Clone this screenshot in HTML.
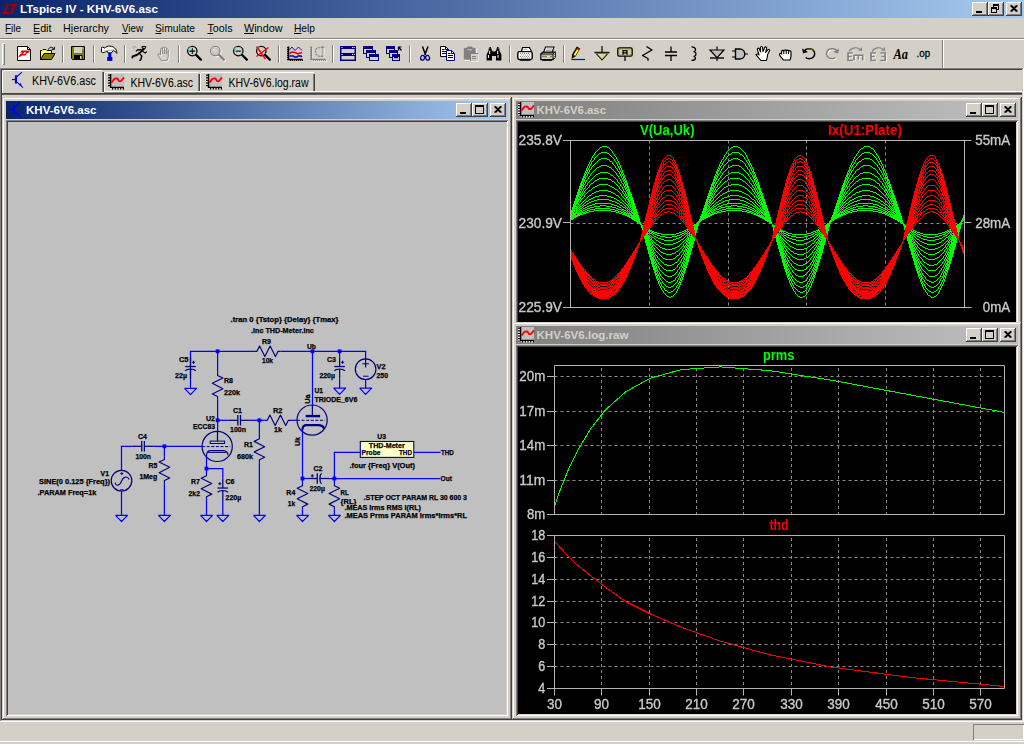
<!DOCTYPE html><html><head><meta charset="utf-8"><title>LTspice IV - KHV-6V6.asc</title><style>
html,body{margin:0;padding:0;}
body{width:1024px;height:744px;overflow:hidden;background:#d4d0c8;position:relative;font-family:"Liberation Sans",sans-serif;font-size:11px;}
div{position:absolute;box-sizing:border-box;}
svg{position:absolute;left:0;top:0;overflow:visible;}
.btn{background:#d4d0c8;box-shadow:inset -1px -1px #404040,inset 1px 1px #fff,inset -2px -2px #808080,inset 2px 2px #d4d0c8;}
.win{background:#d4d0c8;box-shadow:inset -1px -1px #404040,inset 1px 1px #d4d0c8,inset -2px -2px #808080,inset 2px 2px #fff;}
.sunk{box-shadow:inset 1px 1px #808080,inset -1px -1px #fff,inset 2px 2px #404040,inset -2px -2px #d4d0c8;}
.act{background:linear-gradient(to right,#0a246a,#a6caf0);}
.inact{background:linear-gradient(to right,#808080,#c0c0c0);}
text{font-family:"Liberation Sans",sans-serif;}
</style></head><body><div class="act" style="left:0px;top:0px;width:1024px;height:18px;"></div><div class="btn" style="left:972px;top:2px;width:16px;height:14px"><div style="left:4px;top:9px;width:6px;height:2px;background:#000"></div></div><div class="btn" style="left:988px;top:2px;width:16px;height:14px"><div style="left:5px;top:2px;width:6px;height:6px;border:1px solid #000;border-top:2px solid #000"></div><div style="left:3px;top:5px;width:6px;height:6px;border:1px solid #000;border-top:2px solid #000;background:#d4d0c8"></div></div><div class="btn" style="left:1006px;top:2px;width:16px;height:14px"><svg width="16" height="14" shape-rendering="crispEdges"><path d="M4.5 3.5 L10.5 9.5 M5.5 3.5 L11.5 9.5 M10.5 3.5 L4.5 9.5 M11.5 3.5 L5.5 9.5" stroke="#000" stroke-width="1.25" fill="none" shape-rendering="auto"/></svg></div><div style="left:0px;top:38px;width:1024px;height:1px;background:#808080"></div><div style="left:0px;top:39px;width:1024px;height:1px;background:#fff"></div><div style="left:2px;top:43px;width:3px;height:22px;background:#d4d0c8;box-shadow:inset 1px 1px #fff,inset -1px -1px #808080"></div><div style="left:942px;top:40px;width:1px;height:28px;background:#808080"></div><div style="left:943px;top:40px;width:1px;height:28px;background:#fff"></div><div style="left:62px;top:45px;width:1px;height:18px;background:#808080"></div><div style="left:63px;top:45px;width:1px;height:18px;background:#fff"></div><div style="left:93px;top:45px;width:1px;height:18px;background:#808080"></div><div style="left:94px;top:45px;width:1px;height:18px;background:#fff"></div><div style="left:124px;top:45px;width:1px;height:18px;background:#808080"></div><div style="left:125px;top:45px;width:1px;height:18px;background:#fff"></div><div style="left:178px;top:45px;width:1px;height:18px;background:#808080"></div><div style="left:179px;top:45px;width:1px;height:18px;background:#fff"></div><div style="left:278px;top:45px;width:1px;height:18px;background:#808080"></div><div style="left:279px;top:45px;width:1px;height:18px;background:#fff"></div><div style="left:332px;top:45px;width:1px;height:18px;background:#808080"></div><div style="left:333px;top:45px;width:1px;height:18px;background:#fff"></div><div style="left:409px;top:45px;width:1px;height:18px;background:#808080"></div><div style="left:410px;top:45px;width:1px;height:18px;background:#fff"></div><div style="left:509px;top:45px;width:1px;height:18px;background:#808080"></div><div style="left:510px;top:45px;width:1px;height:18px;background:#fff"></div><div style="left:563px;top:45px;width:1px;height:18px;background:#808080"></div><div style="left:564px;top:45px;width:1px;height:18px;background:#fff"></div><div style="left:0px;top:68px;width:1024px;height:1px;background:#808080"></div><div style="left:0px;top:69px;width:1024px;height:1px;background:#404040"></div><div style="left:0px;top:68px;width:1px;height:654px;background:#808080"></div><div style="left:1px;top:69px;width:1px;height:652px;background:#404040"></div><div style="left:1023px;top:68px;width:1px;height:654px;background:#fff"></div><div style="left:1022px;top:69px;width:1px;height:652px;background:#d4d0c8"></div><div style="left:0px;top:721px;width:1024px;height:1px;background:#fff"></div><div style="left:1px;top:720px;width:1022px;height:1px;background:#d4d0c8"></div><div style="left:2px;top:91px;width:1020px;height:1px;background:#fff"></div><div style="left:2px;top:92px;width:1020px;height:1px;background:#909090"></div><div style="left:2px;top:93px;width:1020px;height:1px;background:#404040"></div><div style="left:2px;top:94px;width:1020px;height:1px;background:#606060"></div><div style="left:2px;top:70px;width:102px;height:24px;background:#d4d0c8"></div><div style="left:4px;top:70px;width:98px;height:1px;background:#fff"></div><div style="left:2px;top:72px;width:1px;height:21px;background:#fff"></div><div style="left:3px;top:71px;width:1px;height:1px;background:#fff"></div><div style="left:102px;top:72px;width:1px;height:20px;background:#808080"></div><div style="left:103px;top:72px;width:1px;height:20px;background:#404040"></div><div style="left:2px;top:93px;width:102px;height:1px;background:#404040"></div><div style="left:105px;top:72px;width:94px;height:1px;background:#fff"></div><div style="left:104px;top:73px;width:1px;height:18px;background:#fff"></div><div style="left:199px;top:74px;width:1px;height:17px;background:#404040"></div><div style="left:198px;top:74px;width:1px;height:17px;background:#808080"></div><div style="left:201px;top:72px;width:113px;height:1px;background:#fff"></div><div style="left:200px;top:73px;width:1px;height:18px;background:#fff"></div><div style="left:314px;top:74px;width:1px;height:17px;background:#404040"></div><div style="left:313px;top:74px;width:1px;height:17px;background:#808080"></div><div class="win" style="left:2px;top:97px;width:510px;height:623px"><div class="act" style="left:4px;top:4px;width:502px;height:18px"></div><div class="btn" style="left:488px;top:6px;width:16px;height:14px"><svg width="16" height="14" shape-rendering="crispEdges"><path d="M4.5 3.5 L10.5 9.5 M5.5 3.5 L11.5 9.5 M10.5 3.5 L4.5 9.5 M11.5 3.5 L5.5 9.5" stroke="#000" stroke-width="1.25" fill="none" shape-rendering="auto"/></svg></div><div class="btn" style="left:470px;top:6px;width:16px;height:14px"><div style="left:3px;top:2px;width:9px;height:9px;border:1px solid #000;border-top:2px solid #000"></div></div><div class="btn" style="left:454px;top:6px;width:16px;height:14px"><div style="left:4px;top:9px;width:6px;height:2px;background:#000"></div></div></div><div class="sunk" style="left:6px;top:120px;width:502px;height:596px;background:#c0c0c0"></div><div class="win" style="left:512px;top:97px;width:510px;height:232px"><div class="inact" style="left:4px;top:4px;width:502px;height:18px"></div><div class="btn" style="left:488px;top:6px;width:16px;height:14px"><svg width="16" height="14" shape-rendering="crispEdges"><path d="M4.5 3.5 L10.5 9.5 M5.5 3.5 L11.5 9.5 M10.5 3.5 L4.5 9.5 M11.5 3.5 L5.5 9.5" stroke="#000" stroke-width="1.25" fill="none" shape-rendering="auto"/></svg></div><div class="btn" style="left:470px;top:6px;width:16px;height:14px"><div style="left:3px;top:2px;width:9px;height:9px;border:1px solid #000;border-top:2px solid #000"></div></div><div class="btn" style="left:454px;top:6px;width:16px;height:14px"><div style="left:4px;top:9px;width:6px;height:2px;background:#000"></div></div></div><div class="sunk" style="left:516px;top:120px;width:502px;height:210px;background:#000"></div><div class="win" style="left:512px;top:322px;width:510px;height:398px"><div class="inact" style="left:4px;top:4px;width:502px;height:18px"></div><div class="btn" style="left:488px;top:6px;width:16px;height:14px"><svg width="16" height="14" shape-rendering="crispEdges"><path d="M4.5 3.5 L10.5 9.5 M5.5 3.5 L11.5 9.5 M10.5 3.5 L4.5 9.5 M11.5 3.5 L5.5 9.5" stroke="#000" stroke-width="1.25" fill="none" shape-rendering="auto"/></svg></div><div class="btn" style="left:470px;top:6px;width:16px;height:14px"><div style="left:3px;top:2px;width:9px;height:9px;border:1px solid #000;border-top:2px solid #000"></div></div><div class="btn" style="left:454px;top:6px;width:16px;height:14px"><div style="left:4px;top:9px;width:6px;height:2px;background:#000"></div></div></div><div class="sunk" style="left:516px;top:345px;width:502px;height:371px;background:#000"></div><div style="left:0px;top:741px;width:1024px;height:1px;background:#fff"></div><div style="left:973px;top:724px;width:51px;height:16px;box-shadow:inset 1px 1px #808080,inset -1px -1px #fff"></div><svg width="1024" height="744" style="z-index:40"><g transform="translate(17,46)"><path d="M0.5 0.5 H10.5 L13.5 3.5 V14.5 H0.5 Z" fill="#fff" stroke="#000"/><path d="M10.5 0.5 V3.5 H13.5" fill="none" stroke="#000"/><path d="M4.6 4.4 H13 L11.4 7 H10 L8.6 9.4 H5.4 L1 11.4 L3.4 7.8 H4.4 L5.2 6.6 H3.2 Z" fill="#e80000"/><path d="M6 8 L7.2 6.2 H9.2 L8 8 Z" fill="#fff"/></g><g transform="translate(40,46)"><path d="M0.5 13.5 V4.5 H2 L3 3.5 H6 L7 4.5 H11.5 V7" fill="#ffff80" stroke="#000"/><path d="M0.5 13.5 L4 7.5 H15 L11.5 13.5 Z" fill="#808000" stroke="#000"/><path d="M8.5 3.5 C9.5 0.5 12.5 0.5 13.5 3" fill="none" stroke="#000"/><path d="M11.6 3.4 H14.4 V0.8" fill="none" stroke="#000"/></g><g transform="translate(71,46)"><path d="M0.5 0.5 H13.5 V13.5 H1.5 L0.5 12.5 Z" fill="#808000" stroke="#000"/><rect x="3" y="1" width="8" height="6" fill="#d4d0c8"/><rect x="11.5" y="1.5" width="1" height="1.5" fill="#d4d0c8"/><rect x="3" y="9" width="8.5" height="4.5" fill="#000"/><rect x="9" y="10" width="1.6" height="3" fill="#d4d0c8"/></g><g transform="translate(102,46)"><path d="M-0.5 2.4 Q-0.9 1.2 0.6 1.2 L2.8 2 C5 -0.7 11 -0.7 13.6 3 C14.6 4.6 15 6 14.8 7.4 C13.8 5.6 12.6 4.8 11 4.6 L9.6 6.8 L5.8 6.8 L5.4 5.4 C4.4 5.4 3.6 5.6 2.8 6.2 L0.4 6.6 Q-1 6.4 -0.6 5 Z" fill="#fff" stroke="#000" stroke-width="1" stroke-linejoin="round"/><path d="M2.6 5.2 C5 4.4 9 4 11.6 4" fill="none" stroke="#a0a0a0" stroke-width="1.2"/><rect x="6.3" y="7" width="3" height="7.8" fill="#0000c8"/><rect x="5.2" y="11" width="5.2" height="3.8" fill="#0000c8"/></g><g transform="translate(133,46)"><g stroke="#000" fill="none" stroke-linecap="round" stroke-linejoin="round"><path d="M9.2 0.5 H13 L12.2 2.6 H9.8 Z" fill="#000" stroke-width="0.8"/><rect x="10.4" y="1" width="1.3" height="1.1" fill="#fff" stroke="none"/><path d="M10.8 3 L7 6.6 L3.8 9 L-0.4 10.4 L-0.6 11.6" stroke-width="1.9"/><path d="M6.6 7.8 L8.8 10 L7.8 13.6 L6.9 14.3" stroke-width="1.5"/><path d="M9.4 3.9 L5 3.7 L3.2 5" stroke-width="1.2"/><path d="M9.8 5.6 L12.2 7 L13.4 5.9" stroke-width="1.2"/><path d="M-0.4 1.6 L1.2 2.8 M1.4 0.4 L3.2 1.6 M0.6 0.2 L1.6 0.8" stroke="#909090" stroke-width="0.8"/></g></g><g transform="translate(156,46)"><path d="M4.5 14.5 C3 12 1.5 10 0.8 8.2 C1.6 7.2 2.8 7.8 3.6 9 V3 C3.6 1.8 5.4 1.8 5.4 3 V1.6 C5.4 0.4 7.4 0.4 7.4 1.6 V2.2 C7.4 1 9.4 1 9.4 2.2 V3.4 C9.4 2.4 11.2 2.4 11.2 3.6 V10 C11.2 12 10.4 13 10 14.5 Z" transform="translate(1.8,1)" fill="none" stroke="#fff" stroke-width="1"/><path d="M4.5 14.5 C3 12 1.5 10 0.8 8.2 C1.6 7.2 2.8 7.8 3.6 9 V3 C3.6 1.8 5.4 1.8 5.4 3 V1.6 C5.4 0.4 7.4 0.4 7.4 1.6 V2.2 C7.4 1 9.4 1 9.4 2.2 V3.4 C9.4 2.4 11.2 2.4 11.2 3.6 V10 C11.2 12 10.4 13 10 14.5 Z" transform="translate(1,0.2)" fill="none" stroke="#808080" stroke-width="1"/><path d="M6.4 3 V8 M8.4 2.4 V8 M10.4 3.6 V8" stroke="#808080" stroke-width="0.9" fill="none"/></g><g transform="translate(187,46)"><circle cx="5.3" cy="5.1" r="4.7" fill="none" stroke="#000" stroke-width="1.25"/><path d="M1.5 3.4 A4 4 0 0 1 3.8 1.4" stroke="#00ffff" stroke-width="1.3" fill="none"/><path d="M7.4 8.8 A4 4 0 0 0 9 6.8" stroke="#00ffff" stroke-width="1.3" fill="none"/><path d="M9 8.8 L13.8 13.6" stroke="#000" stroke-width="2.3" stroke-linecap="round"/><path d="M2.4 5.1 H8.2 M5.3 2.2 V8" stroke="#000" stroke-width="1.1"/></g><g transform="translate(210,46)"><g transform="translate(1,1)"><circle cx="5.3" cy="5.1" r="4.7" fill="none" stroke="#fff" stroke-width="1.25"/><path d="M1.5 3.4 A4 4 0 0 1 3.8 1.4" stroke="#fff" stroke-width="1.3" fill="none"/><path d="M7.4 8.8 A4 4 0 0 0 9 6.8" stroke="#fff" stroke-width="1.3" fill="none"/><path d="M9 8.8 L13.8 13.6" stroke="#fff" stroke-width="2.3" stroke-linecap="round"/></g><circle cx="5.3" cy="5.1" r="4.7" fill="none" stroke="#808080" stroke-width="1.25"/><path d="M1.5 3.4 A4 4 0 0 1 3.8 1.4" stroke="#c0c0c0" stroke-width="1.3" fill="none"/><path d="M7.4 8.8 A4 4 0 0 0 9 6.8" stroke="#c0c0c0" stroke-width="1.3" fill="none"/><path d="M9 8.8 L13.8 13.6" stroke="#808080" stroke-width="2.3" stroke-linecap="round"/><circle cx="5.3" cy="5.1" r="3.2" fill="none" stroke="#b8b8b8" stroke-width="1"/></g><g transform="translate(233,46)"><circle cx="5.3" cy="5.1" r="4.7" fill="none" stroke="#000" stroke-width="1.25"/><path d="M1.5 3.4 A4 4 0 0 1 3.8 1.4" stroke="#00ffff" stroke-width="1.3" fill="none"/><path d="M7.4 8.8 A4 4 0 0 0 9 6.8" stroke="#00ffff" stroke-width="1.3" fill="none"/><path d="M9 8.8 L13.8 13.6" stroke="#000" stroke-width="2.3" stroke-linecap="round"/><path d="M2.6 5.1 H8 " stroke="#000" stroke-width="1.1"/></g><g transform="translate(256,46)"><circle cx="5.3" cy="5.1" r="4.7" fill="none" stroke="#000" stroke-width="1.25"/><path d="M1.5 3.4 A4 4 0 0 1 3.8 1.4" stroke="#00ffff" stroke-width="1.3" fill="none"/><path d="M7.4 8.8 A4 4 0 0 0 9 6.8" stroke="#00ffff" stroke-width="1.3" fill="none"/><path d="M9 8.8 L13.8 13.6" stroke="#000" stroke-width="2.3" stroke-linecap="round"/><path d="M0.5 0.5 L9.5 13 M12.5 1.5 L0.5 10.5" stroke="#ff0000" stroke-width="1.5"/></g><g transform="translate(287,46)"><path d="M1.5 0.5 V13.5 H15.5" fill="none" stroke="#000" stroke-width="1.6"/><rect x="0" y="1.2" width="1.6" height="1" fill="#000"/><rect x="0" y="3.2" width="1.6" height="1" fill="#000"/><rect x="0" y="5.2" width="1.6" height="1" fill="#000"/><rect x="0" y="7.2" width="1.6" height="1" fill="#000"/><rect x="0" y="9.2" width="1.6" height="1" fill="#000"/><rect x="0" y="11.2" width="1.6" height="1" fill="#000"/><rect x="0" y="13.2" width="1.6" height="1" fill="#000"/><rect x="3" y="13.5" width="1" height="1.5" fill="#000"/><rect x="5" y="13.5" width="1" height="1.5" fill="#000"/><rect x="7" y="13.5" width="1" height="1.5" fill="#000"/><rect x="9" y="13.5" width="1" height="1.5" fill="#000"/><rect x="11" y="13.5" width="1" height="1.5" fill="#000"/><rect x="13" y="13.5" width="1" height="1.5" fill="#000"/><rect x="15" y="13.5" width="1" height="1.5" fill="#000"/><path d="M2.5 4 L5 1 L8 4.5 L11.5 1 L15 4.5" fill="none" stroke="#4000a0" stroke-width="1"/><path d="M2.5 7.5 L5 6 L8 6.5 L11 7.8 L15 6.4" fill="none" stroke="#ff0000" stroke-width="1.6"/><path d="M2.5 10 H6.5 L7.5 11 H10 L11 10 H14 L15 10.8" fill="none" stroke="#0000c0" stroke-width="1.6"/></g><g transform="translate(310,46)"><g transform="translate(0.8,0.8)"><path d="M1.5 0.5 V13.5 H15.5" fill="none" stroke="#fff" stroke-width="1.6"/><rect x="0" y="1.2" width="1.6" height="1" fill="#fff"/><rect x="0" y="3.2" width="1.6" height="1" fill="#fff"/><rect x="0" y="5.2" width="1.6" height="1" fill="#fff"/><rect x="0" y="7.2" width="1.6" height="1" fill="#fff"/><rect x="0" y="9.2" width="1.6" height="1" fill="#fff"/><rect x="0" y="11.2" width="1.6" height="1" fill="#fff"/><rect x="0" y="13.2" width="1.6" height="1" fill="#fff"/><rect x="3" y="13.5" width="1" height="1.5" fill="#fff"/><rect x="5" y="13.5" width="1" height="1.5" fill="#fff"/><rect x="7" y="13.5" width="1" height="1.5" fill="#fff"/><rect x="9" y="13.5" width="1" height="1.5" fill="#fff"/><rect x="11" y="13.5" width="1" height="1.5" fill="#fff"/><rect x="13" y="13.5" width="1" height="1.5" fill="#fff"/><rect x="15" y="13.5" width="1" height="1.5" fill="#fff"/></g><path d="M1.5 0.5 V13.5 H15.5" fill="none" stroke="#808080" stroke-width="1.6"/><rect x="0" y="1.2" width="1.6" height="1" fill="#808080"/><rect x="0" y="3.2" width="1.6" height="1" fill="#808080"/><rect x="0" y="5.2" width="1.6" height="1" fill="#808080"/><rect x="0" y="7.2" width="1.6" height="1" fill="#808080"/><rect x="0" y="9.2" width="1.6" height="1" fill="#808080"/><rect x="0" y="11.2" width="1.6" height="1" fill="#808080"/><rect x="0" y="13.2" width="1.6" height="1" fill="#808080"/><rect x="3" y="13.5" width="1" height="1.5" fill="#808080"/><rect x="5" y="13.5" width="1" height="1.5" fill="#808080"/><rect x="7" y="13.5" width="1" height="1.5" fill="#808080"/><rect x="9" y="13.5" width="1" height="1.5" fill="#808080"/><rect x="11" y="13.5" width="1" height="1.5" fill="#808080"/><rect x="13" y="13.5" width="1" height="1.5" fill="#808080"/><rect x="15" y="13.5" width="1" height="1.5" fill="#808080"/><path d="M13 1.5 C6 1 5 3.5 5.5 6 C6 9 8 10.5 12 10.5" fill="none" stroke="#808080" stroke-width="1.2" stroke-dasharray="2 1"/><path d="M13 0.5 V11 M11.5 2 L13 0.5 L14.5 2 M11.5 9.5 L13 11 L14.5 9.5" fill="none" stroke="#808080" stroke-width="1"/><path d="M14 1.5 V12 " fill="none" stroke="#fff" stroke-width="0.8"/></g><g transform="translate(340,46)"><rect x="0.75" y="0.75" width="14.5" height="13.5" fill="#d4d0c8" stroke="#000080" stroke-width="1.5"/><rect x="0" y="0" width="16" height="3" fill="#000080"/><rect x="0" y="7" width="16" height="3" fill="#000080"/><rect x="1.5" y="1" width="1" height="1" fill="#fff"/><rect x="12" y="1" width="1" height="1" fill="#fff"/><rect x="13.7" y="1" width="1" height="1" fill="#fff"/><rect x="1.5" y="8" width="1" height="1" fill="#fff"/><rect x="12" y="8" width="1" height="1" fill="#fff"/><rect x="13.7" y="8" width="1" height="1" fill="#fff"/></g><g transform="translate(363,46)"><rect x="0.5" y="0.5" width="9" height="7" fill="#d4d0c8" stroke="#000080" stroke-width="1"/><rect x="0" y="0" width="10" height="3" fill="#000080"/><rect x="3.5" y="4.5" width="9" height="7" fill="#d4d0c8" stroke="#000080" stroke-width="1"/><rect x="3" y="4" width="10" height="3" fill="#000080"/><rect x="6.5" y="8.5" width="9" height="6" fill="#d4d0c8" stroke="#000080" stroke-width="1"/><rect x="6" y="8" width="10" height="3" fill="#000080"/><rect x="0.6" y="0.6" width="1" height="1" fill="#ff00ff"/></g><g transform="translate(386,46)"><rect x="0.5" y="0.5" width="8" height="7" fill="#d4d0c8" stroke="#000080" stroke-width="1"/><rect x="0" y="0" width="9" height="3" fill="#000080"/><rect x="3.5" y="4.5" width="8" height="7" fill="#d4d0c8" stroke="#000080" stroke-width="1"/><rect x="3" y="4" width="9" height="3" fill="#000080"/><rect x="6.5" y="8.5" width="7" height="6" fill="#d4d0c8" stroke="#000080" stroke-width="1"/><rect x="6" y="8" width="8" height="3" fill="#000080"/><rect x="8" y="11" width="4" height="1.2" fill="#000"/><path d="M12 1 H15.5 M12.5 1 V4.5 M12.5 1 L15.5 4.5" stroke="#000" stroke-width="1.2" fill="none"/></g><g transform="translate(417,46)"><path d="M5.5 0.5 L8.6 9 M11 0.5 L7.8 9" stroke="#000" stroke-width="1.5" fill="none"/><ellipse cx="5.6" cy="11.8" rx="1.9" ry="2.4" fill="none" stroke="#000080" stroke-width="1.3" transform="rotate(20 5.6 11.8)"/><ellipse cx="10.6" cy="11.8" rx="1.9" ry="2.4" fill="none" stroke="#000080" stroke-width="1.3" transform="rotate(-20 10.6 11.8)"/></g><g transform="translate(440,46)"><path d="M0.5 0.5 H5.5 L8.5 3.5 V10.5 H0.5 Z" fill="#fff" stroke="#000"/><path d="M5.5 0.5 V3.5 H8.5" fill="none" stroke="#000"/><path d="M2 5.5 H7 M2 7.5 H7 M2 3.5 H4.5" stroke="#000" stroke-width="1" fill="none"/><path d="M6.5 4.5 H11.5 L14.5 7.5 V14.5 H6.5 Z" fill="#fff" stroke="#000080"/><path d="M11.5 4.5 V7.5 H14.5" fill="none" stroke="#000080"/><path d="M8 9.5 H13 M8 11.5 H13 M8 7.5 H10.5" stroke="#000" stroke-width="1" fill="none"/></g><g transform="translate(463,46)"><rect x="1.8" y="2.8" width="12" height="12" fill="#fff"/><rect x="0.8" y="1.8" width="12" height="12" rx="1.5" fill="#808080"/><rect x="4" y="0.6" width="5.6" height="2.4" rx="1" fill="#808080"/><rect x="4.6" y="3.2" width="4.6" height="1" fill="#c8c8c8"/><rect x="7.5" y="7.5" width="7" height="7" fill="#d4d0c8" stroke="#808080"/><path d="M9 10.5 H13 M9 12.5 H13" stroke="#808080"/><path d="M15 8 V15 H8" stroke="#fff" fill="none"/></g><g transform="translate(486,46)"><path d="M2.6 2.4 H5.6 V4 L6.8 5.4 H9.2 L10.4 4 V2.4 H13.4 V4.4 L15.4 8.6 V14.4 H10 V10 H6 V14.4 H0.6 V8.6 L2.6 4.4 Z" fill="#000"/><rect x="3.4" y="1" width="1.6" height="1.6" fill="#000"/><rect x="11" y="1" width="1.6" height="1.6" fill="#000"/><rect x="3.2" y="4.6" width="1" height="3.4" fill="#fff"/><rect x="11.2" y="4.6" width="1" height="3.4" fill="#fff"/><rect x="2" y="9" width="0.9" height="3" fill="#fff"/><rect x="11.6" y="9" width="0.9" height="3" fill="#fff"/></g><g transform="translate(517,46)"><path d="M4.5 5.5 L5.5 1.5 H12.5 L14.5 5.5" fill="#fff" stroke="#000" stroke-width="1.2"/><path d="M6.5 2.8 L7.5 4 L9 2.6 L10.4 3.8" fill="none" stroke="#808080" stroke-width="0.8"/><rect x="0.8" y="5.6" width="14.4" height="7.8" rx="1.6" fill="#fff" stroke="#000" stroke-width="1.4"/><path d="M3 7.5 H13 M4 9 H14 M3 10.5 H13 M4 12 H14" stroke="#808080" stroke-width="0.9" stroke-dasharray="1 1"/><rect x="2.5" y="13.4" width="11" height="1.4" fill="#000"/></g><g transform="translate(540,46)"><path d="M3.5 6.5 L5.5 1 H14 L12 6.5 Z" fill="#fff" stroke="#000" stroke-width="1.1"/><path d="M6.5 3 H12 M6 4.6 H11.4" stroke="#808080" stroke-width="0.8"/><path d="M0.8 8 L3 6.2 H15.2 V11 L13 13.6 H0.8 Z" fill="#d4d0c8" stroke="#000" stroke-width="1.2"/><path d="M0.8 8 H13 L15.2 6.2 M13 8 V13.6" fill="none" stroke="#000" stroke-width="1"/><rect x="1.6" y="9.6" width="10.6" height="1.6" fill="#808080"/><rect x="7" y="9.8" width="3" height="1.2" fill="#ffff00"/><path d="M13.8 8 L14.8 7.2 M13.8 10 L14.8 9.2 M13.8 12 L14.8 11" stroke="#fff" stroke-width="0.8"/><rect x="2" y="13.6" width="10" height="1.2" fill="#000"/></g><g transform="translate(571,46)"><path d="M0.5 13.5 H14" stroke="#0000ff" stroke-width="1.2"/><path d="M0.6 12.8 L1.2 8.2 L5.8 0.6 L9.2 2.6 L4.6 10.4 Z" fill="#000"/><path d="M2.6 8.8 L6 3 L7.8 4 L4.2 10 Z" fill="#ffff00"/><path d="M6 3 L6.8 1.8 L8.4 2.8 L7.8 4 Z" fill="#ff0000"/><path d="M2.2 9.4 L3.8 10.4 " stroke="#ff0000" stroke-width="0.9"/></g><g transform="translate(594,46)"><path d="M8 0 V6.5" stroke="#000" stroke-width="1.2"/><path d="M0.5 6.5 H15.5" stroke="#000" stroke-width="1.4"/><path d="M2 7.4 H14 L8 14 Z" fill="#d4d0c8" stroke="#808000" stroke-width="1.2"/><path d="M2.6 8 L8 14 L13.4 8" fill="none" stroke="#202000" stroke-width="1"/></g><g transform="translate(617,46)"><rect x="0.8" y="1.8" width="14.4" height="8.4" rx="1.6" fill="#d4d0c8" stroke="#000" stroke-width="1.3"/><rect x="1.8" y="2.8" width="12.4" height="6.4" rx="1" fill="none" stroke="#808000" stroke-width="0.9"/><path d="M8 10.5 V15" stroke="#000" stroke-width="1.3"/><path d="M6 8.8 V4.6 H10 V8.8 M6 6.8 H10" fill="none" stroke="#000" stroke-width="1.3"/></g><g transform="translate(640,46)"><path d="M6.5 0.5 L12 4 L2.5 9.5 L8 12.5 V14.8" fill="none" stroke="#000" stroke-width="1.3" stroke-linejoin="round"/></g><g transform="translate(663,46)"><path d="M8 0.5 V6 M8 9.6 V15" stroke="#000" stroke-width="1.3"/><path d="M2 6.1 H14 M2 9.5 H14" stroke="#000" stroke-width="1.5"/></g><g transform="translate(686,46)"><path d="M5.5 0.8 C10.5 0.8 10.5 5.6 7.4 5.6 C10.8 5.6 10.8 10.4 7.4 10.4 C10.6 10.4 10.2 14.6 5.5 14.4" fill="none" stroke="#000" stroke-width="1.3"/></g><g transform="translate(709,46)"><path d="M8 0.5 V15" stroke="#000" stroke-width="1.2"/><path d="M1 4 H15 L8 11.6 Z" fill="#c0c0c0" stroke="#000" stroke-width="1.2"/><path d="M1 12 H15" stroke="#000" stroke-width="1.4"/></g><g transform="translate(732,46)"><path d="M0 5 H3.5 M0 11 H3.5 M13 8 H16" stroke="#000" stroke-width="1.2"/><path d="M3.5 3 H7.5 C14.5 3 14.5 13 7.5 13 H3.5 Z" fill="#c0c0c0" stroke="#000" stroke-width="1.4"/></g><g transform="translate(755,46)"><path d="M6 14.5 C4 12 2 10.5 1 8.6 C1.8 7.6 3.2 8 4 9 L2.4 3.6 C2 2.2 3.8 1.6 4.4 3 L5.6 6 L5.4 1.6 C5.4 0.2 7.4 0.2 7.5 1.6 L8 5.6 L9.6 1.6 C10.2 0.4 12 1 11.6 2.4 L10.6 6.4 L12.8 3.8 C13.8 2.8 15.2 3.8 14.4 5 L12.6 8.4 C12.6 11 12 12.6 11.4 14.5 Z" fill="#fff" stroke="#000" stroke-width="1.1" stroke-linejoin="round"/></g><g transform="translate(778,46)"><path d="M5.4 14 C4 12 2.6 11 1.6 9 C1.2 7.6 2.6 6.8 3.6 7.8 V5.6 C3.6 4 5.6 4 5.8 5.2 C5.8 3.6 8 3.6 8.2 5 C8.4 3.6 10.6 3.8 10.6 5.2 C11 4.2 13 4.4 13 6 V9.6 C13 11.6 12.4 12.6 12 14 Z" fill="#fff" stroke="#000" stroke-width="1.2" stroke-linejoin="round"/><path d="M5.8 5.2 V8 M8.2 5 V8 M10.6 5.2 V8" stroke="#000" stroke-width="1" fill="none"/></g><g transform="translate(800.4,46) scale(1.09,1)"><path d="M3.4 5.4 C5 2 10.6 1.6 12.6 5.4 C14.2 9 12 12.6 8 12.8 C6.6 12.8 5.6 12.4 4.8 11.6" fill="none" stroke="#000" stroke-width="1.4"/><path d="M6 3.4 C8.4 2.4 11 3.2 12 5.4" fill="none" stroke="#808000" stroke-width="1"/><path d="M1.6 2.4 L2.4 7.4 L7 6 Z" fill="#000"/></g><g transform="translate(823.4,46) scale(1.09,1)"><g transform="translate(0.8,0.8)"><path d="M12.6 5.4 C11 2 5.4 1.6 3.4 5.4 C1.8 9 4 12.6 8 12.8 C9.4 12.8 10.4 12.4 11.2 11.6" fill="none" stroke="#fff" stroke-width="1.3"/></g><path d="M12.6 5.4 C11 2 5.4 1.6 3.4 5.4 C1.8 9 4 12.6 8 12.8 C9.4 12.8 10.4 12.4 11.2 11.6" fill="none" stroke="#808080" stroke-width="1.4"/><path d="M14.4 2.4 L13.6 7.4 L9 6 Z" fill="#808080"/></g><g transform="translate(846.4,46) scale(1.09,1)"><g transform="translate(0.8,0.8)" stroke="#fff" fill="none" stroke-width="1.3"><path d="M6.0 7 H1.5 V14.4 H6.0 M1.5 10.6 H4.9"/><path d="M7 14.4 V9.2 H15 V14.4 M11 9.2 V13.4"/></g><g stroke="#808080" fill="none" stroke-width="1.5"><path d="M6.0 7 H1.5 V14.4 H6.0 M1.5 10.6 H4.9"/><path d="M7 14.4 V9.2 H15 V14.4 M11 9.2 V13.4"/><path d="M2.5 5.4 C4.5 1.4 10 0.6 13.4 3.8" stroke-width="1.1"/><path d="M11 4.2 H13.8 V1.4" stroke-width="1.1"/></g></g><g transform="translate(869.4,46) scale(1.09,1)"><g transform="translate(0.8,0.8)" stroke="#fff" fill="none" stroke-width="1.3"><path d="M6.0 7 H1.5 V14.4 H6.0 M1.5 10.6 H4.9"/><path d="M10.0 7 H14.5 V14.4 H10.0 M14.5 10.6 H11.1"/></g><g stroke="#808080" fill="none" stroke-width="1.5"><path d="M6.0 7 H1.5 V14.4 H6.0 M1.5 10.6 H4.9"/><path d="M10.0 7 H14.5 V14.4 H10.0 M14.5 10.6 H11.1"/><path d="M2.5 5.4 C4.5 1.4 10 0.6 13.4 3.8" stroke-width="1.1"/><path d="M11 4.2 H13.8 V1.4" stroke-width="1.1"/></g></g><g transform="translate(894,46)"><text x="-0.5" y="13" style="font-family:Liberation Serif,serif" font-style="italic" font-weight="bold" font-size="15" fill="#000" textLength="14.5" lengthAdjust="spacingAndGlyphs">Aa</text></g><g transform="translate(917,46)"><text x="-0.5" y="10.5" font-family="Liberation Sans,sans-serif" font-size="11.5" fill="#000" stroke="#000" stroke-width="0.3" textLength="13.6" lengthAdjust="spacingAndGlyphs">.op</text></g><g transform="translate(2.2,3.8)"><path d="M4.6 0.4 L6.2 0.4 L3.6 8.2 L7.2 8.2 L6.6 10 L0 10 L0.8 8.4 L2 8.2 Z" fill="#a80000" stroke="#a80000" stroke-width="0.7"/><path d="M8.4 0.4 L15 0.4 L14.4 2 L13.2 2 L10.4 8.8 L9 10.2 L8.2 9.6 L11.2 2 L7.8 2 Z" fill="#a80000" stroke="#a80000" stroke-width="0.7"/></g><g transform="translate(12,72)"><g stroke="#0000ff" fill="none"><path d="M0 7.5 H3.2" stroke-width="1.2"/><path d="M3.95 3.3 V11.6" stroke-width="2.1"/><path d="M5 4.5 L10 0.1" stroke-width="1.1"/><path d="M5 10.2 L11 15.7" stroke-width="1.1"/></g><path d="M6.6 12.9 L9.9 14.1 L8.6 10.8 Z" fill="#0000ff"/></g><g transform="translate(10,102)"><g stroke="#0000ff" fill="none"><path d="M0 7.5 H3.2" stroke-width="1.2"/><path d="M3.95 3.3 V11.6" stroke-width="2.1"/><path d="M5 4.5 L10 0.1" stroke-width="1.1"/><path d="M5 10.2 L11 15.7" stroke-width="1.1"/></g><path d="M6.6 12.9 L9.9 14.1 L8.6 10.8 Z" fill="#0000ff"/></g><g transform="translate(108,74)"><rect x="2.5" y="0" width="13.5" height="13" fill="#c0c0c0"/><path d="M2.6 0 V13.4 H16" fill="none" stroke="#000" stroke-width="1.4"/><rect x="0" y="0.6" width="2" height="1.2" fill="#000"/><rect x="0" y="3.2" width="2" height="1.2" fill="#000"/><rect x="0" y="5.8" width="2" height="1.2" fill="#000"/><rect x="0" y="8.4" width="2" height="1.2" fill="#000"/><rect x="0" y="11.0" width="2" height="1.2" fill="#000"/><rect x="4.0" y="13.4" width="1.2" height="2.2" fill="#000"/><rect x="6.7" y="13.4" width="1.2" height="2.2" fill="#000"/><rect x="9.4" y="13.4" width="1.2" height="2.2" fill="#000"/><rect x="12.100000000000001" y="13.4" width="1.2" height="2.2" fill="#000"/><rect x="14.8" y="13.4" width="1.2" height="2.2" fill="#000"/><path d="M3.4 8.6 L6.6 4.6 L9.4 4.4 L11.2 7.2 L13 7 L16 3.4" fill="none" stroke="#ff0000" stroke-width="1.8" stroke-linejoin="round"/></g><g transform="translate(206,74)"><rect x="2.5" y="0" width="13.5" height="13" fill="#c0c0c0"/><path d="M2.6 0 V13.4 H16" fill="none" stroke="#000" stroke-width="1.4"/><rect x="0" y="0.6" width="2" height="1.2" fill="#000"/><rect x="0" y="3.2" width="2" height="1.2" fill="#000"/><rect x="0" y="5.8" width="2" height="1.2" fill="#000"/><rect x="0" y="8.4" width="2" height="1.2" fill="#000"/><rect x="0" y="11.0" width="2" height="1.2" fill="#000"/><rect x="4.0" y="13.4" width="1.2" height="2.2" fill="#000"/><rect x="6.7" y="13.4" width="1.2" height="2.2" fill="#000"/><rect x="9.4" y="13.4" width="1.2" height="2.2" fill="#000"/><rect x="12.100000000000001" y="13.4" width="1.2" height="2.2" fill="#000"/><rect x="14.8" y="13.4" width="1.2" height="2.2" fill="#000"/><path d="M3.4 8.6 L6.6 4.6 L9.4 4.4 L11.2 7.2 L13 7 L16 3.4" fill="none" stroke="#ff0000" stroke-width="1.8" stroke-linejoin="round"/></g><g transform="translate(518,102)"><rect x="2.5" y="0" width="13.5" height="13" fill="#c0c0c0"/><rect x="0" y="0.4" width="2.6" height="12.6" fill="#f0f0f0"/><rect x="3.6" y="13.4" width="12.4" height="2.2" fill="#f0f0f0"/><path d="M2.6 0 V13.4 H16" fill="none" stroke="#000" stroke-width="1.4"/><rect x="0" y="0.6" width="2" height="1.2" fill="#000"/><rect x="0" y="3.2" width="2" height="1.2" fill="#000"/><rect x="0" y="5.8" width="2" height="1.2" fill="#000"/><rect x="0" y="8.4" width="2" height="1.2" fill="#000"/><rect x="0" y="11.0" width="2" height="1.2" fill="#000"/><rect x="4.0" y="13.4" width="1.2" height="2.2" fill="#000"/><rect x="6.7" y="13.4" width="1.2" height="2.2" fill="#000"/><rect x="9.4" y="13.4" width="1.2" height="2.2" fill="#000"/><rect x="12.100000000000001" y="13.4" width="1.2" height="2.2" fill="#000"/><rect x="14.8" y="13.4" width="1.2" height="2.2" fill="#000"/><path d="M3.4 8.6 L6.6 4.6 L9.4 4.4 L11.2 7.2 L13 7 L16 3.4" fill="none" stroke="#ff0000" stroke-width="1.8" stroke-linejoin="round"/></g><g transform="translate(518,327)"><rect x="2.5" y="0" width="13.5" height="13" fill="#c0c0c0"/><rect x="0" y="0.4" width="2.6" height="12.6" fill="#f0f0f0"/><rect x="3.6" y="13.4" width="12.4" height="2.2" fill="#f0f0f0"/><path d="M2.6 0 V13.4 H16" fill="none" stroke="#000" stroke-width="1.4"/><rect x="0" y="0.6" width="2" height="1.2" fill="#000"/><rect x="0" y="3.2" width="2" height="1.2" fill="#000"/><rect x="0" y="5.8" width="2" height="1.2" fill="#000"/><rect x="0" y="8.4" width="2" height="1.2" fill="#000"/><rect x="0" y="11.0" width="2" height="1.2" fill="#000"/><rect x="4.0" y="13.4" width="1.2" height="2.2" fill="#000"/><rect x="6.7" y="13.4" width="1.2" height="2.2" fill="#000"/><rect x="9.4" y="13.4" width="1.2" height="2.2" fill="#000"/><rect x="12.100000000000001" y="13.4" width="1.2" height="2.2" fill="#000"/><rect x="14.8" y="13.4" width="1.2" height="2.2" fill="#000"/><path d="M3.4 8.6 L6.6 4.6 L9.4 4.4 L11.2 7.2 L13 7 L16 3.4" fill="none" stroke="#ff0000" stroke-width="1.8" stroke-linejoin="round"/></g></svg><svg width="1024" height="744" style="z-index:30"><path d="M190.50 388.40 L190.50 351.30 L254.30 351.30" fill="none" stroke="#0000ff" stroke-width="1.25"/><path d="M254.30 351.30 L256.94 351.30 L259.58 346.02 L264.86 356.58 L270.14 346.02 L275.42 356.58 L278.06 351.30 L280.70 351.30" fill="none" stroke="#000080" stroke-width="1.15" stroke-linejoin="round"/><path d="M280.70 351.30 L365.60 351.30 L365.60 359.00" fill="none" stroke="#0000ff" stroke-width="1.25"/><path d="M190.50 357.30 L190.50 366.54" fill="none" stroke="#000080" stroke-width="1.25"/><path d="M190.50 369.18 L190.50 378.42" fill="none" stroke="#000080" stroke-width="1.25"/><path d="M185.22 366.54 L195.78 366.54" fill="none" stroke="#000080" stroke-width="1.3"/><path d="M185.22 370.83 Q186.54 369.18 190.50 369.18 Q194.46 369.18 195.78 370.83" fill="none" stroke="#000080" stroke-width="1.3"/><path d="M191.87 362.25 L195.07 362.25" fill="none" stroke="#000080" stroke-width="1"/><path d="M193.47 360.65 L193.47 363.85" fill="none" stroke="#000080" stroke-width="1"/><path d="M184.50 388.40 L196.50 388.40 L190.50 394.60 L184.50 388.40" fill="none" stroke="#0000ff" stroke-width="1.2" stroke-linejoin="round"/><path d="M217.60 351.30 L217.60 372.80" fill="none" stroke="#0000ff" stroke-width="1.25"/><path d="M217.60 372.80 L217.60 375.44 L222.88 378.08 L212.32 383.36 L222.88 388.64 L212.32 393.92 L217.60 396.56 L217.60 399.20" fill="none" stroke="#000080" stroke-width="1.15" stroke-linejoin="round"/><path d="M217.60 399.20 L217.60 431.00" fill="none" stroke="#0000ff" stroke-width="1.25"/><path d="M217.60 420.30 L228.60 420.30" fill="none" stroke="#0000ff" stroke-width="1.25"/><path d="M228.60 420.30 L237.84 420.30" fill="none" stroke="#000080" stroke-width="1.25"/><path d="M240.48 420.30 L249.72 420.30" fill="none" stroke="#000080" stroke-width="1.25"/><path d="M237.84 415.02 L237.84 425.58" fill="none" stroke="#000080" stroke-width="1.3"/><path d="M240.48 415.02 L240.48 425.58" fill="none" stroke="#000080" stroke-width="1.3"/><path d="M249.72 420.30 L264.60 420.30" fill="none" stroke="#0000ff" stroke-width="1.25"/><path d="M264.60 420.30 L267.24 420.30 L269.88 415.02 L275.16 425.58 L280.44 415.02 L285.72 425.58 L288.36 420.30 L291.00 420.30" fill="none" stroke="#000080" stroke-width="1.15" stroke-linejoin="round"/><path d="M291.00 420.30 L296.60 420.30" fill="none" stroke="#0000ff" stroke-width="1.25"/><path d="M259.40 420.30 L259.40 436.10" fill="none" stroke="#0000ff" stroke-width="1.25"/><path d="M259.40 436.10 L259.40 438.74 L254.12 441.38 L264.68 446.66 L254.12 451.94 L264.68 457.22 L259.40 459.86 L259.40 462.50" fill="none" stroke="#000080" stroke-width="1.15" stroke-linejoin="round"/><path d="M259.40 462.50 L259.40 515.30" fill="none" stroke="#0000ff" stroke-width="1.25"/><path d="M253.40 515.30 L265.40 515.30 L259.40 521.50 L253.40 515.30" fill="none" stroke="#0000ff" stroke-width="1.2" stroke-linejoin="round"/><path d="M312.50 351.30 L312.50 405.00" fill="none" stroke="#0000ff" stroke-width="1.25"/><path d="M339.60 351.30 L339.60 357.30" fill="none" stroke="#0000ff" stroke-width="1.25"/><path d="M339.60 357.30 L339.60 366.54" fill="none" stroke="#000080" stroke-width="1.25"/><path d="M339.60 369.18 L339.60 378.42" fill="none" stroke="#000080" stroke-width="1.25"/><path d="M334.32 366.54 L344.88 366.54" fill="none" stroke="#000080" stroke-width="1.3"/><path d="M334.32 370.83 Q335.64 369.18 339.60 369.18 Q343.56 369.18 344.88 370.83" fill="none" stroke="#000080" stroke-width="1.3"/><path d="M340.97 362.25 L344.17 362.25" fill="none" stroke="#000080" stroke-width="1"/><path d="M342.57 360.65 L342.57 363.85" fill="none" stroke="#000080" stroke-width="1"/><path d="M339.60 378.42 L339.60 388.20" fill="none" stroke="#0000ff" stroke-width="1.25"/><path d="M333.60 388.20 L345.60 388.20 L339.60 394.40 L333.60 388.20" fill="none" stroke="#0000ff" stroke-width="1.2" stroke-linejoin="round"/><circle cx="365.60" cy="369.20" r="10.30" fill="none" stroke="#000080" stroke-width="1.2"/><path d="M365.60 359.00 L365.60 367.40" fill="none" stroke="#000080" stroke-width="1.25"/><path d="M362.30 363.80 L369.00 363.80" fill="none" stroke="#000080" stroke-width="1"/><path d="M363.00 376.20 L368.60 376.20" fill="none" stroke="#000080" stroke-width="1"/><path d="M365.60 379.50 L365.60 388.20" fill="none" stroke="#0000ff" stroke-width="1.25"/><path d="M359.60 388.20 L371.60 388.20 L365.60 394.40 L359.60 388.20" fill="none" stroke="#0000ff" stroke-width="1.2" stroke-linejoin="round"/><circle cx="312.10" cy="420.10" r="15.10" fill="none" stroke="#000080" stroke-width="1.2"/><path d="M312.40 405.00 L312.40 415.10" fill="none" stroke="#000080" stroke-width="1.25"/><path d="M305.70 416.10 L320.10 416.10" fill="none" stroke="#000080" stroke-width="2.4"/><path d="M297.00 420.30 L325.10 420.30" fill="none" stroke="#000080" stroke-width="1" stroke-dasharray="3 1.6"/><path d="M302.50 429.60 Q302.50 425.10 306.50 425.10 H319.10 Q323.10 425.50 324.10 428.60" fill="none" stroke="#000080" stroke-width="2.2"/><path d="M302.50 429.00 L302.50 478.50" fill="none" stroke="#0000ff" stroke-width="1.25"/><path d="M302.50 478.50 L308.00 478.50" fill="none" stroke="#0000ff" stroke-width="1.25"/><path d="M308.00 478.50 L317.24 478.50" fill="none" stroke="#000080" stroke-width="1.25"/><path d="M319.88 478.50 L329.12 478.50" fill="none" stroke="#000080" stroke-width="1.25"/><path d="M317.24 473.22 L317.24 483.78" fill="none" stroke="#000080" stroke-width="1.3"/><path d="M321.53 473.22 Q319.88 474.54 319.88 478.50 Q319.88 482.46 321.53 483.78" fill="none" stroke="#000080" stroke-width="1.3"/><path d="M310.69 475.86 L313.89 475.86" fill="none" stroke="#000080" stroke-width="1"/><path d="M312.29 474.26 L312.29 477.46" fill="none" stroke="#000080" stroke-width="1"/><path d="M329.12 478.50 L440.30 478.50" fill="none" stroke="#0000ff" stroke-width="1.25"/><path d="M302.50 478.50 L302.50 483.00" fill="none" stroke="#0000ff" stroke-width="1.25"/><path d="M302.50 483.00 L302.50 485.64 L297.22 488.28 L307.78 493.56 L297.22 498.84 L307.78 504.12 L302.50 506.76 L302.50 509.40" fill="none" stroke="#000080" stroke-width="1.15" stroke-linejoin="round"/><path d="M302.50 509.40 L302.50 515.30" fill="none" stroke="#0000ff" stroke-width="1.25"/><path d="M296.50 515.30 L308.50 515.30 L302.50 521.50 L296.50 515.30" fill="none" stroke="#0000ff" stroke-width="1.2" stroke-linejoin="round"/><path d="M334.40 478.50 L334.40 483.00" fill="none" stroke="#0000ff" stroke-width="1.25"/><path d="M334.40 483.00 L334.40 485.64 L339.68 488.28 L329.12 493.56 L339.68 498.84 L329.12 504.12 L334.40 506.76 L334.40 509.40" fill="none" stroke="#000080" stroke-width="1.15" stroke-linejoin="round"/><path d="M334.40 509.40 L334.40 515.30" fill="none" stroke="#0000ff" stroke-width="1.25"/><path d="M328.40 515.30 L340.40 515.30 L334.40 521.50 L328.40 515.30" fill="none" stroke="#0000ff" stroke-width="1.2" stroke-linejoin="round"/><path d="M334.40 478.50 L334.40 452.40 L360.30 452.40" fill="none" stroke="#0000ff" stroke-width="1.25"/><path d="M413.80 452.40 L440.60 452.40" fill="none" stroke="#0000ff" stroke-width="1.25"/><rect x="360.3" y="441.5" width="53.5" height="15.9" fill="#ffffc8" stroke="#000080" stroke-width="1.1"/><path d="M121.50 470.20 L121.50 446.30 L132.50 446.30" fill="none" stroke="#0000ff" stroke-width="1.25"/><path d="M132.50 446.30 L141.74 446.30" fill="none" stroke="#000080" stroke-width="1.25"/><path d="M144.38 446.30 L153.62 446.30" fill="none" stroke="#000080" stroke-width="1.25"/><path d="M141.74 441.02 L141.74 451.58" fill="none" stroke="#000080" stroke-width="1.3"/><path d="M144.38 441.02 L144.38 451.58" fill="none" stroke="#000080" stroke-width="1.3"/><path d="M153.62 446.30 L202.00 446.30" fill="none" stroke="#0000ff" stroke-width="1.25"/><circle cx="121.50" cy="480.70" r="10.30" fill="none" stroke="#000080" stroke-width="1.2"/><path d="M120.30 473.60 L123.30 473.60" fill="none" stroke="#000080" stroke-width="1"/><path d="M121.80 472.20 L121.80 475.00" fill="none" stroke="#000080" stroke-width="1"/><path d="M119.80 489.80 L123.60 489.80" fill="none" stroke="#000080" stroke-width="1"/><path d="M115 482.6 C116 486.5 119.5 486 121.5 481.2 C123.5 476 127.5 476 129.3 479.6" fill="none" stroke="#000080" stroke-width="1.1"/><path d="M121.50 491.10 L121.50 515.30" fill="none" stroke="#0000ff" stroke-width="1.25"/><path d="M115.50 515.30 L127.50 515.30 L121.50 521.50 L115.50 515.30" fill="none" stroke="#0000ff" stroke-width="1.2" stroke-linejoin="round"/><path d="M164.40 446.30 L164.40 456.80" fill="none" stroke="#0000ff" stroke-width="1.25"/><path d="M164.40 456.80 L164.40 459.44 L159.12 462.08 L169.68 467.36 L159.12 472.64 L169.68 477.92 L164.40 480.56 L164.40 483.20" fill="none" stroke="#000080" stroke-width="1.15" stroke-linejoin="round"/><path d="M164.40 483.20 L164.40 515.30" fill="none" stroke="#0000ff" stroke-width="1.25"/><path d="M158.40 515.30 L170.40 515.30 L164.40 521.50 L158.40 515.30" fill="none" stroke="#0000ff" stroke-width="1.2" stroke-linejoin="round"/><circle cx="217.20" cy="446.40" r="15.10" fill="none" stroke="#000080" stroke-width="1.2"/><path d="M217.50 431.30 L217.50 441.40" fill="none" stroke="#000080" stroke-width="1.25"/><rect x="210.2" y="441.09999999999997" width="14.4" height="2.4" fill="none" stroke="#000080" stroke-width="1"/><path d="M202.10 446.60 L230.20 446.60" fill="none" stroke="#000080" stroke-width="1" stroke-dasharray="3 1.6"/><path d="M206.50 455.90 Q206.50 450.60 210.50 450.60 H223.20 Q227.70 450.80 228.20 455.40" fill="none" stroke="#000080" stroke-width="1.1"/><path d="M208.00 452.40 H226.20" fill="none" stroke="#000080" stroke-width="1"/><path d="M206.50 455.50 L206.50 473.00" fill="none" stroke="#0000ff" stroke-width="1.25"/><path d="M206.50 468.50 L222.80 468.50 L222.80 478.80" fill="none" stroke="#0000ff" stroke-width="1.25"/><path d="M206.50 473.00 L206.50 475.64 L201.22 478.28 L211.78 483.56 L201.22 488.84 L211.78 494.12 L206.50 496.76 L206.50 499.40" fill="none" stroke="#000080" stroke-width="1.15" stroke-linejoin="round"/><path d="M206.50 499.40 L206.50 515.30" fill="none" stroke="#0000ff" stroke-width="1.25"/><path d="M200.50 515.30 L212.50 515.30 L206.50 521.50 L200.50 515.30" fill="none" stroke="#0000ff" stroke-width="1.2" stroke-linejoin="round"/><path d="M222.80 478.80 L222.80 488.04" fill="none" stroke="#000080" stroke-width="1.25"/><path d="M222.80 490.68 L222.80 499.92" fill="none" stroke="#000080" stroke-width="1.25"/><path d="M217.52 488.04 L228.08 488.04" fill="none" stroke="#000080" stroke-width="1.3"/><path d="M217.52 492.33 Q218.84 490.68 222.80 490.68 Q226.76 490.68 228.08 492.33" fill="none" stroke="#000080" stroke-width="1.3"/><path d="M218.23 483.75 L221.43 483.75" fill="none" stroke="#000080" stroke-width="1"/><path d="M219.83 482.15 L219.83 485.35" fill="none" stroke="#000080" stroke-width="1"/><path d="M222.80 499.92 L222.80 515.30" fill="none" stroke="#0000ff" stroke-width="1.25"/><path d="M216.80 515.30 L228.80 515.30 L222.80 521.50 L216.80 515.30" fill="none" stroke="#0000ff" stroke-width="1.2" stroke-linejoin="round"/><rect x="215.70" y="349.40" width="3.8" height="3.8" fill="#0000ff"/><rect x="310.60" y="349.40" width="3.8" height="3.8" fill="#0000ff"/><rect x="337.70" y="349.40" width="3.8" height="3.8" fill="#0000ff"/><rect x="215.70" y="418.40" width="3.8" height="3.8" fill="#0000ff"/><rect x="257.50" y="418.40" width="3.8" height="3.8" fill="#0000ff"/><rect x="162.50" y="444.40" width="3.8" height="3.8" fill="#0000ff"/><rect x="204.60" y="466.60" width="3.8" height="3.8" fill="#0000ff"/><rect x="300.60" y="476.60" width="3.8" height="3.8" fill="#0000ff"/><rect x="332.50" y="476.60" width="3.8" height="3.8" fill="#0000ff"/><text x="230.6" y="322.3" font-size="7.3" font-weight="bold" fill="#000" stroke="#000" stroke-width="0.25" textLength="108" lengthAdjust="spacingAndGlyphs">.tran 0 {Tstop} {Delay} {Tmax}</text><text x="251" y="333" font-size="7.3" font-weight="bold" fill="#000" stroke="#000" stroke-width="0.25" textLength="62.8" lengthAdjust="spacingAndGlyphs">.inc THD-Meter.inc</text><text x="262" y="343.8" font-size="7.3" font-weight="bold" fill="#000" stroke="#000" stroke-width="0.25" textLength="9" lengthAdjust="spacingAndGlyphs">R9</text><text x="262" y="363" font-size="7.3" font-weight="bold" fill="#000" stroke="#000" stroke-width="0.25" textLength="11" lengthAdjust="spacingAndGlyphs">10k</text><text x="179" y="362" font-size="7.3" font-weight="bold" fill="#000" stroke="#000" stroke-width="0.25" textLength="9.5" lengthAdjust="spacingAndGlyphs">C5</text><text x="175" y="377.8" font-size="7.3" font-weight="bold" fill="#000" stroke="#000" stroke-width="0.25" textLength="12" lengthAdjust="spacingAndGlyphs">22µ</text><text x="224" y="383" font-size="7.3" font-weight="bold" fill="#000" stroke="#000" stroke-width="0.25" textLength="9" lengthAdjust="spacingAndGlyphs">R8</text><text x="224" y="395" font-size="7.3" font-weight="bold" fill="#000" stroke="#000" stroke-width="0.25" textLength="16" lengthAdjust="spacingAndGlyphs">220k</text><text x="307" y="348.8" font-size="7.3" font-weight="bold" fill="#000" stroke="#000" stroke-width="0.25" textLength="9" lengthAdjust="spacingAndGlyphs">Ub</text><text x="327" y="362" font-size="7.3" font-weight="bold" fill="#000" stroke="#000" stroke-width="0.25" textLength="9" lengthAdjust="spacingAndGlyphs">C3</text><text x="319.4" y="377.8" font-size="7.3" font-weight="bold" fill="#000" stroke="#000" stroke-width="0.25" textLength="15.6" lengthAdjust="spacingAndGlyphs">220µ</text><text x="376.5" y="369" font-size="7.3" font-weight="bold" fill="#000" stroke="#000" stroke-width="0.25" textLength="9" lengthAdjust="spacingAndGlyphs">V2</text><text x="376.5" y="378" font-size="7.3" font-weight="bold" fill="#000" stroke="#000" stroke-width="0.25" textLength="11.5" lengthAdjust="spacingAndGlyphs">250</text><text x="314.4" y="393" font-size="7.3" font-weight="bold" fill="#000" stroke="#000" stroke-width="0.25" textLength="8.6" lengthAdjust="spacingAndGlyphs">U1</text><text x="314.4" y="402" font-size="7.3" font-weight="bold" fill="#000" stroke="#000" stroke-width="0.25" textLength="43" lengthAdjust="spacingAndGlyphs">TRIODE_6V6</text><text x="206" y="421" font-size="7.3" font-weight="bold" fill="#000" stroke="#000" stroke-width="0.25" textLength="9" lengthAdjust="spacingAndGlyphs">U2</text><text x="193" y="429" font-size="7.3" font-weight="bold" fill="#000" stroke="#000" stroke-width="0.25" textLength="22" lengthAdjust="spacingAndGlyphs">ECC83</text><text x="233" y="413" font-size="7.3" font-weight="bold" fill="#000" stroke="#000" stroke-width="0.25" textLength="9" lengthAdjust="spacingAndGlyphs">C1</text><text x="230" y="432" font-size="7.3" font-weight="bold" fill="#000" stroke="#000" stroke-width="0.25" textLength="16" lengthAdjust="spacingAndGlyphs">100n</text><text x="273" y="413" font-size="7.3" font-weight="bold" fill="#000" stroke="#000" stroke-width="0.25" textLength="9.5" lengthAdjust="spacingAndGlyphs">R2</text><text x="274" y="432" font-size="7.3" font-weight="bold" fill="#000" stroke="#000" stroke-width="0.25" textLength="8" lengthAdjust="spacingAndGlyphs">1k</text><text x="244" y="447" font-size="7.3" font-weight="bold" fill="#000" stroke="#000" stroke-width="0.25" textLength="9" lengthAdjust="spacingAndGlyphs">R1</text><text x="237" y="459" font-size="7.3" font-weight="bold" fill="#000" stroke="#000" stroke-width="0.25" textLength="16" lengthAdjust="spacingAndGlyphs">680k</text><text x="138" y="439" font-size="7.3" font-weight="bold" fill="#000" stroke="#000" stroke-width="0.25" textLength="9" lengthAdjust="spacingAndGlyphs">C4</text><text x="135.4" y="459" font-size="7.3" font-weight="bold" fill="#000" stroke="#000" stroke-width="0.25" textLength="15.6" lengthAdjust="spacingAndGlyphs">100n</text><text x="148.5" y="468" font-size="7.3" font-weight="bold" fill="#000" stroke="#000" stroke-width="0.25" textLength="8.8" lengthAdjust="spacingAndGlyphs">R5</text><text x="139.4" y="479.4" font-size="7.3" font-weight="bold" fill="#000" stroke="#000" stroke-width="0.25" textLength="17.8" lengthAdjust="spacingAndGlyphs">1Meg</text><text x="100.6" y="476" font-size="7.3" font-weight="bold" fill="#000" stroke="#000" stroke-width="0.25" textLength="8.4" lengthAdjust="spacingAndGlyphs">V1</text><text x="39" y="483.6" font-size="7.3" font-weight="bold" fill="#000" stroke="#000" stroke-width="0.25" textLength="71" lengthAdjust="spacingAndGlyphs">SINE(0 0.125 {Freq})</text><text x="37.5" y="494.8" font-size="7.3" font-weight="bold" fill="#000" stroke="#000" stroke-width="0.25" textLength="58.8" lengthAdjust="spacingAndGlyphs">.PARAM Freq=1k</text><text x="191" y="484" font-size="7.3" font-weight="bold" fill="#000" stroke="#000" stroke-width="0.25" textLength="8.8" lengthAdjust="spacingAndGlyphs">R7</text><text x="188.5" y="496" font-size="7.3" font-weight="bold" fill="#000" stroke="#000" stroke-width="0.25" textLength="11.5" lengthAdjust="spacingAndGlyphs">2k2</text><text x="225.4" y="484" font-size="7.3" font-weight="bold" fill="#000" stroke="#000" stroke-width="0.25" textLength="9" lengthAdjust="spacingAndGlyphs">C6</text><text x="225.6" y="499.8" font-size="7.3" font-weight="bold" fill="#000" stroke="#000" stroke-width="0.25" textLength="15.6" lengthAdjust="spacingAndGlyphs">220µ</text><text x="313.5" y="471" font-size="7.3" font-weight="bold" fill="#000" stroke="#000" stroke-width="0.25" textLength="9" lengthAdjust="spacingAndGlyphs">C2</text><text x="309.4" y="491" font-size="7.3" font-weight="bold" fill="#000" stroke="#000" stroke-width="0.25" textLength="15.6" lengthAdjust="spacingAndGlyphs">220µ</text><text x="286.3" y="495" font-size="7.3" font-weight="bold" fill="#000" stroke="#000" stroke-width="0.25" textLength="9" lengthAdjust="spacingAndGlyphs">R4</text><text x="287.8" y="506" font-size="7.3" font-weight="bold" fill="#000" stroke="#000" stroke-width="0.25" textLength="7.3" lengthAdjust="spacingAndGlyphs">1k</text><text x="340.6" y="495" font-size="7.3" font-weight="bold" fill="#000" stroke="#000" stroke-width="0.25" textLength="8.2" lengthAdjust="spacingAndGlyphs">RL</text><text x="340.6" y="503.6" font-size="7.3" font-weight="bold" fill="#000" stroke="#000" stroke-width="0.25" textLength="15.9" lengthAdjust="spacingAndGlyphs">{RL}</text><text x="377.3" y="439" font-size="7.3" font-weight="bold" fill="#000" stroke="#000" stroke-width="0.25" textLength="8.7" lengthAdjust="spacingAndGlyphs">U3</text><text x="368.8" y="448" font-size="7.3" font-weight="bold" fill="#000" stroke="#000" stroke-width="0.25" textLength="35.9" lengthAdjust="spacingAndGlyphs">THD-Meter</text><text x="361.5" y="455.2" font-size="7.3" font-weight="bold" fill="#000" stroke="#000" stroke-width="0.25" textLength="19.1" lengthAdjust="spacingAndGlyphs">Probe</text><text x="399" y="455" font-size="7.3" font-weight="bold" fill="#000" stroke="#000" stroke-width="0.25" textLength="13" lengthAdjust="spacingAndGlyphs">THD</text><text x="441" y="455" font-size="7.3" font-weight="bold" fill="#000" stroke="#000" stroke-width="0.25" textLength="12.8" lengthAdjust="spacingAndGlyphs">THD</text><text x="349.4" y="468" font-size="7.3" font-weight="bold" fill="#000" stroke="#000" stroke-width="0.25" textLength="65.6" lengthAdjust="spacingAndGlyphs">.four {Freq} V(Out)</text><text x="440.6" y="481" font-size="7.3" font-weight="bold" fill="#000" stroke="#000" stroke-width="0.25" textLength="11.4" lengthAdjust="spacingAndGlyphs">Out</text><text x="363.6" y="500" font-size="7.3" font-weight="bold" fill="#000" stroke="#000" stroke-width="0.25" textLength="103.4" lengthAdjust="spacingAndGlyphs">.STEP OCT PARAM RL 30 600 3</text><text x="344.4" y="510" font-size="7.3" font-weight="bold" fill="#000" stroke="#000" stroke-width="0.25" textLength="76.6" lengthAdjust="spacingAndGlyphs">.MEAS Irms RMS I(RL)</text><text x="344.4" y="518" font-size="7.3" font-weight="bold" fill="#000" stroke="#000" stroke-width="0.25" textLength="122.6" lengthAdjust="spacingAndGlyphs">.MEAS Prms PARAM Irms*Irms*RL</text><text transform="translate(310,403.8) rotate(-90)" font-size="7.3" font-weight="bold" fill="#000" stroke="#000" stroke-width="0.25" textLength="9.4" lengthAdjust="spacingAndGlyphs">Ua</text><text transform="translate(300,446) rotate(-90)" font-size="7.3" font-weight="bold" fill="#000" stroke="#000" stroke-width="0.25" textLength="9" lengthAdjust="spacingAndGlyphs">Uk</text></svg><svg width="1024" height="744" style="z-index:20"><path d="M649.5 140.5 L649.5 307.5" stroke="#888888" stroke-width="1" fill="none" stroke-dasharray="3 3"/><path d="M728.5 140.5 L728.5 307.5" stroke="#888888" stroke-width="1" fill="none" stroke-dasharray="3 3"/><path d="M806.5 140.5 L806.5 307.5" stroke="#888888" stroke-width="1" fill="none" stroke-dasharray="3 3"/><path d="M885.5 140.5 L885.5 307.5" stroke="#888888" stroke-width="1" fill="none" stroke-dasharray="3 3"/><path d="M570.5 223.5 L964.5 223.5" stroke="#888888" stroke-width="1" fill="none" stroke-dasharray="3 3"/><path d="M571.5 210v3M572.5 207v3M573.5 204v3M574.5 201v3M575.5 198v3M576.5 195v3M577.5 192v3M578.5 189v3M579.5 186v3M580.5 183v3M581.5 181v2M582.5 178v3M583.5 176v2M584.5 173v3M585.5 171v2M586.5 168v3M587.5 166v2M588.5 164v2M589.5 162v2M590.5 160v2M591.5 158v2M592.5 156v2M593.5 155v1M594.5 153v2M595.5 152v1M596.5 151v1M597.5 150v1M598.5 149v1M599.5 148v1M600.5 147v1M601.5 147v1M602.5 146v1M603.5 146v1M604.5 146v1M605.5 146v1M606.5 146v1M607.5 147v1M608.5 147v1M609.5 148v1M610.5 149v1M611.5 150v1M612.5 151v2M613.5 153v1M614.5 154v2M615.5 156v1M616.5 157v2M617.5 159v2M618.5 161v2M619.5 163v2M620.5 165v3M621.5 168v2M622.5 170v3M623.5 173v2M624.5 175v3M625.5 178v2M626.5 180v3M627.5 183v3M628.5 186v3M629.5 189v3M630.5 192v2M631.5 194v3M632.5 197v3M633.5 200v3M634.5 203v3M635.5 206v3M636.5 209v3M637.5 212v3M638.5 215v3M639.5 218v4M640.5 222v3M641.5 225v3M642.5 228v4M643.5 232v4M644.5 236v3M645.5 239v4M646.5 243v3M647.5 246v4M648.5 250v4M649.5 254v3M650.5 257v3M651.5 260v4M652.5 264v3M653.5 267v3M654.5 270v3M655.5 273v3M656.5 276v3M657.5 279v2M658.5 281v3M659.5 284v2M660.5 286v2M661.5 288v2M662.5 290v1M663.5 291v2M664.5 293v1M665.5 294v1M666.5 295v1M667.5 296v1M668.5 296v1M669.5 297v1M670.5 297v1M671.5 296v1M672.5 296v1M673.5 295v1M674.5 294v1M675.5 293v1M676.5 291v2M677.5 289v2M678.5 287v2M679.5 285v2M680.5 282v3M681.5 280v2M682.5 277v3M683.5 274v3M684.5 271v3M685.5 268v3M686.5 265v3M687.5 262v3M688.5 258v4M689.5 255v3M690.5 251v4M691.5 248v3M692.5 244v4M693.5 241v3M694.5 237v4M695.5 233v4M696.5 230v3M697.5 226v4M698.5 223v3M699.5 220v3M700.5 217v3M701.5 214v3M702.5 211v3M703.5 208v3M704.5 205v3M705.5 202v3M706.5 199v3M707.5 196v3M708.5 193v3M709.5 190v3M710.5 187v3M711.5 184v3M712.5 182v2M713.5 179v3M714.5 176v3M715.5 174v2M716.5 171v3M717.5 169v2M718.5 167v2M719.5 164v3M720.5 162v2M721.5 160v2M722.5 159v1M723.5 157v2M724.5 155v2M725.5 154v1M726.5 152v2M727.5 151v1M728.5 150v1M729.5 149v1M730.5 148v1M731.5 147v1M732.5 147v1M733.5 146v1M734.5 146v1M735.5 146v1M736.5 146v1M737.5 146v1M738.5 147v1M739.5 147v1M740.5 148v1M741.5 149v1M742.5 150v1M743.5 151v1M744.5 152v1M745.5 153v2M746.5 155v2M747.5 157v2M748.5 159v2M749.5 161v2M750.5 163v2M751.5 165v2M752.5 167v2M753.5 169v3M754.5 172v2M755.5 174v3M756.5 177v2M757.5 179v3M758.5 182v3M759.5 185v3M760.5 188v3M761.5 191v2M762.5 193v3M763.5 196v3M764.5 199v3M765.5 202v3M766.5 205v3M767.5 208v3M768.5 211v3M769.5 214v3M770.5 217v4M771.5 221v3M772.5 224v3M773.5 227v4M774.5 231v3M775.5 234v4M776.5 238v4M777.5 242v3M778.5 245v4M779.5 249v3M780.5 252v4M781.5 256v3M782.5 259v4M783.5 263v3M784.5 266v3M785.5 269v3M786.5 272v3M787.5 275v3M788.5 278v2M789.5 280v3M790.5 283v2M791.5 285v2M792.5 287v2M793.5 289v2M794.5 291v1M795.5 292v2M796.5 294v1M797.5 295v1M798.5 296v1M799.5 296v1M800.5 297v1M801.5 297v1M802.5 297v1M803.5 296v1M804.5 296v1M805.5 295v1M806.5 293v2M807.5 292v1M808.5 290v2M809.5 288v2M810.5 286v2M811.5 283v3M812.5 281v2M813.5 278v3M814.5 275v3M815.5 272v3M816.5 269v3M817.5 266v3M818.5 263v3M819.5 259v4M820.5 256v3M821.5 253v3M822.5 249v4M823.5 245v4M824.5 242v3M825.5 238v4M826.5 235v3M827.5 231v4M828.5 227v4M829.5 224v3M830.5 221v3M831.5 218v3M832.5 215v3M833.5 212v3M834.5 209v3M835.5 206v3M836.5 203v3M837.5 200v3M838.5 197v3M839.5 194v3M840.5 191v3M841.5 188v3M842.5 185v3M843.5 183v2M844.5 180v3M845.5 177v3M846.5 175v2M847.5 172v3M848.5 170v2M849.5 167v3M850.5 165v2M851.5 163v2M852.5 161v2M853.5 159v2M854.5 157v2M855.5 156v1M856.5 154v2M857.5 153v1M858.5 151v2M859.5 150v1M860.5 149v1M861.5 148v1M862.5 148v1M863.5 147v1M864.5 146v1M865.5 146v1M866.5 146v1M867.5 146v1M868.5 146v1M869.5 146v1M870.5 147v1M871.5 148v1M872.5 148v1M873.5 149v1M874.5 150v2M875.5 152v1M876.5 153v2M877.5 155v1M878.5 156v2M879.5 158v2M880.5 160v2M881.5 162v2M882.5 164v2M883.5 166v3M884.5 169v2M885.5 171v2M886.5 173v3M887.5 176v3M888.5 179v2M889.5 181v3M890.5 184v3M891.5 187v3M892.5 190v3M893.5 193v2M894.5 195v3M895.5 198v3M896.5 201v3M897.5 204v3M898.5 207v3M899.5 210v3M900.5 213v3M901.5 216v4M902.5 220v3M903.5 223v3M904.5 226v4M905.5 230v3M906.5 233v4M907.5 237v4M908.5 241v3M909.5 244v4M910.5 248v3M911.5 251v4M912.5 255v3M913.5 258v3M914.5 261v4M915.5 265v3M916.5 268v3M917.5 271v3M918.5 274v3M919.5 277v2M920.5 279v3M921.5 282v2M922.5 284v3M923.5 287v2M924.5 289v1M925.5 290v2M926.5 292v1M927.5 293v2M928.5 295v1M929.5 295v1M930.5 296v1M931.5 297v1M932.5 297v1M933.5 297v1M934.5 296v1M935.5 296v1M936.5 295v1M937.5 294v1M938.5 292v2M939.5 290v2M940.5 288v2M941.5 286v2M942.5 284v2M943.5 282v2M944.5 279v3M945.5 276v3M946.5 273v3M947.5 270v3M948.5 267v3M949.5 264v3M950.5 261v3M951.5 257v4M952.5 254v3M953.5 250v4M954.5 247v3M955.5 243v4M956.5 239v4M957.5 236v3M958.5 232v4M959.5 229v3M960.5 225v4M961.5 222v3M962.5 219v3M963.5 216v3M964.5 213v3M571.5 210v3M572.5 207v3M573.5 204v3M574.5 201v3M575.5 199v2M576.5 196v3M577.5 193v3M578.5 191v2M579.5 188v3M580.5 186v2M581.5 183v3M582.5 181v2M583.5 178v3M584.5 176v2M585.5 174v2M586.5 172v2M587.5 170v2M588.5 168v2M589.5 166v2M590.5 164v2M591.5 162v2M592.5 161v1M593.5 160v1M594.5 158v2M595.5 157v1M596.5 156v1M597.5 155v1M598.5 154v1M599.5 153v1M600.5 153v1M601.5 152v1M602.5 152v1M603.5 152v1M604.5 152v1M605.5 152v1M606.5 152v1M607.5 153v1M608.5 153v1M609.5 154v1M610.5 155v1M611.5 156v1M612.5 157v1M613.5 158v1M614.5 159v2M615.5 161v1M616.5 162v2M617.5 164v2M618.5 166v2M619.5 168v2M620.5 170v2M621.5 172v2M622.5 174v2M623.5 176v3M624.5 179v2M625.5 181v2M626.5 183v3M627.5 186v2M628.5 188v3M629.5 191v3M630.5 194v2M631.5 196v3M632.5 199v3M633.5 202v3M634.5 205v2M635.5 207v3M636.5 210v3M637.5 213v3M638.5 216v3M639.5 219v3M640.5 222v3M641.5 225v3M642.5 228v4M643.5 232v3M644.5 235v4M645.5 239v3M646.5 242v3M647.5 245v4M648.5 249v3M649.5 252v3M650.5 255v3M651.5 258v3M652.5 261v3M653.5 264v3M654.5 267v3M655.5 270v3M656.5 273v2M657.5 275v3M658.5 278v2M659.5 280v2M660.5 282v2M661.5 284v2M662.5 286v1M663.5 287v1M664.5 288v2M665.5 290v1M666.5 290v1M667.5 291v1M668.5 292v1M669.5 292v1M670.5 292v1M671.5 291v1M672.5 291v1M673.5 290v1M674.5 289v1M675.5 288v1M676.5 286v2M677.5 285v1M678.5 283v2M679.5 281v2M680.5 278v3M681.5 276v2M682.5 273v3M683.5 271v2M684.5 268v3M685.5 265v3M686.5 262v3M687.5 259v3M688.5 256v3M689.5 252v4M690.5 249v3M691.5 246v3M692.5 242v4M693.5 239v3M694.5 235v4M695.5 232v3M696.5 229v3M697.5 225v4M698.5 222v3M699.5 219v3M700.5 216v3M701.5 214v2M702.5 211v3M703.5 208v3M704.5 205v3M705.5 202v3M706.5 200v2M707.5 197v3M708.5 194v3M709.5 192v2M710.5 189v3M711.5 186v3M712.5 184v2M713.5 181v3M714.5 179v2M715.5 177v2M716.5 175v2M717.5 172v3M718.5 170v2M719.5 168v2M720.5 166v2M721.5 165v1M722.5 163v2M723.5 161v2M724.5 160v1M725.5 159v1M726.5 157v2M727.5 156v1M728.5 155v1M729.5 154v1M730.5 154v1M731.5 153v1M732.5 152v1M733.5 152v1M734.5 152v1M735.5 152v1M736.5 152v1M737.5 152v1M738.5 152v1M739.5 153v1M740.5 154v1M741.5 154v1M742.5 155v1M743.5 156v1M744.5 157v2M745.5 159v1M746.5 160v2M747.5 162v1M748.5 163v2M749.5 165v2M750.5 167v2M751.5 169v2M752.5 171v2M753.5 173v2M754.5 175v3M755.5 178v2M756.5 180v3M757.5 183v2M758.5 185v3M759.5 188v2M760.5 190v3M761.5 193v3M762.5 196v2M763.5 198v3M764.5 201v3M765.5 204v3M766.5 207v2M767.5 209v3M768.5 212v3M769.5 215v3M770.5 218v3M771.5 221v3M772.5 224v3M773.5 227v4M774.5 231v3M775.5 234v3M776.5 237v4M777.5 241v3M778.5 244v4M779.5 248v3M780.5 251v3M781.5 254v3M782.5 257v3M783.5 260v3M784.5 263v3M785.5 266v3M786.5 269v3M787.5 272v2M788.5 274v3M789.5 277v2M790.5 279v2M791.5 281v2M792.5 283v2M793.5 285v2M794.5 287v1M795.5 288v1M796.5 289v1M797.5 290v1M798.5 291v1M799.5 291v1M800.5 292v1M801.5 292v1M802.5 292v1M803.5 291v1M804.5 291v1M805.5 290v1M806.5 288v2M807.5 287v1M808.5 285v2M809.5 283v2M810.5 281v2M811.5 279v2M812.5 277v2M813.5 274v3M814.5 271v3M815.5 269v2M816.5 266v3M817.5 263v3M818.5 260v3M819.5 257v3M820.5 253v4M821.5 250v3M822.5 247v3M823.5 243v4M824.5 240v3M825.5 237v3M826.5 233v4M827.5 230v3M828.5 226v4M829.5 223v3M830.5 220v3M831.5 217v3M832.5 215v2M833.5 212v3M834.5 209v3M835.5 206v3M836.5 203v3M837.5 201v2M838.5 198v3M839.5 195v3M840.5 192v3M841.5 190v2M842.5 187v3M843.5 185v2M844.5 182v3M845.5 180v2M846.5 178v2M847.5 175v3M848.5 173v2M849.5 171v2M850.5 169v2M851.5 167v2M852.5 165v2M853.5 164v1M854.5 162v2M855.5 160v2M856.5 159v1M857.5 158v1M858.5 157v1M859.5 156v1M860.5 155v1M861.5 154v1M862.5 153v1M863.5 153v1M864.5 152v1M865.5 152v1M866.5 152v1M867.5 152v1M868.5 152v1M869.5 152v1M870.5 153v1M871.5 153v1M872.5 154v1M873.5 155v1M874.5 156v1M875.5 157v1M876.5 158v2M877.5 160v1M878.5 161v2M879.5 163v2M880.5 165v1M881.5 166v2M882.5 168v2M883.5 170v3M884.5 173v2M885.5 175v2M886.5 177v2M887.5 179v3M888.5 182v2M889.5 184v3M890.5 187v2M891.5 189v3M892.5 192v3M893.5 195v2M894.5 197v3M895.5 200v3M896.5 203v3M897.5 206v2M898.5 208v3M899.5 211v3M900.5 214v3M901.5 217v3M902.5 220v3M903.5 223v3M904.5 226v3M905.5 229v4M906.5 233v3M907.5 236v4M908.5 240v3M909.5 243v3M910.5 246v4M911.5 250v3M912.5 253v3M913.5 256v3M914.5 259v3M915.5 262v3M916.5 265v3M917.5 268v3M918.5 271v3M919.5 274v2M920.5 276v2M921.5 278v3M922.5 281v2M923.5 283v1M924.5 284v2M925.5 286v2M926.5 288v1M927.5 289v1M928.5 290v1M929.5 291v1M930.5 291v1M931.5 292v1M932.5 292v1M933.5 292v1M934.5 291v1M935.5 291v1M936.5 290v1M937.5 289v1M938.5 287v2M939.5 286v1M940.5 284v2M941.5 282v2M942.5 280v2M943.5 277v3M944.5 275v2M945.5 272v3M946.5 270v2M947.5 267v3M948.5 264v3M949.5 261v3M950.5 258v3M951.5 255v3M952.5 251v4M953.5 248v3M954.5 245v3M955.5 241v4M956.5 238v3M957.5 234v4M958.5 231v3M959.5 227v4M960.5 224v3M961.5 221v3M962.5 218v3M963.5 215v3M964.5 213v2M571.5 210v3M572.5 208v2M573.5 205v3M574.5 203v2M575.5 200v3M576.5 198v2M577.5 195v3M578.5 193v2M579.5 190v3M580.5 188v2M581.5 186v2M582.5 184v2M583.5 182v2M584.5 179v3M585.5 177v2M586.5 176v1M587.5 174v2M588.5 172v2M589.5 170v2M590.5 169v1M591.5 167v2M592.5 166v1M593.5 165v1M594.5 164v1M595.5 163v1M596.5 162v1M597.5 161v1M598.5 160v1M599.5 159v1M600.5 159v1M601.5 158v1M602.5 158v1M603.5 158v1M604.5 158v1M605.5 158v1M606.5 158v1M607.5 159v1M608.5 159v1M609.5 160v1M610.5 161v1M611.5 161v1M612.5 162v2M613.5 164v1M614.5 165v1M615.5 166v2M616.5 168v1M617.5 169v2M618.5 171v1M619.5 172v2M620.5 174v2M621.5 176v2M622.5 178v2M623.5 180v2M624.5 182v2M625.5 184v3M626.5 187v2M627.5 189v2M628.5 191v3M629.5 194v2M630.5 196v3M631.5 199v2M632.5 201v3M633.5 204v2M634.5 206v3M635.5 209v2M636.5 211v3M637.5 214v3M638.5 217v2M639.5 219v3M640.5 222v3M641.5 225v3M642.5 228v3M643.5 231v4M644.5 235v3M645.5 238v3M646.5 241v3M647.5 244v3M648.5 247v3M649.5 250v3M650.5 253v3M651.5 256v3M652.5 259v3M653.5 262v3M654.5 265v2M655.5 267v3M656.5 270v2M657.5 272v2M658.5 274v2M659.5 276v2M660.5 278v2M661.5 280v1M662.5 281v2M663.5 283v1M664.5 284v1M665.5 285v1M666.5 286v1M667.5 286v1M668.5 287v1M669.5 287v1M670.5 287v1M671.5 286v1M672.5 286v1M673.5 285v1M674.5 284v1M675.5 283v1M676.5 282v1M677.5 280v2M678.5 278v2M679.5 276v2M680.5 274v2M681.5 272v2M682.5 270v2M683.5 267v3M684.5 264v3M685.5 262v2M686.5 259v3M687.5 256v3M688.5 253v3M689.5 250v3M690.5 247v3M691.5 244v3M692.5 240v4M693.5 237v3M694.5 234v3M695.5 231v3M696.5 227v4M697.5 224v3M698.5 222v2M699.5 219v3M700.5 216v3M701.5 214v2M702.5 211v3M703.5 209v2M704.5 206v3M705.5 203v3M706.5 201v2M707.5 198v3M708.5 196v2M709.5 194v2M710.5 191v3M711.5 189v2M712.5 187v2M713.5 184v3M714.5 182v2M715.5 180v2M716.5 178v2M717.5 176v2M718.5 174v2M719.5 173v1M720.5 171v2M721.5 169v2M722.5 168v1M723.5 166v2M724.5 165v1M725.5 164v1M726.5 163v1M727.5 162v1M728.5 161v1M729.5 160v1M730.5 160v1M731.5 159v1M732.5 159v1M733.5 158v1M734.5 158v1M735.5 158v1M736.5 158v1M737.5 158v1M738.5 159v1M739.5 159v1M740.5 160v1M741.5 160v1M742.5 161v1M743.5 162v1M744.5 163v1M745.5 164v2M746.5 166v1M747.5 167v2M748.5 169v1M749.5 170v2M750.5 172v2M751.5 174v1M752.5 175v2M753.5 177v2M754.5 179v3M755.5 182v2M756.5 184v2M757.5 186v2M758.5 188v2M759.5 190v3M760.5 193v2M761.5 195v3M762.5 198v2M763.5 200v3M764.5 203v2M765.5 205v3M766.5 208v2M767.5 210v3M768.5 213v3M769.5 216v2M770.5 218v3M771.5 221v3M772.5 224v3M773.5 227v3M774.5 230v3M775.5 233v4M776.5 237v3M777.5 240v3M778.5 243v3M779.5 246v3M780.5 249v3M781.5 252v3M782.5 255v3M783.5 258v3M784.5 261v3M785.5 264v2M786.5 266v3M787.5 269v2M788.5 271v2M789.5 273v3M790.5 276v1M791.5 277v2M792.5 279v2M793.5 281v1M794.5 282v2M795.5 284v1M796.5 285v1M797.5 285v1M798.5 286v1M799.5 286v1M800.5 287v1M801.5 287v1M802.5 287v1M803.5 286v1M804.5 286v1M805.5 285v1M806.5 284v1M807.5 282v2M808.5 281v1M809.5 279v2M810.5 277v2M811.5 275v2M812.5 273v2M813.5 270v3M814.5 268v2M815.5 265v3M816.5 263v2M817.5 260v3M818.5 257v3M819.5 254v3M820.5 251v3M821.5 248v3M822.5 245v3M823.5 242v3M824.5 238v4M825.5 235v3M826.5 232v3M827.5 228v4M828.5 225v3M829.5 223v2M830.5 220v3M831.5 217v3M832.5 215v2M833.5 212v3M834.5 209v3M835.5 207v2M836.5 204v3M837.5 202v2M838.5 199v3M839.5 197v2M840.5 194v3M841.5 192v2M842.5 190v2M843.5 187v3M844.5 185v2M845.5 183v2M846.5 181v2M847.5 179v2M848.5 177v2M849.5 175v2M850.5 173v2M851.5 171v2M852.5 170v1M853.5 168v2M854.5 167v1M855.5 166v1M856.5 164v2M857.5 163v1M858.5 162v1M859.5 161v1M860.5 161v1M861.5 160v1M862.5 159v1M863.5 159v1M864.5 158v1M865.5 158v1M866.5 158v1M867.5 158v1M868.5 158v1M869.5 158v1M870.5 159v1M871.5 159v1M872.5 160v1M873.5 161v1M874.5 162v1M875.5 163v1M876.5 164v1M877.5 165v2M878.5 167v1M879.5 168v2M880.5 170v1M881.5 171v2M882.5 173v2M883.5 175v2M884.5 177v2M885.5 179v2M886.5 181v2M887.5 183v2M888.5 185v2M889.5 187v3M890.5 190v2M891.5 192v2M892.5 194v3M893.5 197v2M894.5 199v3M895.5 202v2M896.5 204v3M897.5 207v3M898.5 210v2M899.5 212v3M900.5 215v2M901.5 217v3M902.5 220v3M903.5 223v3M904.5 226v3M905.5 229v3M906.5 232v4M907.5 236v3M908.5 239v3M909.5 242v3M910.5 245v3M911.5 248v3M912.5 251v3M913.5 254v3M914.5 257v3M915.5 260v3M916.5 263v3M917.5 266v2M918.5 268v2M919.5 270v3M920.5 273v2M921.5 275v2M922.5 277v2M923.5 279v1M924.5 280v2M925.5 282v1M926.5 283v1M927.5 284v1M928.5 285v1M929.5 286v1M930.5 286v1M931.5 287v1M932.5 287v1M933.5 287v1M934.5 286v1M935.5 286v1M936.5 285v1M937.5 284v1M938.5 283v1M939.5 281v2M940.5 279v2M941.5 278v1M942.5 276v2M943.5 273v3M944.5 271v2M945.5 269v2M946.5 266v3M947.5 263v3M948.5 261v2M949.5 258v3M950.5 255v3M951.5 252v3M952.5 249v3M953.5 246v3M954.5 243v3M955.5 239v4M956.5 236v3M957.5 233v3M958.5 230v3M959.5 226v4M960.5 223v3M961.5 221v2M962.5 218v3M963.5 215v3M964.5 213v2M571.5 211v2M572.5 209v2M573.5 206v3M574.5 204v2M575.5 202v2M576.5 200v2M577.5 197v3M578.5 195v2M579.5 193v2M580.5 191v2M581.5 189v2M582.5 187v2M583.5 185v2M584.5 184v1M585.5 182v2M586.5 180v2M587.5 179v1M588.5 177v2M589.5 176v1M590.5 174v2M591.5 173v1M592.5 172v1M593.5 171v1M594.5 170v1M595.5 169v1M596.5 168v1M597.5 167v1M598.5 167v1M599.5 166v1M600.5 166v1M601.5 165v1M602.5 165v1M603.5 165v1M604.5 165v1M605.5 165v1M606.5 165v1M607.5 166v1M608.5 166v1M609.5 167v1M610.5 167v1M611.5 168v1M612.5 169v1M613.5 170v1M614.5 171v1M615.5 172v1M616.5 173v2M617.5 175v1M618.5 176v2M619.5 178v1M620.5 179v2M621.5 181v2M622.5 183v1M623.5 184v2M624.5 186v2M625.5 188v2M626.5 190v2M627.5 192v2M628.5 194v3M629.5 197v2M630.5 199v2M631.5 201v2M632.5 203v3M633.5 206v2M634.5 208v2M635.5 210v3M636.5 213v2M637.5 215v2M638.5 217v3M639.5 220v2M640.5 222v3M641.5 225v3M642.5 228v3M643.5 231v3M644.5 234v3M645.5 237v3M646.5 240v3M647.5 243v3M648.5 246v3M649.5 249v2M650.5 251v3M651.5 254v3M652.5 257v2M653.5 259v3M654.5 262v2M655.5 264v2M656.5 266v3M657.5 269v2M658.5 271v1M659.5 272v2M660.5 274v2M661.5 276v1M662.5 277v1M663.5 278v1M664.5 279v1M665.5 280v1M666.5 281v1M667.5 281v1M668.5 282v1M669.5 282v1M670.5 282v1M671.5 281v1M672.5 281v1M673.5 280v1M674.5 280v1M675.5 278v2M676.5 277v1M677.5 276v1M678.5 274v2M679.5 272v2M680.5 270v2M681.5 268v2M682.5 266v2M683.5 263v3M684.5 261v2M685.5 259v2M686.5 256v3M687.5 253v3M688.5 250v3M689.5 248v2M690.5 245v3M691.5 242v3M692.5 239v3M693.5 236v3M694.5 233v3M695.5 229v4M696.5 226v3M697.5 224v2M698.5 221v3M699.5 219v2M700.5 216v3M701.5 214v2M702.5 212v2M703.5 209v3M704.5 207v2M705.5 205v2M706.5 203v2M707.5 200v3M708.5 198v2M709.5 196v2M710.5 194v2M711.5 192v2M712.5 190v2M713.5 188v2M714.5 186v2M715.5 184v2M716.5 182v2M717.5 181v1M718.5 179v2M719.5 178v1M720.5 176v2M721.5 175v1M722.5 173v2M723.5 172v1M724.5 171v1M725.5 170v1M726.5 169v1M727.5 168v1M728.5 167v1M729.5 167v1M730.5 166v1M731.5 166v1M732.5 165v1M733.5 165v1M734.5 165v1M735.5 165v1M736.5 165v1M737.5 165v1M738.5 165v1M739.5 166v1M740.5 166v1M741.5 167v1M742.5 168v1M743.5 169v1M744.5 170v1M745.5 171v1M746.5 172v1M747.5 173v1M748.5 174v2M749.5 176v1M750.5 177v2M751.5 179v1M752.5 180v2M753.5 182v2M754.5 184v2M755.5 186v2M756.5 188v2M757.5 190v2M758.5 192v2M759.5 194v2M760.5 196v2M761.5 198v2M762.5 200v2M763.5 202v3M764.5 205v2M765.5 207v2M766.5 209v3M767.5 212v2M768.5 214v2M769.5 216v3M770.5 219v2M771.5 221v3M772.5 224v3M773.5 227v3M774.5 230v3M775.5 233v3M776.5 236v3M777.5 239v3M778.5 242v3M779.5 245v3M780.5 248v3M781.5 251v2M782.5 253v3M783.5 256v3M784.5 259v2M785.5 261v2M786.5 263v3M787.5 266v2M788.5 268v2M789.5 270v2M790.5 272v2M791.5 274v1M792.5 275v2M793.5 277v1M794.5 278v1M795.5 279v1M796.5 280v1M797.5 281v1M798.5 281v1M799.5 282v1M800.5 282v1M801.5 282v1M802.5 282v1M803.5 281v1M804.5 281v1M805.5 280v1M806.5 279v1M807.5 277v2M808.5 276v1M809.5 274v2M810.5 273v1M811.5 271v2M812.5 269v2M813.5 267v2M814.5 264v3M815.5 262v2M816.5 259v3M817.5 257v2M818.5 254v3M819.5 251v3M820.5 248v3M821.5 246v2M822.5 243v3M823.5 240v3M824.5 237v3M825.5 234v3M826.5 230v4M827.5 227v3M828.5 224v3M829.5 222v2M830.5 220v2M831.5 217v3M832.5 215v2M833.5 213v2M834.5 210v3M835.5 208v2M836.5 206v2M837.5 203v3M838.5 201v2M839.5 199v2M840.5 197v2M841.5 195v2M842.5 192v3M843.5 190v2M844.5 188v2M845.5 187v1M846.5 185v2M847.5 183v2M848.5 181v2M849.5 180v1M850.5 178v2M851.5 177v1M852.5 175v2M853.5 174v1M854.5 173v1M855.5 171v2M856.5 170v1M857.5 169v1M858.5 169v1M859.5 168v1M860.5 167v1M861.5 166v1M862.5 166v1M863.5 165v1M864.5 165v1M865.5 165v1M866.5 165v1M867.5 165v1M868.5 165v1M869.5 165v1M870.5 166v1M871.5 166v1M872.5 167v1M873.5 168v1M874.5 168v1M875.5 169v1M876.5 170v1M877.5 171v2M878.5 173v1M879.5 174v1M880.5 175v2M881.5 177v1M882.5 178v2M883.5 180v2M884.5 182v1M885.5 183v2M886.5 185v2M887.5 187v2M888.5 189v2M889.5 191v2M890.5 193v2M891.5 195v2M892.5 197v3M893.5 200v2M894.5 202v2M895.5 204v2M896.5 206v3M897.5 209v2M898.5 211v2M899.5 213v3M900.5 216v2M901.5 218v2M902.5 220v3M903.5 223v3M904.5 226v3M905.5 229v3M906.5 232v3M907.5 235v3M908.5 238v3M909.5 241v3M910.5 244v3M911.5 247v3M912.5 250v2M913.5 252v3M914.5 255v3M915.5 258v2M916.5 260v3M917.5 263v2M918.5 265v2M919.5 267v2M920.5 269v2M921.5 271v2M922.5 273v2M923.5 275v1M924.5 276v1M925.5 277v2M926.5 279v1M927.5 280v1M928.5 280v1M929.5 281v1M930.5 281v1M931.5 282v1M932.5 282v1M933.5 282v1M934.5 281v1M935.5 281v1M936.5 280v1M937.5 279v1M938.5 278v1M939.5 277v1M940.5 275v2M941.5 273v2M942.5 271v2M943.5 269v2M944.5 267v2M945.5 265v2M946.5 263v2M947.5 260v3M948.5 258v2M949.5 255v3M950.5 252v3M951.5 249v3M952.5 247v2M953.5 244v3M954.5 241v3M955.5 238v3M956.5 235v3M957.5 232v3M958.5 228v4M959.5 225v3M960.5 223v2M961.5 220v3M962.5 218v2M963.5 216v2M964.5 213v3M571.5 212v2M572.5 210v2M573.5 208v2M574.5 206v2M575.5 204v2M576.5 202v2M577.5 200v2M578.5 198v2M579.5 196v2M580.5 194v2M581.5 193v1M582.5 191v2M583.5 189v2M584.5 188v1M585.5 186v2M586.5 185v1M587.5 183v2M588.5 182v1M589.5 181v1M590.5 180v1M591.5 179v1M592.5 178v1M593.5 177v1M594.5 176v1M595.5 175v1M596.5 174v1M597.5 174v1M598.5 173v1M599.5 173v1M600.5 172v1M601.5 172v1M602.5 172v1M603.5 172v1M604.5 172v1M605.5 172v1M606.5 172v1M607.5 172v1M608.5 173v1M609.5 173v1M610.5 174v1M611.5 175v1M612.5 175v1M613.5 176v1M614.5 177v1M615.5 178v1M616.5 179v1M617.5 180v2M618.5 182v1M619.5 183v1M620.5 184v2M621.5 186v1M622.5 187v2M623.5 189v2M624.5 191v1M625.5 192v2M626.5 194v2M627.5 196v2M628.5 198v2M629.5 200v2M630.5 202v1M631.5 203v2M632.5 205v3M633.5 208v2M634.5 210v2M635.5 212v2M636.5 214v2M637.5 216v2M638.5 218v2M639.5 220v2M640.5 222v3M641.5 225v2M642.5 227v3M643.5 230v3M644.5 233v3M645.5 236v3M646.5 239v2M647.5 241v3M648.5 244v3M649.5 247v2M650.5 249v3M651.5 252v2M652.5 254v2M653.5 256v3M654.5 259v2M655.5 261v2M656.5 263v2M657.5 265v1M658.5 266v2M659.5 268v2M660.5 270v1M661.5 271v1M662.5 272v1M663.5 273v1M664.5 274v1M665.5 275v1M666.5 275v1M667.5 276v1M668.5 276v1M669.5 276v1M670.5 276v1M671.5 276v1M672.5 275v1M673.5 275v1M674.5 274v1M675.5 273v1M676.5 272v1M677.5 270v2M678.5 269v1M679.5 267v2M680.5 266v1M681.5 264v2M682.5 262v2M683.5 260v2M684.5 257v3M685.5 255v2M686.5 253v2M687.5 250v3M688.5 248v2M689.5 245v3M690.5 242v3M691.5 240v2M692.5 237v3M693.5 234v3M694.5 231v3M695.5 228v3M696.5 225v3M697.5 223v2M698.5 221v2M699.5 219v2M700.5 217v2M701.5 215v2M702.5 213v2M703.5 210v3M704.5 208v2M705.5 206v2M706.5 204v2M707.5 202v2M708.5 201v1M709.5 199v2M710.5 197v2M711.5 195v2M712.5 193v2M713.5 192v1M714.5 190v2M715.5 188v2M716.5 187v1M717.5 185v2M718.5 184v1M719.5 183v1M720.5 181v2M721.5 180v1M722.5 179v1M723.5 178v1M724.5 177v1M725.5 176v1M726.5 175v1M727.5 175v1M728.5 174v1M729.5 173v1M730.5 173v1M731.5 172v1M732.5 172v1M733.5 172v1M734.5 172v1M735.5 172v1M736.5 172v1M737.5 172v1M738.5 172v1M739.5 173v1M740.5 173v1M741.5 174v1M742.5 174v1M743.5 175v1M744.5 176v1M745.5 177v1M746.5 178v1M747.5 179v1M748.5 180v1M749.5 181v2M750.5 183v1M751.5 184v1M752.5 185v2M753.5 187v1M754.5 188v2M755.5 190v2M756.5 192v1M757.5 193v2M758.5 195v2M759.5 197v2M760.5 199v2M761.5 201v2M762.5 203v2M763.5 205v2M764.5 207v2M765.5 209v2M766.5 211v2M767.5 213v2M768.5 215v2M769.5 217v2M770.5 219v3M771.5 222v2M772.5 224v2M773.5 226v3M774.5 229v3M775.5 232v3M776.5 235v3M777.5 238v2M778.5 240v3M779.5 243v3M780.5 246v2M781.5 248v3M782.5 251v2M783.5 253v3M784.5 256v2M785.5 258v2M786.5 260v2M787.5 262v2M788.5 264v2M789.5 266v1M790.5 267v2M791.5 269v1M792.5 270v2M793.5 272v1M794.5 273v1M795.5 274v1M796.5 275v1M797.5 275v1M798.5 276v1M799.5 276v1M800.5 276v1M801.5 276v1M802.5 276v1M803.5 275v1M804.5 275v1M805.5 274v1M806.5 273v1M807.5 272v1M808.5 271v1M809.5 269v2M810.5 268v1M811.5 266v2M812.5 264v2M813.5 262v2M814.5 260v2M815.5 258v2M816.5 256v2M817.5 253v3M818.5 251v2M819.5 248v3M820.5 246v2M821.5 243v3M822.5 240v3M823.5 238v2M824.5 235v3M825.5 232v3M826.5 229v3M827.5 226v3M828.5 224v2M829.5 222v2M830.5 220v2M831.5 217v3M832.5 215v2M833.5 213v2M834.5 211v2M835.5 209v2M836.5 207v2M837.5 205v2M838.5 203v2M839.5 201v2M840.5 199v2M841.5 197v2M842.5 196v1M843.5 194v2M844.5 192v2M845.5 190v2M846.5 189v1M847.5 187v2M848.5 186v1M849.5 184v2M850.5 183v1M851.5 182v1M852.5 181v1M853.5 179v2M854.5 178v1M855.5 177v1M856.5 176v1M857.5 176v1M858.5 175v1M859.5 174v1M860.5 173v1M861.5 173v1M862.5 173v1M863.5 172v1M864.5 172v1M865.5 172v1M866.5 172v1M867.5 172v1M868.5 172v1M869.5 172v1M870.5 173v1M871.5 173v1M872.5 174v1M873.5 174v1M874.5 175v1M875.5 176v1M876.5 176v1M877.5 177v1M878.5 178v2M879.5 180v1M880.5 181v1M881.5 182v1M882.5 183v2M883.5 185v1M884.5 186v2M885.5 188v1M886.5 189v2M887.5 191v2M888.5 193v2M889.5 195v1M890.5 196v2M891.5 198v2M892.5 200v2M893.5 202v2M894.5 204v2M895.5 206v2M896.5 208v2M897.5 210v2M898.5 212v2M899.5 214v3M900.5 217v2M901.5 219v2M902.5 221v2M903.5 223v3M904.5 226v2M905.5 228v3M906.5 231v3M907.5 234v3M908.5 237v3M909.5 240v2M910.5 242v3M911.5 245v3M912.5 248v2M913.5 250v3M914.5 253v2M915.5 255v2M916.5 257v2M917.5 259v2M918.5 261v2M919.5 263v2M920.5 265v2M921.5 267v2M922.5 269v1M923.5 270v1M924.5 271v1M925.5 272v1M926.5 273v1M927.5 274v1M928.5 275v1M929.5 276v1M930.5 276v1M931.5 276v1M932.5 276v1M933.5 276v1M934.5 276v1M935.5 275v1M936.5 275v1M937.5 274v1M938.5 273v1M939.5 271v2M940.5 270v1M941.5 268v2M942.5 267v1M943.5 265v2M944.5 263v2M945.5 261v2M946.5 259v2M947.5 257v2M948.5 254v3M949.5 252v2M950.5 249v3M951.5 247v2M952.5 244v3M953.5 241v3M954.5 239v2M955.5 236v3M956.5 233v3M957.5 230v3M958.5 227v3M959.5 225v2M960.5 222v3M961.5 220v2M962.5 218v2M963.5 216v2M964.5 214v2M571.5 213v2M572.5 211v2M573.5 209v2M574.5 207v2M575.5 205v2M576.5 204v1M577.5 202v2M578.5 200v2M579.5 199v1M580.5 197v2M581.5 196v1M582.5 194v2M583.5 193v1M584.5 191v2M585.5 190v1M586.5 189v1M587.5 188v1M588.5 187v1M589.5 185v2M590.5 184v1M591.5 183v1M592.5 183v1M593.5 182v1M594.5 181v1M595.5 180v1M596.5 180v1M597.5 179v1M598.5 179v1M599.5 178v1M600.5 178v1M601.5 178v1M602.5 178v1M603.5 178v1M604.5 178v1M605.5 178v1M606.5 178v1M607.5 178v1M608.5 179v1M609.5 179v1M610.5 179v1M611.5 180v1M612.5 181v1M613.5 181v1M614.5 182v1M615.5 183v1M616.5 184v1M617.5 185v1M618.5 186v1M619.5 187v2M620.5 189v1M621.5 190v1M622.5 191v2M623.5 193v1M624.5 194v2M625.5 196v1M626.5 197v2M627.5 199v1M628.5 200v2M629.5 202v2M630.5 204v2M631.5 206v1M632.5 207v2M633.5 209v2M634.5 211v2M635.5 213v2M636.5 215v2M637.5 217v2M638.5 219v2M639.5 221v1M640.5 222v3M641.5 225v2M642.5 227v3M643.5 230v2M644.5 232v3M645.5 235v2M646.5 237v3M647.5 240v2M648.5 242v3M649.5 245v2M650.5 247v2M651.5 249v2M652.5 251v2M653.5 253v2M654.5 255v2M655.5 257v2M656.5 259v2M657.5 261v1M658.5 262v2M659.5 264v1M660.5 265v1M661.5 266v1M662.5 267v1M663.5 268v1M664.5 269v1M665.5 269v1M666.5 270v1M667.5 270v1M668.5 270v1M669.5 270v1M670.5 270v1M671.5 270v1M672.5 270v1M673.5 269v1M674.5 269v1M675.5 268v1M676.5 267v1M677.5 265v2M678.5 264v1M679.5 263v1M680.5 261v2M681.5 259v2M682.5 258v1M683.5 256v2M684.5 254v2M685.5 252v2M686.5 249v3M687.5 247v2M688.5 245v2M689.5 242v3M690.5 240v2M691.5 238v2M692.5 235v3M693.5 232v3M694.5 230v2M695.5 227v3M696.5 225v2M697.5 223v2M698.5 221v2M699.5 219v2M700.5 217v2M701.5 215v2M702.5 213v2M703.5 211v2M704.5 210v1M705.5 208v2M706.5 206v2M707.5 204v2M708.5 203v1M709.5 201v2M710.5 199v2M711.5 198v1M712.5 196v2M713.5 195v1M714.5 193v2M715.5 192v1M716.5 190v2M717.5 189v1M718.5 188v1M719.5 187v1M720.5 186v1M721.5 185v1M722.5 184v1M723.5 183v1M724.5 182v1M725.5 181v1M726.5 181v1M727.5 180v1M728.5 179v1M729.5 179v1M730.5 178v1M731.5 178v1M732.5 178v1M733.5 178v1M734.5 178v1M735.5 178v1M736.5 178v1M737.5 178v1M738.5 178v1M739.5 178v1M740.5 179v1M741.5 179v1M742.5 180v1M743.5 181v1M744.5 181v1M745.5 182v1M746.5 183v1M747.5 184v1M748.5 185v1M749.5 186v1M750.5 187v1M751.5 188v1M752.5 189v2M753.5 191v1M754.5 192v2M755.5 194v1M756.5 195v2M757.5 197v1M758.5 198v2M759.5 200v2M760.5 202v1M761.5 203v2M762.5 205v2M763.5 207v2M764.5 209v1M765.5 210v2M766.5 212v2M767.5 214v2M768.5 216v2M769.5 218v2M770.5 220v2M771.5 222v2M772.5 224v2M773.5 226v3M774.5 229v2M775.5 231v3M776.5 234v2M777.5 236v3M778.5 239v2M779.5 241v3M780.5 244v2M781.5 246v2M782.5 248v3M783.5 251v2M784.5 253v2M785.5 255v2M786.5 257v1M787.5 258v2M788.5 260v2M789.5 262v1M790.5 263v1M791.5 264v2M792.5 266v1M793.5 267v1M794.5 268v1M795.5 269v1M796.5 269v1M797.5 270v1M798.5 270v1M799.5 270v1M800.5 270v1M801.5 270v1M802.5 270v1M803.5 270v1M804.5 269v1M805.5 269v1M806.5 268v1M807.5 267v1M808.5 266v1M809.5 265v1M810.5 263v2M811.5 262v1M812.5 260v2M813.5 258v2M814.5 256v2M815.5 254v2M816.5 252v2M817.5 250v2M818.5 248v2M819.5 246v2M820.5 243v3M821.5 241v2M822.5 238v3M823.5 236v2M824.5 233v3M825.5 231v2M826.5 228v3M827.5 226v2M828.5 223v3M829.5 222v1M830.5 220v2M831.5 218v2M832.5 216v2M833.5 214v2M834.5 212v2M835.5 210v2M836.5 208v2M837.5 207v1M838.5 205v2M839.5 203v2M840.5 201v2M841.5 200v1M842.5 198v2M843.5 197v1M844.5 195v2M845.5 194v1M846.5 192v2M847.5 191v1M848.5 190v1M849.5 188v2M850.5 187v1M851.5 186v1M852.5 185v1M853.5 184v1M854.5 183v1M855.5 182v1M856.5 181v1M857.5 181v1M858.5 180v1M859.5 179v1M860.5 179v1M861.5 179v1M862.5 178v1M863.5 178v1M864.5 178v1M865.5 178v1M866.5 178v1M867.5 178v1M868.5 178v1M869.5 178v1M870.5 178v1M871.5 179v1M872.5 179v1M873.5 180v1M874.5 180v1M875.5 181v1M876.5 182v1M877.5 183v1M878.5 183v1M879.5 184v2M880.5 186v1M881.5 187v1M882.5 188v1M883.5 189v1M884.5 190v2M885.5 192v1M886.5 193v2M887.5 195v1M888.5 196v2M889.5 198v1M890.5 199v2M891.5 201v2M892.5 203v1M893.5 204v2M894.5 206v2M895.5 208v2M896.5 210v2M897.5 212v2M898.5 214v1M899.5 215v2M900.5 217v2M901.5 219v2M902.5 221v2M903.5 223v2M904.5 225v3M905.5 228v3M906.5 231v2M907.5 233v3M908.5 236v2M909.5 238v3M910.5 241v2M911.5 243v2M912.5 245v3M913.5 248v2M914.5 250v2M915.5 252v2M916.5 254v2M917.5 256v2M918.5 258v2M919.5 260v1M920.5 261v2M921.5 263v1M922.5 264v1M923.5 265v1M924.5 266v1M925.5 267v1M926.5 268v1M927.5 269v1M928.5 270v1M929.5 270v1M930.5 270v1M931.5 270v1M932.5 270v1M933.5 270v1M934.5 270v1M935.5 270v1M936.5 269v1M937.5 268v1M938.5 267v1M939.5 266v1M940.5 265v1M941.5 264v1M942.5 262v2M943.5 261v1M944.5 259v2M945.5 257v2M946.5 255v2M947.5 253v2M948.5 251v2M949.5 249v2M950.5 246v3M951.5 244v2M952.5 242v2M953.5 239v3M954.5 237v2M955.5 234v3M956.5 232v2M957.5 229v3M958.5 226v3M959.5 224v2M960.5 222v2M961.5 220v2M962.5 218v2M963.5 216v2M964.5 215v1M571.5 214v1M572.5 212v2M573.5 211v1M574.5 209v2M575.5 208v1M576.5 206v2M577.5 205v1M578.5 203v2M579.5 202v1M580.5 200v2M581.5 199v1M582.5 198v1M583.5 197v1M584.5 195v2M585.5 194v1M586.5 193v1M587.5 192v1M588.5 191v1M589.5 190v1M590.5 190v1M591.5 189v1M592.5 188v1M593.5 187v1M594.5 187v1M595.5 186v1M596.5 186v1M597.5 185v1M598.5 185v1M599.5 184v1M600.5 184v1M601.5 184v1M602.5 184v1M603.5 184v1M604.5 184v1M605.5 184v1M606.5 184v1M607.5 184v1M608.5 185v1M609.5 185v1M610.5 186v1M611.5 186v1M612.5 187v1M613.5 187v1M614.5 188v1M615.5 189v1M616.5 189v1M617.5 190v1M618.5 191v1M619.5 192v1M620.5 193v1M621.5 194v2M622.5 196v1M623.5 197v1M624.5 198v1M625.5 199v2M626.5 201v1M627.5 202v1M628.5 203v2M629.5 205v1M630.5 206v2M631.5 208v1M632.5 209v2M633.5 211v2M634.5 213v1M635.5 214v2M636.5 216v2M637.5 218v1M638.5 219v2M639.5 221v2M640.5 223v1M641.5 224v3M642.5 227v2M643.5 229v2M644.5 231v3M645.5 234v2M646.5 236v2M647.5 238v2M648.5 240v2M649.5 242v2M650.5 244v2M651.5 246v2M652.5 248v2M653.5 250v2M654.5 252v2M655.5 254v1M656.5 255v1M657.5 256v2M658.5 258v1M659.5 259v1M660.5 260v1M661.5 261v1M662.5 262v1M663.5 263v1M664.5 264v1M665.5 264v1M666.5 264v1M667.5 265v1M668.5 265v1M669.5 265v1M670.5 265v1M671.5 265v1M672.5 264v1M673.5 264v1M674.5 263v1M675.5 262v1M676.5 262v1M677.5 261v1M678.5 259v2M679.5 258v1M680.5 257v1M681.5 255v2M682.5 254v1M683.5 252v2M684.5 250v2M685.5 248v2M686.5 246v2M687.5 244v2M688.5 242v2M689.5 240v2M690.5 238v2M691.5 236v2M692.5 233v3M693.5 231v2M694.5 229v2M695.5 226v3M696.5 224v2M697.5 223v1M698.5 221v2M699.5 219v2M700.5 218v1M701.5 216v2M702.5 214v2M703.5 213v1M704.5 211v2M705.5 210v1M706.5 208v2M707.5 207v1M708.5 205v2M709.5 204v1M710.5 202v2M711.5 201v1M712.5 200v1M713.5 198v2M714.5 197v1M715.5 196v1M716.5 195v1M717.5 194v1M718.5 193v1M719.5 192v1M720.5 191v1M721.5 190v1M722.5 189v1M723.5 188v1M724.5 187v1M725.5 187v1M726.5 186v1M727.5 186v1M728.5 185v1M729.5 185v1M730.5 185v1M731.5 184v1M732.5 184v1M733.5 184v1M734.5 184v1M735.5 184v1M736.5 184v1M737.5 184v1M738.5 184v1M739.5 185v1M740.5 185v1M741.5 185v1M742.5 186v1M743.5 186v1M744.5 187v1M745.5 188v1M746.5 188v1M747.5 189v1M748.5 190v1M749.5 191v1M750.5 192v1M751.5 193v1M752.5 194v1M753.5 195v1M754.5 196v2M755.5 198v1M756.5 199v1M757.5 200v2M758.5 202v1M759.5 203v1M760.5 204v2M761.5 206v1M762.5 207v2M763.5 209v2M764.5 211v1M765.5 212v2M766.5 214v1M767.5 215v2M768.5 217v2M769.5 219v1M770.5 220v2M771.5 222v2M772.5 224v2M773.5 226v2M774.5 228v3M775.5 231v2M776.5 233v2M777.5 235v2M778.5 237v3M779.5 240v2M780.5 242v2M781.5 244v2M782.5 246v2M783.5 248v2M784.5 250v1M785.5 251v2M786.5 253v2M787.5 255v1M788.5 256v1M789.5 257v2M790.5 259v1M791.5 260v1M792.5 261v1M793.5 262v1M794.5 263v1M795.5 263v1M796.5 264v1M797.5 264v1M798.5 265v1M799.5 265v1M800.5 265v1M801.5 265v1M802.5 265v1M803.5 264v1M804.5 264v1M805.5 263v1M806.5 263v1M807.5 262v1M808.5 261v1M809.5 260v1M810.5 258v2M811.5 257v1M812.5 256v1M813.5 254v2M814.5 252v2M815.5 251v1M816.5 249v2M817.5 247v2M818.5 245v2M819.5 243v2M820.5 241v2M821.5 239v2M822.5 236v3M823.5 234v2M824.5 232v2M825.5 229v3M826.5 227v2M827.5 225v2M828.5 223v2M829.5 221v2M830.5 220v1M831.5 218v2M832.5 216v2M833.5 215v1M834.5 213v2M835.5 212v1M836.5 210v2M837.5 209v1M838.5 207v2M839.5 206v1M840.5 204v2M841.5 203v1M842.5 201v2M843.5 200v1M844.5 199v1M845.5 197v2M846.5 196v1M847.5 195v1M848.5 194v1M849.5 193v1M850.5 192v1M851.5 191v1M852.5 190v1M853.5 189v1M854.5 188v1M855.5 188v1M856.5 187v1M857.5 186v1M858.5 186v1M859.5 185v1M860.5 185v1M861.5 185v1M862.5 184v1M863.5 184v1M864.5 184v1M865.5 184v1M866.5 184v1M867.5 184v1M868.5 184v1M869.5 184v1M870.5 185v1M871.5 185v1M872.5 185v1M873.5 186v1M874.5 186v1M875.5 187v1M876.5 187v1M877.5 188v1M878.5 189v1M879.5 190v1M880.5 191v1M881.5 192v1M882.5 193v1M883.5 194v1M884.5 195v1M885.5 196v1M886.5 197v1M887.5 198v2M888.5 200v1M889.5 201v2M890.5 203v1M891.5 204v1M892.5 205v2M893.5 207v1M894.5 208v2M895.5 210v2M896.5 212v1M897.5 213v2M898.5 215v2M899.5 217v1M900.5 218v2M901.5 220v2M902.5 222v1M903.5 223v2M904.5 225v3M905.5 228v2M906.5 230v2M907.5 232v2M908.5 234v3M909.5 237v2M910.5 239v2M911.5 241v2M912.5 243v2M913.5 245v2M914.5 247v2M915.5 249v2M916.5 251v1M917.5 252v2M918.5 254v2M919.5 256v1M920.5 257v1M921.5 258v1M922.5 259v2M923.5 261v1M924.5 262v1M925.5 262v1M926.5 263v1M927.5 264v1M928.5 264v1M929.5 265v1M930.5 265v1M931.5 265v1M932.5 265v1M933.5 265v1M934.5 264v1M935.5 264v1M936.5 264v1M937.5 263v1M938.5 262v1M939.5 261v1M940.5 260v1M941.5 259v1M942.5 258v1M943.5 256v2M944.5 255v1M945.5 253v2M946.5 251v2M947.5 249v2M948.5 248v1M949.5 246v2M950.5 244v2M951.5 241v3M952.5 239v2M953.5 237v2M954.5 235v2M955.5 233v2M956.5 230v3M957.5 228v2M958.5 226v2M959.5 224v2M960.5 222v2M961.5 220v2M962.5 219v1M963.5 217v2M964.5 215v2M571.5 215v1M572.5 214v1M573.5 212v2M574.5 211v1M575.5 210v1M576.5 208v2M577.5 207v1M578.5 206v1M579.5 205v1M580.5 204v1M581.5 203v1M582.5 202v1M583.5 201v1M584.5 200v1M585.5 199v1M586.5 198v1M587.5 197v1M588.5 196v1M589.5 195v1M590.5 195v1M591.5 194v1M592.5 193v1M593.5 193v1M594.5 192v1M595.5 192v1M596.5 191v1M597.5 191v1M598.5 191v1M599.5 190v1M600.5 190v1M601.5 190v1M602.5 190v1M603.5 190v1M604.5 190v1M605.5 190v1M606.5 190v1M607.5 190v1M608.5 191v1M609.5 191v1M610.5 191v1M611.5 192v1M612.5 192v1M613.5 193v1M614.5 193v1M615.5 194v1M616.5 195v1M617.5 195v1M618.5 196v1M619.5 197v1M620.5 198v1M621.5 199v1M622.5 200v1M623.5 201v1M624.5 202v1M625.5 203v1M626.5 204v1M627.5 205v1M628.5 206v2M629.5 208v1M630.5 209v1M631.5 210v2M632.5 212v1M633.5 213v1M634.5 214v2M635.5 216v1M636.5 217v2M637.5 219v1M638.5 220v1M639.5 221v2M640.5 223v1M641.5 224v2M642.5 226v2M643.5 228v3M644.5 231v2M645.5 233v1M646.5 234v2M647.5 236v2M648.5 238v2M649.5 240v2M650.5 242v2M651.5 244v1M652.5 245v2M653.5 247v1M654.5 248v2M655.5 250v1M656.5 251v1M657.5 252v1M658.5 253v1M659.5 254v1M660.5 255v1M661.5 256v1M662.5 257v1M663.5 258v1M664.5 258v1M665.5 259v1M666.5 259v1M667.5 259v1M668.5 259v1M669.5 259v1M670.5 259v1M671.5 259v1M672.5 259v1M673.5 258v1M674.5 258v1M675.5 257v1M676.5 256v1M677.5 255v1M678.5 255v1M679.5 253v2M680.5 252v1M681.5 251v1M682.5 249v2M683.5 248v1M684.5 246v2M685.5 245v1M686.5 243v2M687.5 241v2M688.5 239v2M689.5 238v1M690.5 236v2M691.5 234v2M692.5 232v2M693.5 230v2M694.5 228v2M695.5 226v2M696.5 224v2M697.5 223v1M698.5 221v2M699.5 220v1M700.5 218v2M701.5 217v1M702.5 215v2M703.5 214v1M704.5 213v1M705.5 211v2M706.5 210v1M707.5 209v1M708.5 208v1M709.5 206v2M710.5 205v1M711.5 204v1M712.5 203v1M713.5 202v1M714.5 201v1M715.5 200v1M716.5 199v1M717.5 198v1M718.5 197v1M719.5 196v1M720.5 195v1M721.5 195v1M722.5 194v1M723.5 193v1M724.5 193v1M725.5 192v1M726.5 192v1M727.5 191v1M728.5 191v1M729.5 191v1M730.5 190v1M731.5 190v1M732.5 190v1M733.5 190v1M734.5 190v1M735.5 190v1M736.5 190v1M737.5 190v1M738.5 190v1M739.5 191v1M740.5 191v1M741.5 191v1M742.5 192v1M743.5 192v1M744.5 193v1M745.5 193v1M746.5 194v1M747.5 194v1M748.5 195v1M749.5 196v1M750.5 197v1M751.5 198v1M752.5 199v1M753.5 199v1M754.5 200v1M755.5 201v2M756.5 203v1M757.5 204v1M758.5 205v1M759.5 206v1M760.5 207v2M761.5 209v1M762.5 210v1M763.5 211v1M764.5 212v2M765.5 214v1M766.5 215v2M767.5 217v1M768.5 218v1M769.5 219v2M770.5 221v1M771.5 222v2M772.5 224v2M773.5 226v2M774.5 228v2M775.5 230v2M776.5 232v2M777.5 234v2M778.5 236v2M779.5 238v2M780.5 240v1M781.5 241v2M782.5 243v2M783.5 245v1M784.5 246v2M785.5 248v1M786.5 249v2M787.5 251v1M788.5 252v1M789.5 253v1M790.5 254v1M791.5 255v1M792.5 256v1M793.5 257v1M794.5 257v1M795.5 258v1M796.5 258v1M797.5 259v1M798.5 259v1M799.5 259v1M800.5 259v1M801.5 259v1M802.5 259v1M803.5 259v1M804.5 258v1M805.5 258v1M806.5 257v1M807.5 257v1M808.5 256v1M809.5 255v1M810.5 254v1M811.5 253v1M812.5 251v2M813.5 250v1M814.5 248v2M815.5 247v1M816.5 245v2M817.5 244v1M818.5 242v2M819.5 240v2M820.5 238v2M821.5 236v2M822.5 234v2M823.5 232v2M824.5 230v2M825.5 228v2M826.5 226v2M827.5 224v2M828.5 223v1M829.5 222v1M830.5 220v2M831.5 219v1M832.5 217v2M833.5 216v1M834.5 215v1M835.5 213v2M836.5 212v1M837.5 211v1M838.5 209v2M839.5 208v1M840.5 207v1M841.5 206v1M842.5 204v2M843.5 203v1M844.5 202v1M845.5 201v1M846.5 200v1M847.5 199v1M848.5 198v1M849.5 197v1M850.5 197v1M851.5 196v1M852.5 195v1M853.5 194v1M854.5 194v1M855.5 193v1M856.5 192v1M857.5 192v1M858.5 192v1M859.5 191v1M860.5 191v1M861.5 191v1M862.5 190v1M863.5 190v1M864.5 190v1M865.5 190v1M866.5 190v1M867.5 190v1M868.5 190v1M869.5 190v1M870.5 191v1M871.5 191v1M872.5 191v1M873.5 192v1M874.5 192v1M875.5 192v1M876.5 193v1M877.5 194v1M878.5 194v1M879.5 195v1M880.5 196v1M881.5 196v1M882.5 197v1M883.5 198v1M884.5 199v1M885.5 200v1M886.5 201v1M887.5 202v1M888.5 203v1M889.5 204v2M890.5 206v1M891.5 207v1M892.5 208v1M893.5 209v2M894.5 211v1M895.5 212v1M896.5 213v2M897.5 215v1M898.5 216v2M899.5 218v1M900.5 219v1M901.5 220v2M902.5 222v1M903.5 223v2M904.5 225v2M905.5 227v2M906.5 229v2M907.5 231v2M908.5 233v2M909.5 235v2M910.5 237v2M911.5 239v2M912.5 241v1M913.5 242v2M914.5 244v2M915.5 246v1M916.5 247v2M917.5 249v1M918.5 250v1M919.5 251v2M920.5 253v1M921.5 254v1M922.5 255v1M923.5 256v1M924.5 256v1M925.5 257v1M926.5 258v1M927.5 258v1M928.5 259v1M929.5 259v1M930.5 259v1M931.5 259v1M932.5 259v1M933.5 259v1M934.5 259v1M935.5 258v1M936.5 258v1M937.5 257v1M938.5 257v1M939.5 256v1M940.5 255v1M941.5 254v1M942.5 253v1M943.5 252v1M944.5 250v2M945.5 249v1M946.5 247v2M947.5 246v1M948.5 244v2M949.5 242v2M950.5 241v1M951.5 239v2M952.5 237v2M953.5 235v2M954.5 233v2M955.5 231v2M956.5 229v2M957.5 227v2M958.5 225v2M959.5 224v1M960.5 222v2M961.5 221v1M962.5 219v2M963.5 218v1M964.5 216v2M571.5 216v1M572.5 215v1M573.5 214v1M574.5 213v1M575.5 212v1M576.5 210v2M577.5 209v1M578.5 208v1M579.5 207v1M580.5 206v1M581.5 206v1M582.5 205v1M583.5 204v1M584.5 203v1M585.5 202v1M586.5 201v1M587.5 201v1M588.5 200v1M589.5 199v1M590.5 199v1M591.5 198v1M592.5 198v1M593.5 197v1M594.5 197v1M595.5 196v1M596.5 196v1M597.5 196v1M598.5 196v1M599.5 195v1M600.5 195v1M601.5 195v1M602.5 195v1M603.5 195v1M604.5 195v1M605.5 195v1M606.5 195v1M607.5 196v1M608.5 196v1M609.5 196v1M610.5 196v1M611.5 197v1M612.5 197v1M613.5 197v1M614.5 198v1M615.5 198v1M616.5 199v1M617.5 200v1M618.5 200v1M619.5 201v1M620.5 202v1M621.5 202v1M622.5 203v1M623.5 204v1M624.5 205v1M625.5 206v1M626.5 207v1M627.5 208v1M628.5 209v1M629.5 210v1M630.5 211v1M631.5 212v1M632.5 213v1M633.5 214v2M634.5 216v1M635.5 217v1M636.5 218v1M637.5 219v2M638.5 221v1M639.5 222v1M640.5 223v1M641.5 224v2M642.5 226v2M643.5 228v2M644.5 230v1M645.5 231v2M646.5 233v2M647.5 235v1M648.5 236v2M649.5 238v1M650.5 239v2M651.5 241v1M652.5 242v2M653.5 244v1M654.5 245v1M655.5 246v1M656.5 247v1M657.5 248v1M658.5 249v1M659.5 250v1M660.5 251v1M661.5 252v1M662.5 252v1M663.5 253v1M664.5 253v1M665.5 253v1M666.5 254v1M667.5 254v1M668.5 254v1M669.5 254v1M670.5 254v1M671.5 254v1M672.5 253v1M673.5 253v1M674.5 253v1M675.5 252v1M676.5 251v1M677.5 251v1M678.5 250v1M679.5 249v1M680.5 248v1M681.5 247v1M682.5 246v1M683.5 244v2M684.5 243v1M685.5 242v1M686.5 240v2M687.5 239v1M688.5 237v2M689.5 235v2M690.5 234v1M691.5 232v2M692.5 230v2M693.5 229v1M694.5 227v2M695.5 225v2M696.5 224v1M697.5 223v1M698.5 221v2M699.5 220v1M700.5 219v1M701.5 218v1M702.5 216v2M703.5 215v1M704.5 214v1M705.5 213v1M706.5 212v1M707.5 211v1M708.5 210v1M709.5 209v1M710.5 208v1M711.5 207v1M712.5 206v1M713.5 205v1M714.5 204v1M715.5 203v1M716.5 202v1M717.5 202v1M718.5 201v1M719.5 200v1M720.5 200v1M721.5 199v1M722.5 198v1M723.5 198v1M724.5 197v1M725.5 197v1M726.5 197v1M727.5 196v1M728.5 196v1M729.5 196v1M730.5 195v1M731.5 195v1M732.5 195v1M733.5 195v1M734.5 195v1M735.5 195v1M736.5 195v1M737.5 195v1M738.5 195v1M739.5 196v1M740.5 196v1M741.5 196v1M742.5 197v1M743.5 197v1M744.5 197v1M745.5 198v1M746.5 198v1M747.5 199v1M748.5 199v1M749.5 200v1M750.5 201v1M751.5 201v1M752.5 202v1M753.5 203v1M754.5 204v1M755.5 205v1M756.5 206v1M757.5 207v1M758.5 208v1M759.5 209v1M760.5 210v1M761.5 211v1M762.5 212v1M763.5 213v1M764.5 214v1M765.5 215v1M766.5 216v2M767.5 218v1M768.5 219v1M769.5 220v1M770.5 221v2M771.5 223v1M772.5 224v2M773.5 226v1M774.5 227v2M775.5 229v2M776.5 231v2M777.5 233v1M778.5 234v2M779.5 236v1M780.5 237v2M781.5 239v1M782.5 240v2M783.5 242v1M784.5 243v2M785.5 245v1M786.5 246v1M787.5 247v1M788.5 248v1M789.5 249v1M790.5 250v1M791.5 251v1M792.5 251v1M793.5 252v1M794.5 253v1M795.5 253v1M796.5 253v1M797.5 254v1M798.5 254v1M799.5 254v1M800.5 254v1M801.5 254v1M802.5 254v1M803.5 254v1M804.5 253v1M805.5 253v1M806.5 252v1M807.5 252v1M808.5 251v1M809.5 250v1M810.5 249v1M811.5 248v1M812.5 247v1M813.5 246v1M814.5 245v1M815.5 244v1M816.5 242v2M817.5 241v1M818.5 239v2M819.5 238v1M820.5 236v2M821.5 234v2M822.5 233v1M823.5 231v2M824.5 229v2M825.5 227v2M826.5 226v1M827.5 224v2M828.5 223v1M829.5 222v1M830.5 220v2M831.5 219v1M832.5 218v1M833.5 217v1M834.5 216v1M835.5 215v1M836.5 213v2M837.5 212v1M838.5 211v1M839.5 210v1M840.5 209v1M841.5 208v1M842.5 207v1M843.5 206v1M844.5 205v1M845.5 204v1M846.5 203v1M847.5 203v1M848.5 202v1M849.5 201v1M850.5 200v1M851.5 200v1M852.5 199v1M853.5 199v1M854.5 198v1M855.5 198v1M856.5 197v1M857.5 197v1M858.5 196v1M859.5 196v1M860.5 196v1M861.5 196v1M862.5 195v1M863.5 195v1M864.5 195v1M865.5 195v1M866.5 195v1M867.5 195v1M868.5 195v1M869.5 195v1M870.5 196v1M871.5 196v1M872.5 196v1M873.5 196v1M874.5 197v1M875.5 197v1M876.5 198v1M877.5 198v1M878.5 199v1M879.5 199v1M880.5 200v1M881.5 201v1M882.5 201v1M883.5 202v1M884.5 203v1M885.5 204v1M886.5 204v1M887.5 205v1M888.5 206v1M889.5 207v1M890.5 208v1M891.5 209v1M892.5 210v1M893.5 211v2M894.5 213v1M895.5 214v1M896.5 215v1M897.5 216v1M898.5 217v1M899.5 218v2M900.5 220v1M901.5 221v1M902.5 222v1M903.5 223v2M904.5 225v2M905.5 227v2M906.5 229v1M907.5 230v2M908.5 232v2M909.5 234v1M910.5 235v2M911.5 237v1M912.5 238v2M913.5 240v1M914.5 241v2M915.5 243v1M916.5 244v1M917.5 245v2M918.5 247v1M919.5 248v1M920.5 249v1M921.5 250v1M922.5 250v1M923.5 251v1M924.5 252v1M925.5 252v1M926.5 253v1M927.5 253v1M928.5 254v1M929.5 254v1M930.5 254v1M931.5 254v1M932.5 254v1M933.5 254v1M934.5 254v1M935.5 253v1M936.5 253v1M937.5 252v1M938.5 252v1M939.5 251v1M940.5 250v1M941.5 250v1M942.5 249v1M943.5 248v1M944.5 247v1M945.5 245v2M946.5 244v1M947.5 243v1M948.5 241v2M949.5 240v1M950.5 238v2M951.5 237v1M952.5 235v2M953.5 233v2M954.5 231v2M955.5 230v1M956.5 228v2M957.5 226v2M958.5 225v1M959.5 223v2M960.5 222v1M961.5 221v1M962.5 220v1M963.5 218v2M964.5 217v1M571.5 217v1M572.5 216v1M573.5 215v1M574.5 214v1M575.5 213v1M576.5 212v1M577.5 211v1M578.5 210v1M579.5 209v1M580.5 208v1M581.5 208v1M582.5 207v1M583.5 206v1M584.5 205v1M585.5 205v1M586.5 204v1M587.5 203v1M588.5 203v1M589.5 202v1M590.5 202v1M591.5 201v1M592.5 201v1M593.5 201v1M594.5 200v1M595.5 200v1M596.5 200v1M597.5 199v1M598.5 199v1M599.5 199v1M600.5 199v1M601.5 199v1M602.5 199v1M603.5 199v1M604.5 199v1M605.5 199v1M606.5 199v1M607.5 199v1M608.5 199v1M609.5 200v1M610.5 200v1M611.5 200v1M612.5 201v1M613.5 201v1M614.5 201v1M615.5 202v1M616.5 202v1M617.5 203v1M618.5 203v1M619.5 204v1M620.5 205v1M621.5 205v1M622.5 206v1M623.5 207v1M624.5 207v1M625.5 208v1M626.5 209v1M627.5 210v1M628.5 211v1M629.5 212v1M630.5 213v1M631.5 214v1M632.5 215v1M633.5 216v1M634.5 217v1M635.5 218v1M636.5 219v1M637.5 220v1M638.5 221v1M639.5 222v1M640.5 223v1M641.5 224v2M642.5 226v1M643.5 227v2M644.5 229v1M645.5 230v2M646.5 232v1M647.5 233v2M648.5 235v1M649.5 236v1M650.5 237v1M651.5 238v2M652.5 240v1M653.5 241v1M654.5 242v1M655.5 243v1M656.5 244v1M657.5 244v1M658.5 245v1M659.5 246v1M660.5 247v1M661.5 247v1M662.5 248v1M663.5 248v1M664.5 248v1M665.5 249v1M666.5 249v1M667.5 249v1M668.5 249v1M669.5 249v1M670.5 249v1M671.5 249v1M672.5 248v1M673.5 248v1M674.5 248v1M675.5 247v1M676.5 247v1M677.5 246v1M678.5 246v1M679.5 245v1M680.5 244v1M681.5 243v1M682.5 242v1M683.5 241v1M684.5 240v1M685.5 239v1M686.5 238v1M687.5 236v2M688.5 235v1M689.5 233v2M690.5 232v1M691.5 231v1M692.5 229v2M693.5 228v1M694.5 226v2M695.5 225v1M696.5 224v1M697.5 223v1M698.5 221v2M699.5 220v1M700.5 219v1M701.5 218v1M702.5 217v1M703.5 216v1M704.5 215v1M705.5 214v1M706.5 213v1M707.5 212v1M708.5 211v1M709.5 210v1M710.5 210v1M711.5 209v1M712.5 208v1M713.5 207v1M714.5 206v1M715.5 206v1M716.5 205v1M717.5 204v1M718.5 204v1M719.5 203v1M720.5 203v1M721.5 202v1M722.5 202v1M723.5 201v1M724.5 201v1M725.5 200v1M726.5 200v1M727.5 200v1M728.5 200v1M729.5 199v1M730.5 199v1M731.5 199v1M732.5 199v1M733.5 199v1M734.5 199v1M735.5 199v1M736.5 199v1M737.5 199v1M738.5 199v1M739.5 199v1M740.5 200v1M741.5 200v1M742.5 200v1M743.5 200v1M744.5 201v1M745.5 201v1M746.5 202v1M747.5 202v1M748.5 203v1M749.5 203v1M750.5 204v1M751.5 204v1M752.5 205v1M753.5 206v1M754.5 206v1M755.5 207v1M756.5 208v1M757.5 209v1M758.5 210v1M759.5 211v1M760.5 211v1M761.5 212v1M762.5 213v1M763.5 214v1M764.5 215v1M765.5 216v1M766.5 217v1M767.5 218v2M768.5 220v1M769.5 221v1M770.5 222v1M771.5 223v1M772.5 224v1M773.5 225v2M774.5 227v1M775.5 228v2M776.5 230v1M777.5 231v2M778.5 233v1M779.5 234v1M780.5 235v2M781.5 237v1M782.5 238v1M783.5 239v1M784.5 240v1M785.5 241v1M786.5 242v1M787.5 243v1M788.5 244v1M789.5 245v1M790.5 246v1M791.5 246v1M792.5 247v1M793.5 247v1M794.5 248v1M795.5 248v1M796.5 249v1M797.5 249v1M798.5 249v1M799.5 249v1M800.5 249v1M801.5 249v1M802.5 249v1M803.5 249v1M804.5 248v1M805.5 248v1M806.5 248v1M807.5 247v1M808.5 246v1M809.5 246v1M810.5 245v1M811.5 244v1M812.5 243v1M813.5 243v1M814.5 241v2M815.5 240v1M816.5 239v1M817.5 238v1M818.5 237v1M819.5 235v2M820.5 234v1M821.5 233v1M822.5 231v2M823.5 230v1M824.5 228v2M825.5 227v1M826.5 225v2M827.5 224v1M828.5 223v1M829.5 222v1M830.5 221v1M831.5 220v1M832.5 219v1M833.5 218v1M834.5 217v1M835.5 216v1M836.5 215v1M837.5 214v1M838.5 213v1M839.5 212v1M840.5 211v1M841.5 210v1M842.5 209v1M843.5 208v1M844.5 207v1M845.5 207v1M846.5 206v1M847.5 205v1M848.5 204v1M849.5 204v1M850.5 203v1M851.5 203v1M852.5 202v1M853.5 202v1M854.5 201v1M855.5 201v1M856.5 201v1M857.5 200v1M858.5 200v1M859.5 200v1M860.5 199v1M861.5 199v1M862.5 199v1M863.5 199v1M864.5 199v1M865.5 199v1M866.5 199v1M867.5 199v1M868.5 199v1M869.5 199v1M870.5 199v1M871.5 200v1M872.5 200v1M873.5 200v1M874.5 200v1M875.5 201v1M876.5 201v1M877.5 201v1M878.5 202v1M879.5 202v1M880.5 203v1M881.5 204v1M882.5 204v1M883.5 205v1M884.5 205v1M885.5 206v1M886.5 207v1M887.5 208v1M888.5 209v1M889.5 209v1M890.5 210v1M891.5 211v1M892.5 212v1M893.5 213v1M894.5 214v1M895.5 215v1M896.5 216v1M897.5 217v1M898.5 218v1M899.5 219v1M900.5 220v1M901.5 221v1M902.5 222v1M903.5 223v2M904.5 225v1M905.5 226v2M906.5 228v1M907.5 229v2M908.5 231v1M909.5 232v2M910.5 234v1M911.5 235v1M912.5 236v2M913.5 238v1M914.5 239v1M915.5 240v1M916.5 241v1M917.5 242v1M918.5 243v1M919.5 244v1M920.5 245v1M921.5 245v1M922.5 246v1M923.5 247v1M924.5 247v1M925.5 248v1M926.5 248v1M927.5 248v1M928.5 249v1M929.5 249v1M930.5 249v1M931.5 249v1M932.5 249v1M933.5 249v1M934.5 249v1M935.5 248v1M936.5 248v1M937.5 248v1M938.5 247v1M939.5 247v1M940.5 246v1M941.5 245v1M942.5 245v1M943.5 244v1M944.5 243v1M945.5 242v1M946.5 241v1M947.5 240v1M948.5 238v2M949.5 237v1M950.5 236v1M951.5 234v2M952.5 233v1M953.5 232v1M954.5 230v2M955.5 229v1M956.5 227v2M957.5 226v1M958.5 224v2M959.5 223v1M960.5 222v1M961.5 221v1M962.5 220v1M963.5 219v1M964.5 218v1M571.5 218v1M572.5 217v1M573.5 216v1M574.5 215v1M575.5 214v1M576.5 213v1M577.5 213v1M578.5 212v1M579.5 211v1M580.5 210v1M581.5 210v1M582.5 209v1M583.5 208v1M584.5 208v1M585.5 207v1M586.5 207v1M587.5 206v1M588.5 206v1M589.5 205v1M590.5 205v1M591.5 205v1M592.5 204v1M593.5 204v1M594.5 204v1M595.5 203v1M596.5 203v1M597.5 203v1M598.5 203v1M599.5 203v1M600.5 203v1M601.5 203v1M602.5 203v1M603.5 203v1M604.5 203v1M605.5 203v1M606.5 203v1M607.5 203v1M608.5 203v1M609.5 203v1M610.5 203v1M611.5 204v1M612.5 204v1M613.5 204v1M614.5 205v1M615.5 205v1M616.5 205v1M617.5 206v1M618.5 206v1M619.5 207v1M620.5 207v1M621.5 208v1M622.5 209v1M623.5 209v1M624.5 210v1M625.5 210v1M626.5 211v1M627.5 212v1M628.5 213v1M629.5 213v1M630.5 214v1M631.5 215v1M632.5 216v1M633.5 217v1M634.5 218v1M635.5 219v1M636.5 220v1M637.5 220v1M638.5 221v1M639.5 222v1M640.5 223v1M641.5 224v1M642.5 225v2M643.5 227v1M644.5 228v1M645.5 229v1M646.5 230v1M647.5 231v2M648.5 233v1M649.5 234v1M650.5 235v1M651.5 236v1M652.5 237v1M653.5 237v1M654.5 238v1M655.5 239v1M656.5 240v1M657.5 240v1M658.5 241v1M659.5 242v1M660.5 242v1M661.5 243v1M662.5 243v1M663.5 243v1M664.5 244v1M665.5 244v1M666.5 244v1M667.5 244v1M668.5 244v1M669.5 244v1M670.5 244v1M671.5 244v1M672.5 244v1M673.5 243v1M674.5 243v1M675.5 243v1M676.5 242v1M677.5 242v1M678.5 241v1M679.5 241v1M680.5 240v1M681.5 239v1M682.5 239v1M683.5 238v1M684.5 237v1M685.5 236v1M686.5 235v1M687.5 234v1M688.5 233v1M689.5 232v1M690.5 230v2M691.5 229v1M692.5 228v1M693.5 227v1M694.5 226v1M695.5 224v2M696.5 223v1M697.5 223v1M698.5 222v1M699.5 221v1M700.5 220v1M701.5 219v1M702.5 218v1M703.5 217v1M704.5 216v1M705.5 215v1M706.5 214v1M707.5 214v1M708.5 213v1M709.5 212v1M710.5 211v1M711.5 211v1M712.5 210v1M713.5 209v1M714.5 209v1M715.5 208v1M716.5 208v1M717.5 207v1M718.5 206v1M719.5 206v1M720.5 206v1M721.5 205v1M722.5 205v1M723.5 204v1M724.5 204v1M725.5 204v1M726.5 204v1M727.5 203v1M728.5 203v1M729.5 203v1M730.5 203v1M731.5 203v1M732.5 203v1M733.5 203v1M734.5 203v1M735.5 203v1M736.5 203v1M737.5 203v1M738.5 203v1M739.5 203v1M740.5 203v1M741.5 203v1M742.5 204v1M743.5 204v1M744.5 204v1M745.5 205v1M746.5 205v1M747.5 205v1M748.5 206v1M749.5 206v1M750.5 207v1M751.5 207v1M752.5 208v1M753.5 208v1M754.5 209v1M755.5 210v1M756.5 210v1M757.5 211v1M758.5 212v1M759.5 212v1M760.5 213v1M761.5 214v1M762.5 215v1M763.5 216v1M764.5 217v1M765.5 217v1M766.5 218v1M767.5 219v1M768.5 220v1M769.5 221v1M770.5 222v1M771.5 223v1M772.5 224v1M773.5 225v1M774.5 226v2M775.5 228v1M776.5 229v1M777.5 230v1M778.5 231v1M779.5 232v1M780.5 233v1M781.5 234v1M782.5 235v1M783.5 236v1M784.5 237v1M785.5 238v1M786.5 239v1M787.5 240v1M788.5 240v1M789.5 241v1M790.5 241v1M791.5 242v1M792.5 242v1M793.5 243v1M794.5 243v1M795.5 243v1M796.5 244v1M797.5 244v1M798.5 244v1M799.5 244v1M800.5 244v1M801.5 244v1M802.5 244v1M803.5 244v1M804.5 243v1M805.5 243v1M806.5 243v1M807.5 242v1M808.5 242v1M809.5 241v1M810.5 241v1M811.5 240v1M812.5 240v1M813.5 239v1M814.5 238v1M815.5 237v1M816.5 236v1M817.5 235v1M818.5 234v1M819.5 233v1M820.5 232v1M821.5 231v1M822.5 230v1M823.5 228v2M824.5 227v1M825.5 226v1M826.5 225v1M827.5 224v1M828.5 223v1M829.5 222v1M830.5 221v1M831.5 220v1M832.5 219v1M833.5 218v1M834.5 217v1M835.5 216v1M836.5 216v1M837.5 215v1M838.5 214v1M839.5 213v1M840.5 212v1M841.5 212v1M842.5 211v1M843.5 210v1M844.5 210v1M845.5 209v1M846.5 208v1M847.5 208v1M848.5 207v1M849.5 207v1M850.5 206v1M851.5 206v1M852.5 205v1M853.5 205v1M854.5 205v1M855.5 204v1M856.5 204v1M857.5 204v1M858.5 203v1M859.5 203v1M860.5 203v1M861.5 203v1M862.5 203v1M863.5 203v1M864.5 203v1M865.5 203v1M866.5 203v1M867.5 203v1M868.5 203v1M869.5 203v1M870.5 203v1M871.5 203v1M872.5 203v1M873.5 204v1M874.5 204v1M875.5 204v1M876.5 204v1M877.5 205v1M878.5 205v1M879.5 206v1M880.5 206v1M881.5 207v1M882.5 207v1M883.5 208v1M884.5 208v1M885.5 209v1M886.5 209v1M887.5 210v1M888.5 211v1M889.5 211v1M890.5 212v1M891.5 213v1M892.5 214v1M893.5 215v1M894.5 215v1M895.5 216v1M896.5 217v1M897.5 218v1M898.5 219v1M899.5 220v1M900.5 221v1M901.5 222v1M902.5 223v1M903.5 224v1M904.5 225v1M905.5 226v1M906.5 227v1M907.5 228v2M908.5 230v1M909.5 231v1M910.5 232v1M911.5 233v1M912.5 234v1M913.5 235v1M914.5 236v1M915.5 237v1M916.5 238v1M917.5 239v1M918.5 239v1M919.5 240v1M920.5 241v1M921.5 241v1M922.5 242v1M923.5 242v1M924.5 243v1M925.5 243v1M926.5 243v1M927.5 244v1M928.5 244v1M929.5 244v1M930.5 244v1M931.5 244v1M932.5 244v1M933.5 244v1M934.5 244v1M935.5 244v1M936.5 243v1M937.5 243v1M938.5 243v1M939.5 242v1M940.5 242v1M941.5 241v1M942.5 240v1M943.5 240v1M944.5 239v1M945.5 238v1M946.5 237v1M947.5 237v1M948.5 236v1M949.5 235v1M950.5 233v2M951.5 232v1M952.5 231v1M953.5 230v1M954.5 229v1M955.5 228v1M956.5 226v2M957.5 225v1M958.5 224v1M959.5 223v1M960.5 222v1M961.5 221v1M962.5 220v1M963.5 219v1M964.5 219v1M571.5 218v1M572.5 217v1M573.5 217v1M574.5 216v1M575.5 215v1M576.5 215v1M577.5 214v1M578.5 213v1M579.5 213v1M580.5 212v1M581.5 211v1M582.5 211v1M583.5 210v1M584.5 210v1M585.5 209v1M586.5 209v1M587.5 208v1M588.5 208v1M589.5 208v1M590.5 207v1M591.5 207v1M592.5 207v1M593.5 207v1M594.5 206v1M595.5 206v1M596.5 206v1M597.5 206v1M598.5 206v1M599.5 206v1M600.5 205v1M601.5 205v1M602.5 205v1M603.5 205v1M604.5 205v1M605.5 205v1M606.5 206v1M607.5 206v1M608.5 206v1M609.5 206v1M610.5 206v1M611.5 206v1M612.5 207v1M613.5 207v1M614.5 207v1M615.5 207v1M616.5 208v1M617.5 208v1M618.5 209v1M619.5 209v1M620.5 209v1M621.5 210v1M622.5 210v1M623.5 211v1M624.5 212v1M625.5 212v1M626.5 213v1M627.5 213v1M628.5 214v1M629.5 215v1M630.5 215v1M631.5 216v1M632.5 217v1M633.5 218v1M634.5 218v1M635.5 219v1M636.5 220v1M637.5 221v1M638.5 222v1M639.5 223v1M640.5 223v1M641.5 224v1M642.5 225v1M643.5 226v1M644.5 227v1M645.5 228v1M646.5 229v1M647.5 230v1M648.5 231v1M649.5 232v1M650.5 233v1M651.5 233v1M652.5 234v1M653.5 235v1M654.5 236v1M655.5 236v1M656.5 237v1M657.5 237v1M658.5 238v1M659.5 238v1M660.5 238v1M661.5 239v1M662.5 239v1M663.5 239v1M664.5 240v1M665.5 240v1M666.5 240v1M667.5 240v1M668.5 240v1M669.5 240v1M670.5 240v1M671.5 240v1M672.5 240v1M673.5 239v1M674.5 239v1M675.5 239v1M676.5 238v1M677.5 238v1M678.5 238v1M679.5 237v1M680.5 237v1M681.5 236v1M682.5 235v1M683.5 235v1M684.5 234v1M685.5 233v1M686.5 233v1M687.5 232v1M688.5 231v1M689.5 230v1M690.5 229v1M691.5 228v1M692.5 227v1M693.5 226v1M694.5 225v1M695.5 224v1M696.5 223v1M697.5 222v1M698.5 222v1M699.5 221v1M700.5 220v1M701.5 219v1M702.5 218v1M703.5 218v1M704.5 217v1M705.5 216v1M706.5 215v1M707.5 215v1M708.5 214v1M709.5 213v1M710.5 213v1M711.5 212v1M712.5 212v1M713.5 211v1M714.5 210v1M715.5 210v1M716.5 209v1M717.5 209v1M718.5 209v1M719.5 208v1M720.5 208v1M721.5 207v1M722.5 207v1M723.5 207v1M724.5 207v1M725.5 206v1M726.5 206v1M727.5 206v1M728.5 206v1M729.5 206v1M730.5 206v1M731.5 205v1M732.5 205v1M733.5 205v1M734.5 205v1M735.5 205v1M736.5 205v1M737.5 206v1M738.5 206v1M739.5 206v1M740.5 206v1M741.5 206v1M742.5 206v1M743.5 207v1M744.5 207v1M745.5 207v1M746.5 207v1M747.5 208v1M748.5 208v1M749.5 208v1M750.5 209v1M751.5 209v1M752.5 210v1M753.5 210v1M754.5 211v1M755.5 211v1M756.5 212v1M757.5 213v1M758.5 213v1M759.5 214v1M760.5 215v1M761.5 215v1M762.5 216v1M763.5 217v1M764.5 217v1M765.5 218v1M766.5 219v1M767.5 220v1M768.5 221v1M769.5 221v1M770.5 222v1M771.5 223v1M772.5 224v1M773.5 225v1M774.5 226v1M775.5 227v1M776.5 228v1M777.5 229v1M778.5 230v1M779.5 231v1M780.5 231v1M781.5 232v1M782.5 233v1M783.5 234v1M784.5 235v1M785.5 235v1M786.5 236v1M787.5 237v1M788.5 237v1M789.5 238v1M790.5 238v1M791.5 238v1M792.5 239v1M793.5 239v1M794.5 239v1M795.5 239v1M796.5 240v1M797.5 240v1M798.5 240v1M799.5 240v1M800.5 240v1M801.5 240v1M802.5 240v1M803.5 240v1M804.5 239v1M805.5 239v1M806.5 239v1M807.5 239v1M808.5 238v1M809.5 238v1M810.5 237v1M811.5 237v1M812.5 236v1M813.5 236v1M814.5 235v1M815.5 234v1M816.5 234v1M817.5 233v1M818.5 232v1M819.5 231v1M820.5 230v1M821.5 229v1M822.5 228v1M823.5 227v1M824.5 226v1M825.5 226v1M826.5 225v1M827.5 224v1M828.5 223v1M829.5 222v1M830.5 221v1M831.5 220v1M832.5 219v1M833.5 219v1M834.5 218v1M835.5 217v1M836.5 216v1M837.5 216v1M838.5 215v1M839.5 214v1M840.5 214v1M841.5 213v1M842.5 212v1M843.5 212v1M844.5 211v1M845.5 211v1M846.5 210v1M847.5 210v1M848.5 209v1M849.5 209v1M850.5 208v1M851.5 208v1M852.5 208v1M853.5 207v1M854.5 207v1M855.5 207v1M856.5 206v1M857.5 206v1M858.5 206v1M859.5 206v1M860.5 206v1M861.5 206v1M862.5 206v1M863.5 205v1M864.5 205v1M865.5 205v1M866.5 205v1M867.5 205v1M868.5 206v1M869.5 206v1M870.5 206v1M871.5 206v1M872.5 206v1M873.5 206v1M874.5 206v1M875.5 207v1M876.5 207v1M877.5 207v1M878.5 208v1M879.5 208v1M880.5 208v1M881.5 209v1M882.5 209v1M883.5 210v1M884.5 210v1M885.5 211v1M886.5 211v1M887.5 212v1M888.5 212v1M889.5 213v1M890.5 214v1M891.5 214v1M892.5 215v1M893.5 216v1M894.5 216v1M895.5 217v1M896.5 218v1M897.5 219v1M898.5 220v1M899.5 220v1M900.5 221v1M901.5 222v1M902.5 223v1M903.5 224v1M904.5 225v1M905.5 226v1M906.5 227v1M907.5 228v1M908.5 228v1M909.5 229v1M910.5 230v1M911.5 231v1M912.5 232v1M913.5 233v1M914.5 234v1M915.5 234v1M916.5 235v1M917.5 236v1M918.5 236v1M919.5 237v1M920.5 237v1M921.5 238v1M922.5 238v1M923.5 239v1M924.5 239v1M925.5 239v1M926.5 239v1M927.5 240v1M928.5 240v1M929.5 240v1M930.5 240v1M931.5 240v1M932.5 240v1M933.5 240v1M934.5 240v1M935.5 239v1M936.5 239v1M937.5 239v1M938.5 239v1M939.5 238v1M940.5 238v1M941.5 238v1M942.5 237v1M943.5 236v1M944.5 236v1M945.5 235v1M946.5 235v1M947.5 234v1M948.5 233v1M949.5 232v1M950.5 231v1M951.5 231v1M952.5 230v1M953.5 229v1M954.5 228v1M955.5 227v1M956.5 226v1M957.5 225v1M958.5 224v1M959.5 223v1M960.5 222v1M961.5 221v1M962.5 221v1M963.5 220v1M964.5 219v1M571.5 219v1M572.5 218v1M573.5 217v1M574.5 217v1M575.5 216v1M576.5 216v1M577.5 215v1M578.5 214v1M579.5 214v1M580.5 213v1M581.5 213v1M582.5 212v1M583.5 212v1M584.5 212v1M585.5 211v1M586.5 211v1M587.5 210v1M588.5 210v1M589.5 210v1M590.5 209v1M591.5 209v1M592.5 209v1M593.5 209v1M594.5 209v1M595.5 208v1M596.5 208v1M597.5 208v1M598.5 208v1M599.5 208v1M600.5 208v1M601.5 208v1M602.5 208v1M603.5 208v1M604.5 208v1M605.5 208v1M606.5 208v1M607.5 208v1M608.5 208v1M609.5 208v1M610.5 209v1M611.5 209v1M612.5 209v1M613.5 209v1M614.5 209v1M615.5 210v1M616.5 210v1M617.5 210v1M618.5 211v1M619.5 211v1M620.5 211v1M621.5 212v1M622.5 212v1M623.5 213v1M624.5 213v1M625.5 214v1M626.5 214v1M627.5 215v1M628.5 215v1M629.5 216v1M630.5 217v1M631.5 217v1M632.5 218v1M633.5 218v1M634.5 219v1M635.5 220v1M636.5 221v1M637.5 221v1M638.5 222v1M639.5 223v1M640.5 223v1M641.5 224v1M642.5 225v1M643.5 226v1M644.5 227v1M645.5 227v1M646.5 228v1M647.5 229v1M648.5 230v1M649.5 230v1M650.5 231v1M651.5 232v1M652.5 232v1M653.5 233v1M654.5 233v1M655.5 234v1M656.5 234v1M657.5 235v1M658.5 235v1M659.5 235v1M660.5 236v1M661.5 236v1M662.5 236v1M663.5 236v1M664.5 236v1M665.5 237v1M666.5 237v1M667.5 237v1M668.5 237v1M669.5 237v1M670.5 237v1M671.5 237v1M672.5 236v1M673.5 236v1M674.5 236v1M675.5 236v1M676.5 236v1M677.5 235v1M678.5 235v1M679.5 235v1M680.5 234v1M681.5 234v1M682.5 233v1M683.5 233v1M684.5 232v1M685.5 231v1M686.5 231v1M687.5 230v1M688.5 229v1M689.5 229v1M690.5 228v1M691.5 227v1M692.5 226v1M693.5 226v1M694.5 225v1M695.5 224v1M696.5 223v1M697.5 222v1M698.5 222v1M699.5 221v1M700.5 220v1M701.5 220v1M702.5 219v1M703.5 218v1M704.5 218v1M705.5 217v1M706.5 216v1M707.5 216v1M708.5 215v1M709.5 215v1M710.5 214v1M711.5 214v1M712.5 213v1M713.5 213v1M714.5 212v1M715.5 212v1M716.5 211v1M717.5 211v1M718.5 211v1M719.5 210v1M720.5 210v1M721.5 210v1M722.5 209v1M723.5 209v1M724.5 209v1M725.5 209v1M726.5 208v1M727.5 208v1M728.5 208v1M729.5 208v1M730.5 208v1M731.5 208v1M732.5 208v1M733.5 208v1M734.5 208v1M735.5 208v1M736.5 208v1M737.5 208v1M738.5 208v1M739.5 208v1M740.5 208v1M741.5 208v1M742.5 209v1M743.5 209v1M744.5 209v1M745.5 209v1M746.5 210v1M747.5 210v1M748.5 210v1M749.5 211v1M750.5 211v1M751.5 211v1M752.5 212v1M753.5 212v1M754.5 213v1M755.5 213v1M756.5 214v1M757.5 214v1M758.5 215v1M759.5 215v1M760.5 216v1M761.5 216v1M762.5 217v1M763.5 218v1M764.5 218v1M765.5 219v1M766.5 220v1M767.5 220v1M768.5 221v1M769.5 222v1M770.5 222v1M771.5 223v1M772.5 224v1M773.5 225v1M774.5 226v1M775.5 226v1M776.5 227v1M777.5 228v1M778.5 229v1M779.5 229v1M780.5 230v1M781.5 231v1M782.5 231v1M783.5 232v1M784.5 233v1M785.5 233v1M786.5 234v1M787.5 234v1M788.5 235v1M789.5 235v1M790.5 235v1M791.5 236v1M792.5 236v1M793.5 236v1M794.5 236v1M795.5 236v1M796.5 237v1M797.5 237v1M798.5 237v1M799.5 237v1M800.5 237v1M801.5 237v1M802.5 237v1M803.5 237v1M804.5 236v1M805.5 236v1M806.5 236v1M807.5 236v1M808.5 235v1M809.5 235v1M810.5 235v1M811.5 234v1M812.5 234v1M813.5 233v1M814.5 233v1M815.5 232v1M816.5 232v1M817.5 231v1M818.5 230v1M819.5 230v1M820.5 229v1M821.5 228v1M822.5 227v1M823.5 227v1M824.5 226v1M825.5 225v1M826.5 224v1M827.5 223v1M828.5 223v1M829.5 222v1M830.5 221v1M831.5 221v1M832.5 220v1M833.5 219v1M834.5 219v1M835.5 218v1M836.5 217v1M837.5 217v1M838.5 216v1M839.5 215v1M840.5 215v1M841.5 214v1M842.5 214v1M843.5 213v1M844.5 213v1M845.5 212v1M846.5 212v1M847.5 211v1M848.5 211v1M849.5 211v1M850.5 210v1M851.5 210v1M852.5 210v1M853.5 209v1M854.5 209v1M855.5 209v1M856.5 209v1M857.5 209v1M858.5 208v1M859.5 208v1M860.5 208v1M861.5 208v1M862.5 208v1M863.5 208v1M864.5 208v1M865.5 208v1M866.5 208v1M867.5 208v1M868.5 208v1M869.5 208v1M870.5 208v1M871.5 208v1M872.5 208v1M873.5 209v1M874.5 209v1M875.5 209v1M876.5 209v1M877.5 209v1M878.5 210v1M879.5 210v1M880.5 210v1M881.5 211v1M882.5 211v1M883.5 212v1M884.5 212v1M885.5 212v1M886.5 213v1M887.5 213v1M888.5 214v1M889.5 214v1M890.5 215v1M891.5 216v1M892.5 216v1M893.5 217v1M894.5 217v1M895.5 218v1M896.5 219v1M897.5 219v1M898.5 220v1M899.5 221v1M900.5 222v1M901.5 222v1M902.5 223v1M903.5 224v1M904.5 224v1M905.5 225v1M906.5 226v1M907.5 227v1M908.5 228v1M909.5 228v1M910.5 229v1M911.5 230v1M912.5 231v1M913.5 231v1M914.5 232v1M915.5 232v1M916.5 233v1M917.5 234v1M918.5 234v1M919.5 234v1M920.5 235v1M921.5 235v1M922.5 235v1M923.5 236v1M924.5 236v1M925.5 236v1M926.5 236v1M927.5 237v1M928.5 237v1M929.5 237v1M930.5 237v1M931.5 237v1M932.5 237v1M933.5 237v1M934.5 237v1M935.5 236v1M936.5 236v1M937.5 236v1M938.5 236v1M939.5 235v1M940.5 235v1M941.5 235v1M942.5 234v1M943.5 234v1M944.5 234v1M945.5 233v1M946.5 232v1M947.5 232v1M948.5 231v1M949.5 231v1M950.5 230v1M951.5 229v1M952.5 228v1M953.5 228v1M954.5 227v1M955.5 226v1M956.5 225v1M957.5 224v1M958.5 224v1M959.5 223v1M960.5 222v1M961.5 222v1M962.5 221v1M963.5 220v1M964.5 219v1M571.5 219v1M572.5 219v1M573.5 218v1M574.5 217v1M575.5 217v1M576.5 216v1M577.5 216v1M578.5 215v1M579.5 215v1M580.5 214v1M581.5 214v1M582.5 214v1M583.5 213v1M584.5 213v1M585.5 213v1M586.5 212v1M587.5 212v1M588.5 212v1M589.5 211v1M590.5 211v1M591.5 211v1M592.5 211v1M593.5 211v1M594.5 210v1M595.5 210v1M596.5 210v1M597.5 210v1M598.5 210v1M599.5 210v1M600.5 210v1M601.5 210v1M602.5 210v1M603.5 210v1M604.5 210v1M605.5 210v1M606.5 210v1M607.5 210v1M608.5 210v1M609.5 210v1M610.5 210v1M611.5 211v1M612.5 211v1M613.5 211v1M614.5 211v1M615.5 211v1M616.5 212v1M617.5 212v1M618.5 212v1M619.5 213v1M620.5 213v1M621.5 213v1M622.5 214v1M623.5 214v1M624.5 214v1M625.5 215v1M626.5 215v1M627.5 216v1M628.5 216v1M629.5 217v1M630.5 217v1M631.5 218v1M632.5 219v1M633.5 219v1M634.5 220v1M635.5 220v1M636.5 221v1M637.5 222v1M638.5 222v1M639.5 223v1M640.5 223v1M641.5 224v1M642.5 225v1M643.5 225v1M644.5 226v1M645.5 227v1M646.5 227v1M647.5 228v1M648.5 229v1M649.5 229v1M650.5 230v1M651.5 230v1M652.5 231v1M653.5 231v1M654.5 232v1M655.5 232v1M656.5 232v1M657.5 233v1M658.5 233v1M659.5 233v1M660.5 233v1M661.5 234v1M662.5 234v1M663.5 234v1M664.5 234v1M665.5 234v1M666.5 234v1M667.5 234v1M668.5 234v1M669.5 234v1M670.5 234v1M671.5 234v1M672.5 234v1M673.5 234v1M674.5 234v1M675.5 234v1M676.5 233v1M677.5 233v1M678.5 233v1M679.5 232v1M680.5 232v1M681.5 232v1M682.5 231v1M683.5 231v1M684.5 230v1M685.5 230v1M686.5 229v1M687.5 229v1M688.5 228v1M689.5 228v1M690.5 227v1M691.5 226v1M692.5 226v1M693.5 225v1M694.5 224v1M695.5 224v1M696.5 223v1M697.5 222v1M698.5 222v1M699.5 221v1M700.5 221v1M701.5 220v1M702.5 219v1M703.5 219v1M704.5 218v1M705.5 218v1M706.5 217v1M707.5 217v1M708.5 216v1M709.5 216v1M710.5 215v1M711.5 215v1M712.5 214v1M713.5 214v1M714.5 213v1M715.5 213v1M716.5 213v1M717.5 212v1M718.5 212v1M719.5 212v1M720.5 212v1M721.5 211v1M722.5 211v1M723.5 211v1M724.5 211v1M725.5 211v1M726.5 210v1M727.5 210v1M728.5 210v1M729.5 210v1M730.5 210v1M731.5 210v1M732.5 210v1M733.5 210v1M734.5 210v1M735.5 210v1M736.5 210v1M737.5 210v1M738.5 210v1M739.5 210v1M740.5 210v1M741.5 210v1M742.5 211v1M743.5 211v1M744.5 211v1M745.5 211v1M746.5 211v1M747.5 212v1M748.5 212v1M749.5 212v1M750.5 212v1M751.5 213v1M752.5 213v1M753.5 214v1M754.5 214v1M755.5 214v1M756.5 215v1M757.5 215v1M758.5 216v1M759.5 216v1M760.5 217v1M761.5 217v1M762.5 218v1M763.5 218v1M764.5 219v1M765.5 220v1M766.5 220v1M767.5 221v1M768.5 221v1M769.5 222v1M770.5 223v1M771.5 223v1M772.5 224v1M773.5 225v1M774.5 225v1M775.5 226v1M776.5 227v1M777.5 227v1M778.5 228v1M779.5 228v1M780.5 229v1M781.5 230v1M782.5 230v1M783.5 231v1M784.5 231v1M785.5 231v1M786.5 232v1M787.5 232v1M788.5 233v1M789.5 233v1M790.5 233v1M791.5 233v1M792.5 234v1M793.5 234v1M794.5 234v1M795.5 234v1M796.5 234v1M797.5 234v1M798.5 234v1M799.5 234v1M800.5 234v1M801.5 234v1M802.5 234v1M803.5 234v1M804.5 234v1M805.5 234v1M806.5 234v1M807.5 233v1M808.5 233v1M809.5 233v1M810.5 233v1M811.5 232v1M812.5 232v1M813.5 231v1M814.5 231v1M815.5 231v1M816.5 230v1M817.5 230v1M818.5 229v1M819.5 228v1M820.5 228v1M821.5 227v1M822.5 227v1M823.5 226v1M824.5 225v1M825.5 225v1M826.5 224v1M827.5 223v1M828.5 223v1M829.5 222v1M830.5 221v1M831.5 221v1M832.5 220v1M833.5 220v1M834.5 219v1M835.5 218v1M836.5 218v1M837.5 217v1M838.5 217v1M839.5 216v1M840.5 216v1M841.5 215v1M842.5 215v1M843.5 214v1M844.5 214v1M845.5 214v1M846.5 213v1M847.5 213v1M848.5 212v1M849.5 212v1M850.5 212v1M851.5 212v1M852.5 211v1M853.5 211v1M854.5 211v1M855.5 211v1M856.5 211v1M857.5 210v1M858.5 210v1M859.5 210v1M860.5 210v1M861.5 210v1M862.5 210v1M863.5 210v1M864.5 210v1M865.5 210v1M866.5 210v1M867.5 210v1M868.5 210v1M869.5 210v1M870.5 210v1M871.5 210v1M872.5 210v1M873.5 211v1M874.5 211v1M875.5 211v1M876.5 211v1M877.5 211v1M878.5 212v1M879.5 212v1M880.5 212v1M881.5 212v1M882.5 213v1M883.5 213v1M884.5 213v1M885.5 214v1M886.5 214v1M887.5 215v1M888.5 215v1M889.5 216v1M890.5 216v1M891.5 217v1M892.5 217v1M893.5 218v1M894.5 218v1M895.5 219v1M896.5 219v1M897.5 220v1M898.5 221v1M899.5 221v1M900.5 222v1M901.5 222v1M902.5 223v1M903.5 224v1M904.5 224v1M905.5 225v1M906.5 226v1M907.5 226v1M908.5 227v1M909.5 228v1M910.5 228v1M911.5 229v1M912.5 229v1M913.5 230v1M914.5 230v1M915.5 231v1M916.5 231v1M917.5 232v1M918.5 232v1M919.5 232v1M920.5 233v1M921.5 233v1M922.5 233v1M923.5 234v1M924.5 234v1M925.5 234v1M926.5 234v1M927.5 234v1M928.5 234v1M929.5 234v1M930.5 234v1M931.5 234v1M932.5 234v1M933.5 234v1M934.5 234v1M935.5 234v1M936.5 234v1M937.5 234v1M938.5 233v1M939.5 233v1M940.5 233v1M941.5 233v1M942.5 232v1M943.5 232v1M944.5 232v1M945.5 231v1M946.5 231v1M947.5 230v1M948.5 230v1M949.5 229v1M950.5 229v1M951.5 228v1M952.5 227v1M953.5 227v1M954.5 226v1M955.5 226v1M956.5 225v1M957.5 224v1M958.5 224v1M959.5 223v1M960.5 222v1M961.5 222v1M962.5 221v1M963.5 220v1M964.5 220v1" stroke="#00ff00" stroke-width="1" fill="none" shape-rendering="crispEdges"/><path d="M571.5 257v3M572.5 260v2M573.5 262v3M574.5 265v2M575.5 267v3M576.5 270v2M577.5 272v2M578.5 274v2M579.5 276v2M580.5 278v2M581.5 280v2M582.5 282v2M583.5 284v1M584.5 285v2M585.5 287v1M586.5 288v1M587.5 289v2M588.5 291v1M589.5 292v1M590.5 293v1M591.5 294v1M592.5 294v1M593.5 295v1M594.5 296v1M595.5 296v1M596.5 297v1M597.5 297v1M598.5 298v1M599.5 298v1M600.5 298v1M601.5 298v1M602.5 298v1M603.5 298v1M604.5 298v1M605.5 298v1M606.5 298v1M607.5 298v1M608.5 298v1M609.5 297v1M610.5 297v1M611.5 296v1M612.5 295v1M613.5 295v1M614.5 294v1M615.5 293v1M616.5 292v1M617.5 291v1M618.5 289v2M619.5 288v1M620.5 287v1M621.5 285v2M622.5 283v2M623.5 282v1M624.5 280v2M625.5 278v2M626.5 276v2M627.5 273v3M628.5 271v2M629.5 269v2M630.5 266v3M631.5 264v2M632.5 261v3M633.5 259v2M634.5 256v3M635.5 253v3M636.5 251v2M637.5 248v3M638.5 245v3M639.5 242v3M640.5 238v4M641.5 234v4M642.5 230v4M643.5 225v5M644.5 221v4M645.5 217v4M646.5 213v4M647.5 209v4M648.5 205v4M649.5 201v4M650.5 197v4M651.5 193v4M652.5 189v4M653.5 185v4M654.5 182v3M655.5 178v4M656.5 175v3M657.5 172v3M658.5 169v3M659.5 167v2M660.5 164v3M661.5 162v2M662.5 160v2M663.5 159v1M664.5 158v1M665.5 157v1M666.5 156v1M667.5 155v1M668.5 155v1M669.5 155v1M670.5 155v1M671.5 156v1M672.5 157v1M673.5 158v2M674.5 160v2M675.5 162v2M676.5 164v3M677.5 167v2M678.5 169v3M679.5 172v3M680.5 175v4M681.5 179v3M682.5 182v4M683.5 186v3M684.5 189v4M685.5 193v4M686.5 197v4M687.5 201v4M688.5 205v4M689.5 209v5M690.5 214v4M691.5 218v4M692.5 222v4M693.5 226v4M694.5 230v5M695.5 235v4M696.5 239v3M697.5 242v3M698.5 245v3M699.5 248v3M700.5 251v2M701.5 253v3M702.5 256v3M703.5 259v2M704.5 261v3M705.5 264v2M706.5 266v3M707.5 269v2M708.5 271v2M709.5 273v2M710.5 275v2M711.5 277v2M712.5 279v2M713.5 281v2M714.5 283v2M715.5 285v1M716.5 286v2M717.5 288v1M718.5 289v1M719.5 290v1M720.5 291v1M721.5 292v1M722.5 293v1M723.5 294v1M724.5 295v1M725.5 296v1M726.5 296v1M727.5 297v1M728.5 297v1M729.5 298v1M730.5 298v1M731.5 298v1M732.5 298v1M733.5 298v1M734.5 298v1M735.5 298v1M736.5 298v1M737.5 298v1M738.5 298v1M739.5 298v1M740.5 297v1M741.5 297v1M742.5 296v1M743.5 296v1M744.5 295v1M745.5 294v1M746.5 293v1M747.5 292v1M748.5 291v1M749.5 290v1M750.5 289v1M751.5 287v2M752.5 286v1M753.5 284v2M754.5 282v2M755.5 280v2M756.5 278v2M757.5 276v2M758.5 274v2M759.5 272v2M760.5 270v2M761.5 267v3M762.5 265v2M763.5 262v3M764.5 260v2M765.5 257v3M766.5 254v3M767.5 251v3M768.5 249v2M769.5 246v3M770.5 243v3M771.5 240v3M772.5 235v5M773.5 231v4M774.5 227v4M775.5 223v4M776.5 218v5M777.5 214v4M778.5 210v4M779.5 206v4M780.5 202v4M781.5 198v4M782.5 194v4M783.5 190v4M784.5 187v3M785.5 183v4M786.5 179v4M787.5 176v3M788.5 173v3M789.5 170v3M790.5 167v3M791.5 165v2M792.5 163v2M793.5 161v2M794.5 159v2M795.5 158v1M796.5 157v1M797.5 156v1M798.5 155v1M799.5 155v1M800.5 155v1M801.5 155v1M802.5 156v1M803.5 157v1M804.5 158v1M805.5 159v2M806.5 161v2M807.5 163v3M808.5 166v2M809.5 168v3M810.5 171v3M811.5 174v4M812.5 178v3M813.5 181v4M814.5 185v3M815.5 188v4M816.5 192v4M817.5 196v4M818.5 200v4M819.5 204v4M820.5 208v4M821.5 212v4M822.5 216v5M823.5 221v4M824.5 225v4M825.5 229v4M826.5 233v4M827.5 237v4M828.5 241v3M829.5 244v3M830.5 247v3M831.5 250v2M832.5 252v3M833.5 255v3M834.5 258v2M835.5 260v3M836.5 263v3M837.5 266v2M838.5 268v2M839.5 270v3M840.5 273v2M841.5 275v2M842.5 277v2M843.5 279v2M844.5 281v1M845.5 282v2M846.5 284v2M847.5 286v1M848.5 287v2M849.5 289v1M850.5 290v1M851.5 291v1M852.5 292v1M853.5 293v1M854.5 294v1M855.5 295v1M856.5 295v1M857.5 296v1M858.5 297v1M859.5 297v1M860.5 298v1M861.5 298v1M862.5 298v1M863.5 298v1M864.5 298v1M865.5 298v1M866.5 298v1M867.5 298v1M868.5 298v1M869.5 298v1M870.5 298v1M871.5 297v1M872.5 297v1M873.5 296v1M874.5 296v1M875.5 295v1M876.5 294v1M877.5 294v1M878.5 293v1M879.5 292v1M880.5 290v2M881.5 289v1M882.5 288v1M883.5 286v2M884.5 284v2M885.5 283v1M886.5 281v2M887.5 279v2M888.5 277v2M889.5 275v2M890.5 273v2M891.5 270v3M892.5 268v2M893.5 266v2M894.5 263v3M895.5 260v3M896.5 258v2M897.5 255v3M898.5 252v3M899.5 250v2M900.5 247v3M901.5 244v3M902.5 241v3M903.5 237v4M904.5 232v5M905.5 228v4M906.5 224v4M907.5 220v4M908.5 216v4M909.5 211v5M910.5 207v4M911.5 203v4M912.5 199v4M913.5 195v4M914.5 191v4M915.5 188v3M916.5 184v4M917.5 181v3M918.5 177v4M919.5 174v3M920.5 171v3M921.5 168v3M922.5 166v2M923.5 163v3M924.5 161v2M925.5 160v1M926.5 158v2M927.5 157v1M928.5 156v1M929.5 155v1M930.5 155v1M931.5 155v1M932.5 155v1M933.5 155v1M934.5 156v1M935.5 157v2M936.5 159v2M937.5 161v2M938.5 163v2M939.5 165v3M940.5 168v2M941.5 170v3M942.5 173v3M943.5 176v4M944.5 180v3M945.5 183v4M946.5 187v4M947.5 191v4M948.5 195v4M949.5 199v4M950.5 203v4M951.5 207v4M952.5 211v4M953.5 215v4M954.5 219v4M955.5 223v5M956.5 228v4M957.5 232v4M958.5 236v4M959.5 240v3M960.5 243v3M961.5 246v3M962.5 249v3M963.5 252v2M964.5 254v3M571.5 256v3M572.5 259v2M573.5 261v3M574.5 264v2M575.5 266v3M576.5 269v2M577.5 271v2M578.5 273v2M579.5 275v2M580.5 277v2M581.5 279v2M582.5 281v1M583.5 282v2M584.5 284v1M585.5 285v2M586.5 287v1M587.5 288v1M588.5 289v2M589.5 291v1M590.5 292v1M591.5 293v1M592.5 293v1M593.5 294v1M594.5 295v1M595.5 295v1M596.5 296v1M597.5 296v1M598.5 297v1M599.5 297v1M600.5 297v1M601.5 297v1M602.5 297v1M603.5 297v1M604.5 297v1M605.5 297v1M606.5 297v1M607.5 297v1M608.5 296v1M609.5 296v1M610.5 296v1M611.5 295v1M612.5 294v1M613.5 294v1M614.5 293v1M615.5 292v1M616.5 291v1M617.5 290v1M618.5 288v2M619.5 287v1M620.5 285v2M621.5 284v1M622.5 282v2M623.5 280v2M624.5 279v1M625.5 277v2M626.5 275v2M627.5 272v3M628.5 270v2M629.5 268v2M630.5 266v2M631.5 263v3M632.5 261v2M633.5 258v3M634.5 256v2M635.5 253v3M636.5 250v3M637.5 247v3M638.5 245v2M639.5 242v3M640.5 238v4M641.5 234v4M642.5 230v4M643.5 226v4M644.5 222v4M645.5 218v4M646.5 214v4M647.5 210v4M648.5 206v4M649.5 202v4M650.5 198v4M651.5 195v3M652.5 191v4M653.5 188v3M654.5 184v4M655.5 181v3M656.5 178v3M657.5 175v3M658.5 172v3M659.5 170v2M660.5 167v3M661.5 165v2M662.5 164v1M663.5 162v2M664.5 161v1M665.5 160v1M666.5 159v1M667.5 159v1M668.5 158v1M669.5 158v1M670.5 159v1M671.5 159v1M672.5 160v2M673.5 162v1M674.5 163v2M675.5 165v2M676.5 167v3M677.5 170v2M678.5 172v3M679.5 175v3M680.5 178v3M681.5 181v4M682.5 185v3M683.5 188v4M684.5 192v3M685.5 195v4M686.5 199v4M687.5 203v4M688.5 207v4M689.5 211v4M690.5 215v4M691.5 219v4M692.5 223v4M693.5 227v4M694.5 231v4M695.5 235v4M696.5 239v3M697.5 242v3M698.5 245v3M699.5 248v2M700.5 250v3M701.5 253v3M702.5 256v2M703.5 258v3M704.5 261v2M705.5 263v3M706.5 266v2M707.5 268v2M708.5 270v2M709.5 272v2M710.5 274v2M711.5 276v2M712.5 278v2M713.5 280v2M714.5 282v1M715.5 283v2M716.5 285v1M717.5 286v2M718.5 288v1M719.5 289v1M720.5 290v1M721.5 291v1M722.5 292v1M723.5 293v1M724.5 294v1M725.5 295v1M726.5 295v1M727.5 296v1M728.5 296v1M729.5 297v1M730.5 297v1M731.5 297v1M732.5 297v1M733.5 297v1M734.5 297v1M735.5 297v1M736.5 297v1M737.5 297v1M738.5 297v1M739.5 297v1M740.5 296v1M741.5 296v1M742.5 295v1M743.5 295v1M744.5 294v1M745.5 293v1M746.5 292v1M747.5 291v1M748.5 290v1M749.5 289v1M750.5 287v2M751.5 286v1M752.5 284v2M753.5 283v1M754.5 281v2M755.5 279v2M756.5 277v2M757.5 275v2M758.5 273v2M759.5 271v2M760.5 269v2M761.5 266v3M762.5 264v2M763.5 261v3M764.5 259v2M765.5 256v3M766.5 254v2M767.5 251v3M768.5 248v3M769.5 246v2M770.5 243v3M771.5 240v3M772.5 236v4M773.5 231v5M774.5 227v4M775.5 223v4M776.5 219v4M777.5 215v4M778.5 211v4M779.5 207v4M780.5 204v3M781.5 200v4M782.5 196v4M783.5 192v4M784.5 189v3M785.5 185v4M786.5 182v3M787.5 179v3M788.5 176v3M789.5 173v3M790.5 170v3M791.5 168v2M792.5 166v2M793.5 164v2M794.5 163v1M795.5 161v2M796.5 160v1M797.5 159v1M798.5 159v1M799.5 158v1M800.5 158v1M801.5 159v1M802.5 159v1M803.5 160v1M804.5 161v2M805.5 163v2M806.5 165v2M807.5 167v2M808.5 169v2M809.5 171v3M810.5 174v3M811.5 177v3M812.5 180v3M813.5 183v4M814.5 187v3M815.5 190v4M816.5 194v4M817.5 198v4M818.5 202v3M819.5 205v4M820.5 209v4M821.5 213v4M822.5 217v4M823.5 221v4M824.5 225v4M825.5 229v4M826.5 233v5M827.5 238v3M828.5 241v3M829.5 244v3M830.5 247v2M831.5 249v3M832.5 252v3M833.5 255v2M834.5 257v3M835.5 260v2M836.5 262v3M837.5 265v2M838.5 267v2M839.5 269v3M840.5 272v2M841.5 274v2M842.5 276v2M843.5 278v2M844.5 280v1M845.5 281v2M846.5 283v2M847.5 285v1M848.5 286v1M849.5 287v2M850.5 289v1M851.5 290v1M852.5 291v1M853.5 292v1M854.5 293v1M855.5 294v1M856.5 294v1M857.5 295v1M858.5 296v1M859.5 296v1M860.5 297v1M861.5 297v1M862.5 297v1M863.5 297v1M864.5 297v1M865.5 297v1M866.5 297v1M867.5 297v1M868.5 297v1M869.5 297v1M870.5 297v1M871.5 296v1M872.5 296v1M873.5 295v1M874.5 295v1M875.5 294v1M876.5 293v1M877.5 292v1M878.5 291v1M879.5 290v1M880.5 289v1M881.5 288v1M882.5 286v2M883.5 285v1M884.5 283v2M885.5 282v1M886.5 280v2M887.5 278v2M888.5 276v2M889.5 274v2M890.5 272v2M891.5 269v3M892.5 267v2M893.5 265v2M894.5 262v3M895.5 260v2M896.5 257v3M897.5 255v2M898.5 252v3M899.5 249v3M900.5 247v2M901.5 244v3M902.5 241v3M903.5 237v4M904.5 233v4M905.5 229v4M906.5 225v4M907.5 221v4M908.5 217v4M909.5 213v4M910.5 209v4M911.5 205v4M912.5 201v4M913.5 197v4M914.5 194v3M915.5 190v4M916.5 186v4M917.5 183v3M918.5 180v3M919.5 177v3M920.5 174v3M921.5 171v3M922.5 169v2M923.5 167v2M924.5 165v2M925.5 163v2M926.5 162v1M927.5 161v1M928.5 160v1M929.5 159v1M930.5 158v1M931.5 158v1M932.5 158v1M933.5 159v1M934.5 160v1M935.5 161v1M936.5 162v2M937.5 164v2M938.5 166v2M939.5 168v2M940.5 170v3M941.5 173v3M942.5 176v3M943.5 179v3M944.5 182v4M945.5 186v3M946.5 189v4M947.5 193v4M948.5 197v3M949.5 200v4M950.5 204v4M951.5 208v4M952.5 212v4M953.5 216v4M954.5 220v4M955.5 224v4M956.5 228v4M957.5 232v4M958.5 236v4M959.5 240v3M960.5 243v3M961.5 246v2M962.5 248v3M963.5 251v3M964.5 254v2M571.5 256v2M572.5 258v3M573.5 261v2M574.5 263v2M575.5 265v3M576.5 268v2M577.5 270v2M578.5 272v2M579.5 274v2M580.5 276v2M581.5 278v2M582.5 280v1M583.5 281v2M584.5 283v1M585.5 284v2M586.5 286v1M587.5 287v1M588.5 288v1M589.5 289v1M590.5 290v1M591.5 291v1M592.5 292v1M593.5 293v1M594.5 294v1M595.5 294v1M596.5 295v1M597.5 295v1M598.5 296v1M599.5 296v1M600.5 296v1M601.5 296v1M602.5 296v1M603.5 296v1M604.5 296v1M605.5 296v1M606.5 296v1M607.5 296v1M608.5 295v1M609.5 295v1M610.5 294v1M611.5 294v1M612.5 293v1M613.5 292v1M614.5 292v1M615.5 291v1M616.5 290v1M617.5 288v2M618.5 287v1M619.5 286v1M620.5 284v2M621.5 283v1M622.5 281v2M623.5 279v2M624.5 277v2M625.5 276v1M626.5 274v2M627.5 271v3M628.5 269v2M629.5 267v2M630.5 265v2M631.5 262v3M632.5 260v2M633.5 258v2M634.5 255v3M635.5 252v3M636.5 250v2M637.5 247v3M638.5 245v2M639.5 242v3M640.5 238v4M641.5 234v4M642.5 231v3M643.5 227v4M644.5 223v4M645.5 219v4M646.5 215v4M647.5 211v4M648.5 208v3M649.5 204v4M650.5 200v4M651.5 197v3M652.5 193v4M653.5 190v3M654.5 186v4M655.5 183v3M656.5 180v3M657.5 177v3M658.5 175v2M659.5 172v3M660.5 170v2M661.5 168v2M662.5 167v1M663.5 165v2M664.5 164v1M665.5 163v1M666.5 162v1M667.5 162v1M668.5 161v1M669.5 161v1M670.5 162v1M671.5 163v1M672.5 163v2M673.5 165v1M674.5 166v2M675.5 168v2M676.5 170v2M677.5 172v3M678.5 175v3M679.5 178v2M680.5 180v3M681.5 183v4M682.5 187v3M683.5 190v3M684.5 193v4M685.5 197v4M686.5 201v3M687.5 204v4M688.5 208v4M689.5 212v4M690.5 216v3M691.5 219v4M692.5 223v4M693.5 227v4M694.5 231v4M695.5 235v4M696.5 239v3M697.5 242v3M698.5 245v2M699.5 247v3M700.5 250v3M701.5 253v2M702.5 255v3M703.5 258v2M704.5 260v2M705.5 262v3M706.5 265v2M707.5 267v2M708.5 269v2M709.5 271v2M710.5 273v2M711.5 275v2M712.5 277v2M713.5 279v2M714.5 281v1M715.5 282v2M716.5 284v1M717.5 285v2M718.5 287v1M719.5 288v1M720.5 289v1M721.5 290v1M722.5 291v1M723.5 292v1M724.5 293v1M725.5 293v1M726.5 294v1M727.5 295v1M728.5 295v1M729.5 296v1M730.5 296v1M731.5 296v1M732.5 296v1M733.5 296v1M734.5 296v1M735.5 296v1M736.5 296v1M737.5 296v1M738.5 296v1M739.5 296v1M740.5 295v1M741.5 295v1M742.5 294v1M743.5 293v1M744.5 293v1M745.5 292v1M746.5 291v1M747.5 290v1M748.5 289v1M749.5 288v1M750.5 286v2M751.5 285v1M752.5 283v2M753.5 282v1M754.5 280v2M755.5 278v2M756.5 276v2M757.5 274v2M758.5 272v2M759.5 270v2M760.5 268v2M761.5 266v2M762.5 263v3M763.5 261v2M764.5 258v3M765.5 256v2M766.5 253v3M767.5 251v2M768.5 248v3M769.5 246v2M770.5 243v3M771.5 240v3M772.5 236v4M773.5 232v4M774.5 228v4M775.5 224v4M776.5 220v4M777.5 216v4M778.5 213v3M779.5 209v4M780.5 205v4M781.5 201v4M782.5 198v3M783.5 194v4M784.5 191v3M785.5 187v4M786.5 184v3M787.5 181v3M788.5 178v3M789.5 176v2M790.5 173v3M791.5 171v2M792.5 169v2M793.5 167v2M794.5 166v1M795.5 164v2M796.5 163v1M797.5 162v1M798.5 162v1M799.5 161v1M800.5 161v1M801.5 162v1M802.5 162v1M803.5 163v1M804.5 164v2M805.5 166v1M806.5 167v2M807.5 169v3M808.5 172v2M809.5 174v3M810.5 177v2M811.5 179v3M812.5 182v4M813.5 186v3M814.5 189v3M815.5 192v4M816.5 196v3M817.5 199v4M818.5 203v4M819.5 207v4M820.5 211v3M821.5 214v4M822.5 218v4M823.5 222v4M824.5 226v4M825.5 230v4M826.5 234v4M827.5 238v3M828.5 241v3M829.5 244v2M830.5 246v3M831.5 249v3M832.5 252v2M833.5 254v3M834.5 257v2M835.5 259v3M836.5 262v2M837.5 264v2M838.5 266v2M839.5 268v3M840.5 271v2M841.5 273v2M842.5 275v2M843.5 277v1M844.5 278v2M845.5 280v2M846.5 282v1M847.5 283v2M848.5 285v1M849.5 286v1M850.5 287v2M851.5 289v1M852.5 290v1M853.5 291v1M854.5 292v1M855.5 293v1M856.5 293v1M857.5 294v1M858.5 295v1M859.5 295v1M860.5 295v1M861.5 296v1M862.5 296v1M863.5 296v1M864.5 296v1M865.5 296v1M866.5 296v1M867.5 296v1M868.5 296v1M869.5 296v1M870.5 296v1M871.5 295v1M872.5 295v1M873.5 294v1M874.5 294v1M875.5 293v1M876.5 292v1M877.5 291v1M878.5 290v1M879.5 289v1M880.5 288v1M881.5 287v1M882.5 285v2M883.5 284v1M884.5 282v2M885.5 280v2M886.5 279v1M887.5 277v2M888.5 275v2M889.5 273v2M890.5 271v2M891.5 269v2M892.5 266v3M893.5 264v2M894.5 262v2M895.5 259v3M896.5 257v2M897.5 254v3M898.5 252v2M899.5 249v3M900.5 246v3M901.5 244v2M902.5 241v3M903.5 237v4M904.5 233v4M905.5 229v4M906.5 225v4M907.5 221v4M908.5 218v3M909.5 214v4M910.5 210v4M911.5 206v4M912.5 203v3M913.5 199v4M914.5 195v4M915.5 192v3M916.5 189v3M917.5 185v4M918.5 182v3M919.5 179v3M920.5 177v2M921.5 174v3M922.5 172v2M923.5 170v2M924.5 168v2M925.5 166v2M926.5 165v1M927.5 164v1M928.5 163v1M929.5 162v1M930.5 162v1M931.5 161v1M932.5 162v1M933.5 162v1M934.5 163v1M935.5 164v1M936.5 165v2M937.5 167v2M938.5 169v2M939.5 171v2M940.5 173v3M941.5 176v3M942.5 179v2M943.5 181v4M944.5 185v3M945.5 188v3M946.5 191v4M947.5 195v3M948.5 198v4M949.5 202v4M950.5 206v3M951.5 209v4M952.5 213v4M953.5 217v4M954.5 221v4M955.5 225v4M956.5 229v3M957.5 232v4M958.5 236v4M959.5 240v3M960.5 243v3M961.5 246v2M962.5 248v3M963.5 251v2M964.5 253v3M571.5 255v3M572.5 258v2M573.5 260v2M574.5 262v3M575.5 265v2M576.5 267v2M577.5 269v2M578.5 271v2M579.5 273v2M580.5 275v2M581.5 277v1M582.5 278v2M583.5 280v2M584.5 282v1M585.5 283v2M586.5 285v1M587.5 286v1M588.5 287v1M589.5 288v1M590.5 289v1M591.5 290v1M592.5 291v1M593.5 292v1M594.5 293v1M595.5 293v1M596.5 294v1M597.5 294v1M598.5 295v1M599.5 295v1M600.5 295v1M601.5 295v1M602.5 295v1M603.5 295v1M604.5 295v1M605.5 295v1M606.5 295v1M607.5 295v1M608.5 294v1M609.5 294v1M610.5 293v1M611.5 293v1M612.5 292v1M613.5 291v1M614.5 291v1M615.5 290v1M616.5 288v2M617.5 287v1M618.5 286v1M619.5 285v1M620.5 283v2M621.5 282v1M622.5 280v2M623.5 278v2M624.5 276v2M625.5 275v1M626.5 273v2M627.5 271v2M628.5 268v3M629.5 266v2M630.5 264v2M631.5 262v2M632.5 259v3M633.5 257v2M634.5 255v2M635.5 252v3M636.5 250v2M637.5 247v3M638.5 245v2M639.5 242v3M640.5 239v3M641.5 235v4M642.5 231v4M643.5 227v4M644.5 224v3M645.5 220v4M646.5 216v4M647.5 213v3M648.5 209v4M649.5 206v3M650.5 202v4M651.5 199v3M652.5 196v3M653.5 192v4M654.5 189v3M655.5 186v3M656.5 183v3M657.5 181v2M658.5 178v3M659.5 176v2M660.5 174v2M661.5 172v2M662.5 170v2M663.5 169v1M664.5 168v1M665.5 167v1M666.5 166v1M667.5 166v1M668.5 166v1M669.5 166v1M670.5 166v1M671.5 167v1M672.5 167v2M673.5 169v1M674.5 170v2M675.5 172v2M676.5 174v2M677.5 176v2M678.5 178v3M679.5 181v3M680.5 184v2M681.5 186v3M682.5 189v4M683.5 193v3M684.5 196v3M685.5 199v4M686.5 203v3M687.5 206v4M688.5 210v3M689.5 213v4M690.5 217v4M691.5 221v3M692.5 224v4M693.5 228v4M694.5 232v3M695.5 235v4M696.5 239v3M697.5 242v3M698.5 245v2M699.5 247v3M700.5 250v2M701.5 252v3M702.5 255v2M703.5 257v2M704.5 259v3M705.5 262v2M706.5 264v2M707.5 266v2M708.5 268v2M709.5 270v2M710.5 272v2M711.5 274v2M712.5 276v2M713.5 278v2M714.5 280v1M715.5 281v2M716.5 283v1M717.5 284v1M718.5 285v2M719.5 287v1M720.5 288v1M721.5 289v1M722.5 290v1M723.5 291v1M724.5 292v1M725.5 292v1M726.5 293v1M727.5 294v1M728.5 294v1M729.5 295v1M730.5 295v1M731.5 295v1M732.5 295v1M733.5 295v1M734.5 295v1M735.5 295v1M736.5 295v1M737.5 295v1M738.5 295v1M739.5 295v1M740.5 294v1M741.5 294v1M742.5 293v1M743.5 292v1M744.5 292v1M745.5 291v1M746.5 290v1M747.5 289v1M748.5 288v1M749.5 286v2M750.5 285v1M751.5 284v1M752.5 282v2M753.5 280v2M754.5 279v1M755.5 277v2M756.5 275v2M757.5 273v2M758.5 271v2M759.5 269v2M760.5 267v2M761.5 265v2M762.5 263v2M763.5 260v3M764.5 258v2M765.5 255v3M766.5 253v2M767.5 250v3M768.5 248v2M769.5 245v3M770.5 243v2M771.5 240v3M772.5 236v4M773.5 232v4M774.5 229v3M775.5 225v4M776.5 221v4M777.5 218v3M778.5 214v4M779.5 210v4M780.5 207v3M781.5 203v4M782.5 200v3M783.5 197v3M784.5 193v4M785.5 190v3M786.5 187v3M787.5 184v3M788.5 182v2M789.5 179v3M790.5 177v2M791.5 175v2M792.5 173v2M793.5 171v2M794.5 170v1M795.5 168v2M796.5 167v1M797.5 166v1M798.5 166v1M799.5 166v1M800.5 166v1M801.5 166v1M802.5 166v1M803.5 167v1M804.5 168v2M805.5 170v1M806.5 171v2M807.5 173v2M808.5 175v2M809.5 177v3M810.5 180v3M811.5 183v2M812.5 185v3M813.5 188v4M814.5 192v3M815.5 195v3M816.5 198v4M817.5 202v3M818.5 205v4M819.5 209v3M820.5 212v4M821.5 216v3M822.5 219v4M823.5 223v4M824.5 227v3M825.5 230v4M826.5 234v4M827.5 238v3M828.5 241v3M829.5 244v2M830.5 246v3M831.5 249v2M832.5 251v3M833.5 254v2M834.5 256v3M835.5 259v2M836.5 261v2M837.5 263v2M838.5 265v3M839.5 268v2M840.5 270v2M841.5 272v2M842.5 274v2M843.5 276v1M844.5 277v2M845.5 279v2M846.5 281v1M847.5 282v2M848.5 284v1M849.5 285v1M850.5 286v2M851.5 288v1M852.5 289v1M853.5 290v1M854.5 291v1M855.5 291v1M856.5 292v1M857.5 293v1M858.5 293v1M859.5 294v1M860.5 294v1M861.5 295v1M862.5 295v1M863.5 295v1M864.5 295v1M865.5 295v1M866.5 295v1M867.5 295v1M868.5 295v1M869.5 295v1M870.5 295v1M871.5 294v1M872.5 294v1M873.5 293v1M874.5 293v1M875.5 292v1M876.5 291v1M877.5 290v1M878.5 289v1M879.5 288v1M880.5 287v1M881.5 285v2M882.5 284v1M883.5 283v1M884.5 281v2M885.5 279v2M886.5 278v1M887.5 276v2M888.5 274v2M889.5 272v2M890.5 270v2M891.5 268v2M892.5 266v2M893.5 263v3M894.5 261v2M895.5 259v2M896.5 256v3M897.5 254v2M898.5 251v3M899.5 249v2M900.5 246v3M901.5 244v2M902.5 241v3M903.5 237v4M904.5 234v3M905.5 230v4M906.5 226v4M907.5 223v3M908.5 219v4M909.5 215v4M910.5 212v3M911.5 208v4M912.5 205v3M913.5 201v4M914.5 198v3M915.5 194v4M916.5 191v3M917.5 188v3M918.5 185v3M919.5 183v2M920.5 180v3M921.5 177v3M922.5 175v2M923.5 173v2M924.5 172v1M925.5 170v2M926.5 169v1M927.5 168v1M928.5 167v1M929.5 166v1M930.5 166v1M931.5 166v1M932.5 166v1M933.5 166v1M934.5 167v1M935.5 168v1M936.5 169v2M937.5 171v1M938.5 172v2M939.5 174v3M940.5 177v2M941.5 179v3M942.5 182v3M943.5 185v2M944.5 187v4M945.5 191v3M946.5 194v3M947.5 197v3M948.5 200v4M949.5 204v3M950.5 207v4M951.5 211v4M952.5 215v3M953.5 218v4M954.5 222v3M955.5 225v4M956.5 229v4M957.5 233v4M958.5 237v3M959.5 240v3M960.5 243v2M961.5 245v3M962.5 248v2M963.5 250v3M964.5 253v2M571.5 255v2M572.5 257v2M573.5 259v3M574.5 262v2M575.5 264v2M576.5 266v2M577.5 268v2M578.5 270v2M579.5 272v2M580.5 274v2M581.5 276v1M582.5 277v2M583.5 279v2M584.5 281v1M585.5 282v1M586.5 283v2M587.5 285v1M588.5 286v1M589.5 287v1M590.5 288v1M591.5 289v1M592.5 290v1M593.5 291v1M594.5 292v1M595.5 292v1M596.5 293v1M597.5 293v1M598.5 294v1M599.5 294v1M600.5 294v1M601.5 294v1M602.5 294v1M603.5 294v1M604.5 294v1M605.5 294v1M606.5 294v1M607.5 294v1M608.5 293v1M609.5 293v1M610.5 292v1M611.5 292v1M612.5 291v1M613.5 290v1M614.5 289v1M615.5 288v1M616.5 287v1M617.5 286v1M618.5 285v1M619.5 283v2M620.5 282v1M621.5 280v2M622.5 279v1M623.5 277v2M624.5 275v2M625.5 274v1M626.5 272v2M627.5 270v2M628.5 268v2M629.5 265v3M630.5 263v2M631.5 261v2M632.5 259v2M633.5 256v3M634.5 254v2M635.5 252v2M636.5 249v3M637.5 247v2M638.5 244v3M639.5 242v2M640.5 239v3M641.5 235v4M642.5 232v3M643.5 228v4M644.5 225v3M645.5 221v4M646.5 218v3M647.5 215v3M648.5 211v4M649.5 208v3M650.5 205v3M651.5 201v4M652.5 198v3M653.5 195v3M654.5 192v3M655.5 190v2M656.5 187v3M657.5 184v3M658.5 182v2M659.5 180v2M660.5 178v2M661.5 176v2M662.5 175v1M663.5 173v2M664.5 172v1M665.5 171v1M666.5 171v1M667.5 170v1M668.5 170v1M669.5 170v1M670.5 170v1M671.5 171v1M672.5 172v1M673.5 173v1M674.5 174v2M675.5 176v2M676.5 178v2M677.5 180v2M678.5 182v2M679.5 184v3M680.5 187v3M681.5 190v2M682.5 192v3M683.5 195v3M684.5 198v4M685.5 202v3M686.5 205v3M687.5 208v4M688.5 212v3M689.5 215v3M690.5 218v4M691.5 222v3M692.5 225v4M693.5 229v3M694.5 232v4M695.5 236v3M696.5 239v3M697.5 242v2M698.5 244v3M699.5 247v2M700.5 249v3M701.5 252v2M702.5 254v2M703.5 256v3M704.5 259v2M705.5 261v2M706.5 263v2M707.5 265v2M708.5 267v2M709.5 269v2M710.5 271v2M711.5 273v2M712.5 275v2M713.5 277v2M714.5 279v1M715.5 280v2M716.5 282v1M717.5 283v1M718.5 284v2M719.5 286v1M720.5 287v1M721.5 288v1M722.5 289v1M723.5 290v1M724.5 291v1M725.5 291v1M726.5 292v1M727.5 293v1M728.5 293v1M729.5 294v1M730.5 294v1M731.5 294v1M732.5 294v1M733.5 294v1M734.5 294v1M735.5 294v1M736.5 294v1M737.5 294v1M738.5 294v1M739.5 294v1M740.5 293v1M741.5 293v1M742.5 292v1M743.5 291v1M744.5 291v1M745.5 290v1M746.5 289v1M747.5 288v1M748.5 287v1M749.5 285v2M750.5 284v1M751.5 282v2M752.5 281v1M753.5 279v2M754.5 278v1M755.5 276v2M756.5 274v2M757.5 272v2M758.5 270v2M759.5 268v2M760.5 266v2M761.5 264v2M762.5 262v2M763.5 260v2M764.5 257v3M765.5 255v2M766.5 253v2M767.5 250v3M768.5 248v2M769.5 245v3M770.5 243v2M771.5 240v3M772.5 236v4M773.5 233v3M774.5 229v4M775.5 226v3M776.5 222v4M777.5 219v3M778.5 216v3M779.5 212v4M780.5 209v3M781.5 206v3M782.5 202v4M783.5 199v3M784.5 196v3M785.5 193v3M786.5 190v3M787.5 188v2M788.5 185v3M789.5 183v2M790.5 181v2M791.5 179v2M792.5 177v2M793.5 175v2M794.5 174v1M795.5 173v1M796.5 172v1M797.5 171v1M798.5 170v1M799.5 170v1M800.5 170v1M801.5 170v1M802.5 171v1M803.5 171v1M804.5 172v2M805.5 174v1M806.5 175v2M807.5 177v2M808.5 179v2M809.5 181v2M810.5 183v3M811.5 186v3M812.5 189v3M813.5 192v2M814.5 194v3M815.5 197v4M816.5 201v3M817.5 204v3M818.5 207v3M819.5 210v4M820.5 214v3M821.5 217v4M822.5 221v3M823.5 224v4M824.5 228v3M825.5 231v3M826.5 234v4M827.5 238v3M828.5 241v3M829.5 244v2M830.5 246v2M831.5 248v3M832.5 251v2M833.5 253v3M834.5 256v2M835.5 258v2M836.5 260v2M837.5 262v3M838.5 265v2M839.5 267v2M840.5 269v2M841.5 271v2M842.5 273v2M843.5 275v1M844.5 276v2M845.5 278v2M846.5 280v1M847.5 281v2M848.5 283v1M849.5 284v1M850.5 285v1M851.5 286v1M852.5 287v2M853.5 289v1M854.5 289v1M855.5 290v1M856.5 291v1M857.5 292v1M858.5 292v1M859.5 293v1M860.5 293v1M861.5 294v1M862.5 294v1M863.5 294v1M864.5 294v1M865.5 294v1M866.5 294v1M867.5 294v1M868.5 294v1M869.5 294v1M870.5 294v1M871.5 293v1M872.5 293v1M873.5 292v1M874.5 292v1M875.5 291v1M876.5 290v1M877.5 289v1M878.5 288v1M879.5 287v1M880.5 286v1M881.5 284v2M882.5 283v1M883.5 281v2M884.5 280v1M885.5 278v2M886.5 277v1M887.5 275v2M888.5 273v2M889.5 271v2M890.5 269v2M891.5 267v2M892.5 265v2M893.5 263v2M894.5 260v3M895.5 258v2M896.5 256v2M897.5 253v3M898.5 251v2M899.5 249v2M900.5 246v3M901.5 244v2M902.5 241v3M903.5 238v3M904.5 234v4M905.5 231v3M906.5 227v4M907.5 224v3M908.5 220v4M909.5 217v3M910.5 213v4M911.5 210v3M912.5 207v3M913.5 203v4M914.5 200v3M915.5 197v3M916.5 194v3M917.5 191v3M918.5 189v2M919.5 186v3M920.5 184v2M921.5 181v3M922.5 179v2M923.5 177v2M924.5 176v1M925.5 174v2M926.5 173v1M927.5 172v1M928.5 171v1M929.5 170v1M930.5 170v1M931.5 170v1M932.5 170v1M933.5 170v1M934.5 171v1M935.5 172v1M936.5 173v2M937.5 175v1M938.5 176v2M939.5 178v2M940.5 180v3M941.5 183v2M942.5 185v3M943.5 188v3M944.5 191v2M945.5 193v3M946.5 196v4M947.5 200v3M948.5 203v3M949.5 206v3M950.5 209v4M951.5 213v3M952.5 216v3M953.5 219v4M954.5 223v3M955.5 226v4M956.5 230v3M957.5 233v4M958.5 237v3M959.5 240v3M960.5 243v2M961.5 245v3M962.5 248v2M963.5 250v3M964.5 253v2M571.5 254v3M572.5 257v2M573.5 259v2M574.5 261v2M575.5 263v2M576.5 265v2M577.5 267v2M578.5 269v2M579.5 271v2M580.5 273v2M581.5 275v1M582.5 276v2M583.5 278v1M584.5 279v2M585.5 281v1M586.5 282v2M587.5 284v1M588.5 285v1M589.5 286v1M590.5 287v1M591.5 288v1M592.5 289v1M593.5 290v1M594.5 291v1M595.5 291v1M596.5 292v1M597.5 292v1M598.5 293v1M599.5 293v1M600.5 293v1M601.5 293v1M602.5 293v1M603.5 293v1M604.5 293v1M605.5 293v1M606.5 293v1M607.5 293v1M608.5 292v1M609.5 292v1M610.5 291v1M611.5 291v1M612.5 290v1M613.5 289v1M614.5 288v1M615.5 287v1M616.5 286v1M617.5 285v1M618.5 284v1M619.5 282v2M620.5 281v1M621.5 279v2M622.5 278v1M623.5 276v2M624.5 274v2M625.5 273v1M626.5 271v2M627.5 269v2M628.5 267v2M629.5 265v2M630.5 263v2M631.5 260v3M632.5 258v2M633.5 256v2M634.5 254v2M635.5 251v3M636.5 249v2M637.5 247v2M638.5 244v3M639.5 242v2M640.5 239v3M641.5 236v3M642.5 232v4M643.5 229v3M644.5 226v3M645.5 223v3M646.5 219v4M647.5 216v3M648.5 213v3M649.5 210v3M650.5 207v3M651.5 204v3M652.5 201v3M653.5 198v3M654.5 195v3M655.5 192v3M656.5 190v2M657.5 188v2M658.5 185v3M659.5 183v2M660.5 181v2M661.5 180v1M662.5 178v2M663.5 177v1M664.5 176v1M665.5 175v1M666.5 175v1M667.5 174v1M668.5 174v1M669.5 174v1M670.5 174v1M671.5 175v1M672.5 176v1M673.5 177v1M674.5 178v1M675.5 179v2M676.5 181v2M677.5 183v2M678.5 185v2M679.5 187v3M680.5 190v2M681.5 192v3M682.5 195v3M683.5 198v3M684.5 201v3M685.5 204v3M686.5 207v3M687.5 210v3M688.5 213v3M689.5 216v4M690.5 220v3M691.5 223v3M692.5 226v3M693.5 229v4M694.5 233v3M695.5 236v3M696.5 239v3M697.5 242v2M698.5 244v3M699.5 247v2M700.5 249v2M701.5 251v3M702.5 254v2M703.5 256v2M704.5 258v2M705.5 260v2M706.5 262v3M707.5 265v2M708.5 267v2M709.5 269v1M710.5 270v2M711.5 272v2M712.5 274v2M713.5 276v1M714.5 277v2M715.5 279v1M716.5 280v2M717.5 282v1M718.5 283v1M719.5 284v2M720.5 286v1M721.5 287v1M722.5 288v1M723.5 289v1M724.5 290v1M725.5 290v1M726.5 291v1M727.5 292v1M728.5 292v1M729.5 293v1M730.5 293v1M731.5 293v1M732.5 293v1M733.5 293v1M734.5 293v1M735.5 293v1M736.5 293v1M737.5 293v1M738.5 293v1M739.5 292v1M740.5 292v1M741.5 292v1M742.5 291v1M743.5 290v1M744.5 289v1M745.5 289v1M746.5 288v1M747.5 287v1M748.5 285v2M749.5 284v1M750.5 283v1M751.5 281v2M752.5 280v1M753.5 278v2M754.5 277v1M755.5 275v2M756.5 273v2M757.5 271v2M758.5 269v2M759.5 267v2M760.5 265v2M761.5 263v2M762.5 261v2M763.5 259v2M764.5 257v2M765.5 254v3M766.5 252v2M767.5 250v2M768.5 247v3M769.5 245v2M770.5 243v2M771.5 240v3M772.5 237v3M773.5 233v4M774.5 230v3M775.5 227v3M776.5 224v3M777.5 220v4M778.5 217v3M779.5 214v3M780.5 211v3M781.5 208v3M782.5 205v3M783.5 202v3M784.5 199v3M785.5 196v3M786.5 193v3M787.5 191v2M788.5 188v3M789.5 186v2M790.5 184v2M791.5 182v2M792.5 180v2M793.5 179v1M794.5 178v1M795.5 177v1M796.5 176v1M797.5 175v1M798.5 174v1M799.5 174v1M800.5 174v1M801.5 174v1M802.5 175v1M803.5 175v1M804.5 176v2M805.5 178v1M806.5 179v2M807.5 181v1M808.5 182v3M809.5 185v2M810.5 187v2M811.5 189v3M812.5 192v2M813.5 194v3M814.5 197v3M815.5 200v3M816.5 203v3M817.5 206v3M818.5 209v3M819.5 212v3M820.5 215v3M821.5 218v4M822.5 222v3M823.5 225v3M824.5 228v4M825.5 232v3M826.5 235v3M827.5 238v3M828.5 241v3M829.5 244v2M830.5 246v2M831.5 248v3M832.5 251v2M833.5 253v2M834.5 255v2M835.5 257v3M836.5 260v2M837.5 262v2M838.5 264v2M839.5 266v2M840.5 268v2M841.5 270v2M842.5 272v1M843.5 273v2M844.5 275v2M845.5 277v1M846.5 278v2M847.5 280v1M848.5 281v2M849.5 283v1M850.5 284v1M851.5 285v1M852.5 286v1M853.5 287v1M854.5 288v1M855.5 289v1M856.5 290v1M857.5 291v1M858.5 291v1M859.5 292v1M860.5 292v1M861.5 293v1M862.5 293v1M863.5 293v1M864.5 293v1M865.5 293v1M866.5 293v1M867.5 293v1M868.5 293v1M869.5 293v1M870.5 293v1M871.5 292v1M872.5 292v1M873.5 291v1M874.5 290v1M875.5 290v1M876.5 289v1M877.5 288v1M878.5 287v1M879.5 286v1M880.5 285v1M881.5 283v2M882.5 282v1M883.5 280v2M884.5 279v1M885.5 277v2M886.5 276v1M887.5 274v2M888.5 272v2M889.5 270v2M890.5 268v2M891.5 266v2M892.5 264v2M893.5 262v2M894.5 260v2M895.5 257v3M896.5 255v2M897.5 253v2M898.5 251v2M899.5 248v3M900.5 246v2M901.5 244v2M902.5 241v3M903.5 238v3M904.5 234v4M905.5 231v3M906.5 228v3M907.5 225v3M908.5 221v4M909.5 218v3M910.5 215v3M911.5 212v3M912.5 209v3M913.5 206v3M914.5 203v3M915.5 200v3M916.5 197v3M917.5 194v3M918.5 192v2M919.5 189v3M920.5 187v2M921.5 185v2M922.5 183v2M923.5 181v2M924.5 179v2M925.5 178v1M926.5 177v1M927.5 176v1M928.5 175v1M929.5 174v1M930.5 174v1M931.5 174v1M932.5 174v1M933.5 174v1M934.5 175v1M935.5 176v1M936.5 177v1M937.5 178v2M938.5 180v2M939.5 182v2M940.5 184v2M941.5 186v2M942.5 188v3M943.5 191v2M944.5 193v3M945.5 196v3M946.5 199v3M947.5 202v3M948.5 205v3M949.5 208v3M950.5 211v3M951.5 214v3M952.5 217v4M953.5 221v3M954.5 224v3M955.5 227v3M956.5 230v4M957.5 234v3M958.5 237v3M959.5 240v3M960.5 243v2M961.5 245v2M962.5 247v3M963.5 250v2M964.5 252v2M571.5 254v2M572.5 256v2M573.5 258v2M574.5 260v2M575.5 262v2M576.5 264v2M577.5 266v2M578.5 268v2M579.5 270v2M580.5 272v2M581.5 274v1M582.5 275v2M583.5 277v1M584.5 278v2M585.5 280v1M586.5 281v2M587.5 283v1M588.5 284v1M589.5 285v1M590.5 286v1M591.5 287v1M592.5 288v1M593.5 289v1M594.5 289v1M595.5 290v1M596.5 291v1M597.5 291v1M598.5 292v1M599.5 292v1M600.5 292v1M601.5 292v1M602.5 292v1M603.5 292v1M604.5 292v1M605.5 292v1M606.5 292v1M607.5 292v1M608.5 291v1M609.5 291v1M610.5 290v1M611.5 290v1M612.5 289v1M613.5 288v1M614.5 287v1M615.5 286v1M616.5 285v1M617.5 284v1M618.5 283v1M619.5 281v2M620.5 280v1M621.5 278v2M622.5 277v1M623.5 275v2M624.5 273v2M625.5 272v1M626.5 270v2M627.5 268v2M628.5 266v2M629.5 264v2M630.5 262v2M631.5 260v2M632.5 258v2M633.5 255v3M634.5 253v2M635.5 251v2M636.5 249v2M637.5 247v2M638.5 244v3M639.5 242v2M640.5 239v3M641.5 236v3M642.5 233v3M643.5 230v3M644.5 227v3M645.5 224v3M646.5 221v3M647.5 218v3M648.5 215v3M649.5 212v3M650.5 209v3M651.5 206v3M652.5 204v2M653.5 201v3M654.5 199v2M655.5 196v3M656.5 194v2M657.5 192v2M658.5 190v2M659.5 188v2M660.5 186v2M661.5 184v2M662.5 183v1M663.5 182v1M664.5 181v1M665.5 180v1M666.5 180v1M667.5 179v1M668.5 179v1M669.5 179v1M670.5 179v1M671.5 180v1M672.5 181v1M673.5 181v2M674.5 183v1M675.5 184v2M676.5 186v1M677.5 187v2M678.5 189v2M679.5 191v3M680.5 194v2M681.5 196v3M682.5 199v2M683.5 201v3M684.5 204v3M685.5 207v2M686.5 209v3M687.5 212v3M688.5 215v3M689.5 218v3M690.5 221v3M691.5 224v3M692.5 227v3M693.5 230v3M694.5 233v3M695.5 236v3M696.5 239v3M697.5 242v2M698.5 244v2M699.5 246v3M700.5 249v2M701.5 251v2M702.5 253v2M703.5 255v2M704.5 257v3M705.5 260v2M706.5 262v2M707.5 264v2M708.5 266v2M709.5 268v1M710.5 269v2M711.5 271v2M712.5 273v2M713.5 275v1M714.5 276v2M715.5 278v1M716.5 279v2M717.5 281v1M718.5 282v1M719.5 283v2M720.5 285v1M721.5 286v1M722.5 287v1M723.5 288v1M724.5 288v1M725.5 289v1M726.5 290v1M727.5 291v1M728.5 291v1M729.5 291v1M730.5 292v1M731.5 292v1M732.5 292v1M733.5 292v1M734.5 292v1M735.5 292v1M736.5 292v1M737.5 292v1M738.5 292v1M739.5 291v1M740.5 291v1M741.5 290v1M742.5 290v1M743.5 289v1M744.5 288v1M745.5 288v1M746.5 287v1M747.5 285v2M748.5 284v1M749.5 283v1M750.5 282v1M751.5 280v2M752.5 279v1M753.5 277v2M754.5 276v1M755.5 274v2M756.5 272v2M757.5 270v2M758.5 268v2M759.5 267v1M760.5 265v2M761.5 263v2M762.5 260v3M763.5 258v2M764.5 256v2M765.5 254v2M766.5 252v2M767.5 250v2M768.5 247v3M769.5 245v2M770.5 243v2M771.5 240v3M772.5 237v3M773.5 234v3M774.5 231v3M775.5 228v3M776.5 225v3M777.5 222v3M778.5 219v3M779.5 216v3M780.5 213v3M781.5 210v3M782.5 207v3M783.5 205v2M784.5 202v3M785.5 199v3M786.5 197v2M787.5 195v2M788.5 192v3M789.5 190v2M790.5 188v2M791.5 187v1M792.5 185v2M793.5 184v1M794.5 182v2M795.5 181v1M796.5 180v1M797.5 180v1M798.5 179v1M799.5 179v1M800.5 179v1M801.5 179v1M802.5 180v1M803.5 180v1M804.5 181v1M805.5 182v2M806.5 184v1M807.5 185v2M808.5 187v2M809.5 189v2M810.5 191v2M811.5 193v2M812.5 195v3M813.5 198v2M814.5 200v3M815.5 203v3M816.5 206v2M817.5 208v3M818.5 211v3M819.5 214v3M820.5 217v3M821.5 220v3M822.5 223v3M823.5 226v3M824.5 229v3M825.5 232v3M826.5 235v3M827.5 238v3M828.5 241v2M829.5 243v3M830.5 246v2M831.5 248v2M832.5 250v2M833.5 252v3M834.5 255v2M835.5 257v2M836.5 259v2M837.5 261v2M838.5 263v2M839.5 265v2M840.5 267v2M841.5 269v2M842.5 271v1M843.5 272v2M844.5 274v2M845.5 276v1M846.5 277v2M847.5 279v1M848.5 280v2M849.5 282v1M850.5 283v1M851.5 284v1M852.5 285v1M853.5 286v1M854.5 287v1M855.5 288v1M856.5 289v1M857.5 290v1M858.5 290v1M859.5 291v1M860.5 291v1M861.5 292v1M862.5 292v1M863.5 292v1M864.5 292v1M865.5 292v1M866.5 292v1M867.5 292v1M868.5 292v1M869.5 292v1M870.5 292v1M871.5 291v1M872.5 291v1M873.5 290v1M874.5 289v1M875.5 289v1M876.5 288v1M877.5 287v1M878.5 286v1M879.5 285v1M880.5 283v2M881.5 282v1M882.5 281v1M883.5 279v2M884.5 278v1M885.5 276v2M886.5 275v1M887.5 273v2M888.5 271v2M889.5 269v2M890.5 267v2M891.5 265v2M892.5 263v2M893.5 261v2M894.5 259v2M895.5 257v2M896.5 255v2M897.5 252v3M898.5 250v2M899.5 248v2M900.5 246v2M901.5 243v3M902.5 241v2M903.5 238v3M904.5 235v3M905.5 232v3M906.5 229v3M907.5 226v3M908.5 223v3M909.5 220v3M910.5 217v3M911.5 214v3M912.5 211v3M913.5 208v3M914.5 206v2M915.5 203v3M916.5 200v3M917.5 198v2M918.5 195v3M919.5 193v2M920.5 191v2M921.5 189v2M922.5 187v2M923.5 185v2M924.5 184v1M925.5 183v1M926.5 182v1M927.5 181v1M928.5 180v1M929.5 179v1M930.5 179v1M931.5 179v1M932.5 179v1M933.5 179v1M934.5 180v1M935.5 181v1M936.5 182v1M937.5 183v2M938.5 185v1M939.5 186v2M940.5 188v2M941.5 190v2M942.5 192v3M943.5 195v2M944.5 197v2M945.5 199v3M946.5 202v3M947.5 205v3M948.5 208v2M949.5 210v3M950.5 213v3M951.5 216v3M952.5 219v3M953.5 222v3M954.5 225v3M955.5 228v3M956.5 231v3M957.5 234v3M958.5 237v3M959.5 240v3M960.5 243v2M961.5 245v2M962.5 247v2M963.5 249v3M964.5 252v2M571.5 253v2M572.5 255v3M573.5 258v2M574.5 260v2M575.5 262v2M576.5 264v1M577.5 265v2M578.5 267v2M579.5 269v2M580.5 271v2M581.5 273v1M582.5 274v2M583.5 276v1M584.5 277v2M585.5 279v1M586.5 280v1M587.5 281v2M588.5 283v1M589.5 284v1M590.5 285v1M591.5 286v1M592.5 287v1M593.5 288v1M594.5 288v1M595.5 289v1M596.5 290v1M597.5 290v1M598.5 291v1M599.5 291v1M600.5 291v1M601.5 291v1M602.5 291v1M603.5 291v1M604.5 291v1M605.5 291v1M606.5 291v1M607.5 291v1M608.5 290v1M609.5 290v1M610.5 289v1M611.5 289v1M612.5 288v1M613.5 287v1M614.5 286v1M615.5 285v1M616.5 284v1M617.5 283v1M618.5 282v1M619.5 280v2M620.5 279v1M621.5 277v2M622.5 276v1M623.5 274v2M624.5 272v2M625.5 271v1M626.5 269v2M627.5 267v2M628.5 265v2M629.5 263v2M630.5 261v2M631.5 259v2M632.5 257v2M633.5 255v2M634.5 253v2M635.5 251v2M636.5 249v2M637.5 246v3M638.5 244v2M639.5 242v2M640.5 239v3M641.5 237v2M642.5 234v3M643.5 231v3M644.5 228v3M645.5 226v2M646.5 223v3M647.5 220v3M648.5 217v3M649.5 215v2M650.5 212v3M651.5 210v2M652.5 207v3M653.5 205v2M654.5 202v3M655.5 200v2M656.5 198v2M657.5 196v2M658.5 194v2M659.5 193v1M660.5 191v2M661.5 190v1M662.5 188v2M663.5 187v1M664.5 186v1M665.5 186v1M666.5 185v1M667.5 185v1M668.5 185v1M669.5 185v1M670.5 185v1M671.5 185v1M672.5 186v1M673.5 187v1M674.5 188v1M675.5 189v2M676.5 191v1M677.5 192v2M678.5 194v2M679.5 196v2M680.5 198v2M681.5 200v2M682.5 202v3M683.5 205v2M684.5 207v3M685.5 210v2M686.5 212v3M687.5 215v3M688.5 218v2M689.5 220v3M690.5 223v3M691.5 226v2M692.5 228v3M693.5 231v3M694.5 234v3M695.5 237v2M696.5 239v3M697.5 242v2M698.5 244v2M699.5 246v2M700.5 248v3M701.5 251v2M702.5 253v2M703.5 255v2M704.5 257v2M705.5 259v2M706.5 261v2M707.5 263v2M708.5 265v2M709.5 267v2M710.5 269v1M711.5 270v2M712.5 272v2M713.5 274v1M714.5 275v2M715.5 277v1M716.5 278v2M717.5 280v1M718.5 281v1M719.5 282v1M720.5 283v2M721.5 285v1M722.5 286v1M723.5 287v1M724.5 287v1M725.5 288v1M726.5 289v1M727.5 289v1M728.5 290v1M729.5 290v1M730.5 291v1M731.5 291v1M732.5 291v1M733.5 291v1M734.5 291v1M735.5 291v1M736.5 291v1M737.5 291v1M738.5 291v1M739.5 290v1M740.5 290v1M741.5 289v1M742.5 289v1M743.5 288v1M744.5 287v1M745.5 286v1M746.5 285v1M747.5 284v1M748.5 283v1M749.5 282v1M750.5 281v1M751.5 279v2M752.5 278v1M753.5 276v2M754.5 275v1M755.5 273v2M756.5 271v2M757.5 269v2M758.5 268v1M759.5 266v2M760.5 264v2M761.5 262v2M762.5 260v2M763.5 258v2M764.5 256v2M765.5 254v2M766.5 251v3M767.5 249v2M768.5 247v2M769.5 245v2M770.5 243v2M771.5 240v3M772.5 237v3M773.5 235v2M774.5 232v3M775.5 229v3M776.5 226v3M777.5 224v2M778.5 221v3M779.5 218v3M780.5 216v2M781.5 213v3M782.5 211v2M783.5 208v3M784.5 206v2M785.5 203v3M786.5 201v2M787.5 199v2M788.5 197v2M789.5 195v2M790.5 193v2M791.5 192v1M792.5 190v2M793.5 189v1M794.5 188v1M795.5 187v1M796.5 186v1M797.5 185v1M798.5 185v1M799.5 185v1M800.5 185v1M801.5 185v1M802.5 185v1M803.5 186v1M804.5 187v1M805.5 188v1M806.5 189v1M807.5 190v2M808.5 192v1M809.5 193v2M810.5 195v2M811.5 197v2M812.5 199v3M813.5 202v2M814.5 204v2M815.5 206v3M816.5 209v2M817.5 211v3M818.5 214v3M819.5 217v2M820.5 219v3M821.5 222v3M822.5 225v2M823.5 227v3M824.5 230v3M825.5 233v3M826.5 236v2M827.5 238v3M828.5 241v2M829.5 243v2M830.5 245v3M831.5 248v2M832.5 250v2M833.5 252v2M834.5 254v2M835.5 256v2M836.5 258v2M837.5 260v2M838.5 262v2M839.5 264v2M840.5 266v2M841.5 268v2M842.5 270v2M843.5 272v1M844.5 273v2M845.5 275v1M846.5 276v2M847.5 278v1M848.5 279v2M849.5 281v1M850.5 282v1M851.5 283v1M852.5 284v1M853.5 285v1M854.5 286v1M855.5 287v1M856.5 288v1M857.5 289v1M858.5 289v1M859.5 290v1M860.5 290v1M861.5 291v1M862.5 291v1M863.5 291v1M864.5 291v1M865.5 291v1M866.5 291v1M867.5 291v1M868.5 291v1M869.5 291v1M870.5 291v1M871.5 290v1M872.5 290v1M873.5 289v1M874.5 288v1M875.5 288v1M876.5 287v1M877.5 286v1M878.5 285v1M879.5 284v1M880.5 282v2M881.5 281v1M882.5 280v1M883.5 278v2M884.5 277v1M885.5 275v2M886.5 274v1M887.5 272v2M888.5 270v2M889.5 268v2M890.5 266v2M891.5 264v2M892.5 262v2M893.5 260v2M894.5 258v2M895.5 256v2M896.5 254v2M897.5 252v2M898.5 250v2M899.5 248v2M900.5 246v2M901.5 243v3M902.5 241v2M903.5 238v3M904.5 236v2M905.5 233v3M906.5 230v3M907.5 227v3M908.5 225v2M909.5 222v3M910.5 219v3M911.5 217v2M912.5 214v3M913.5 211v3M914.5 209v2M915.5 206v3M916.5 204v2M917.5 202v2M918.5 200v2M919.5 197v3M920.5 196v1M921.5 194v2M922.5 192v2M923.5 191v1M924.5 189v2M925.5 188v1M926.5 187v1M927.5 186v1M928.5 185v1M929.5 185v1M930.5 185v1M931.5 185v1M932.5 185v1M933.5 185v1M934.5 185v1M935.5 186v1M936.5 187v1M937.5 188v2M938.5 190v1M939.5 191v2M940.5 193v2M941.5 195v2M942.5 197v2M943.5 199v2M944.5 201v2M945.5 203v3M946.5 206v2M947.5 208v3M948.5 211v2M949.5 213v3M950.5 216v2M951.5 218v3M952.5 221v3M953.5 224v3M954.5 227v2M955.5 229v3M956.5 232v3M957.5 235v3M958.5 238v2M959.5 240v3M960.5 243v2M961.5 245v2M962.5 247v2M963.5 249v2M964.5 251v2M571.5 253v2M572.5 255v2M573.5 257v2M574.5 259v2M575.5 261v2M576.5 263v1M577.5 264v2M578.5 266v2M579.5 268v2M580.5 270v1M581.5 271v2M582.5 273v1M583.5 274v2M584.5 276v1M585.5 277v2M586.5 279v1M587.5 280v1M588.5 281v1M589.5 282v1M590.5 283v1M591.5 284v1M592.5 285v1M593.5 286v1M594.5 287v1M595.5 288v1M596.5 288v1M597.5 289v1M598.5 289v1M599.5 289v1M600.5 290v1M601.5 290v1M602.5 290v1M603.5 290v1M604.5 290v1M605.5 290v1M606.5 290v1M607.5 289v1M608.5 289v1M609.5 288v1M610.5 288v1M611.5 287v1M612.5 286v1M613.5 286v1M614.5 285v1M615.5 284v1M616.5 282v2M617.5 281v1M618.5 280v1M619.5 279v1M620.5 277v2M621.5 276v1M622.5 274v2M623.5 273v1M624.5 271v2M625.5 269v2M626.5 268v1M627.5 266v2M628.5 264v2M629.5 262v2M630.5 260v2M631.5 258v2M632.5 256v2M633.5 254v2M634.5 252v2M635.5 250v2M636.5 248v2M637.5 246v2M638.5 244v2M639.5 242v2M640.5 239v3M641.5 237v2M642.5 234v3M643.5 232v2M644.5 229v3M645.5 227v2M646.5 224v3M647.5 222v2M648.5 220v2M649.5 217v3M650.5 215v2M651.5 213v2M652.5 210v3M653.5 208v2M654.5 206v2M655.5 204v2M656.5 202v2M657.5 200v2M658.5 199v1M659.5 197v2M660.5 196v1M661.5 194v2M662.5 193v1M663.5 192v1M664.5 191v1M665.5 191v1M666.5 190v1M667.5 190v1M668.5 190v1M669.5 190v1M670.5 190v1M671.5 190v1M672.5 191v1M673.5 192v1M674.5 193v1M675.5 194v1M676.5 195v2M677.5 197v1M678.5 198v2M679.5 200v2M680.5 202v2M681.5 204v2M682.5 206v2M683.5 208v2M684.5 210v2M685.5 212v3M686.5 215v2M687.5 217v3M688.5 220v2M689.5 222v2M690.5 224v3M691.5 227v2M692.5 229v3M693.5 232v2M694.5 234v3M695.5 237v2M696.5 239v3M697.5 242v2M698.5 244v2M699.5 246v2M700.5 248v2M701.5 250v2M702.5 252v2M703.5 254v2M704.5 256v2M705.5 258v2M706.5 260v2M707.5 262v2M708.5 264v2M709.5 266v1M710.5 267v2M711.5 269v2M712.5 271v1M713.5 272v2M714.5 274v1M715.5 275v2M716.5 277v1M717.5 278v2M718.5 280v1M719.5 281v1M720.5 282v1M721.5 283v1M722.5 284v1M723.5 285v1M724.5 286v1M725.5 287v1M726.5 287v1M727.5 288v1M728.5 289v1M729.5 289v1M730.5 289v1M731.5 290v1M732.5 290v1M733.5 290v1M734.5 290v1M735.5 290v1M736.5 290v1M737.5 290v1M738.5 289v1M739.5 289v1M740.5 288v1M741.5 288v1M742.5 287v1M743.5 287v1M744.5 286v1M745.5 285v1M746.5 284v1M747.5 283v1M748.5 282v1M749.5 280v2M750.5 279v1M751.5 278v1M752.5 276v2M753.5 275v1M754.5 273v2M755.5 272v1M756.5 270v2M757.5 268v2M758.5 266v2M759.5 265v1M760.5 263v2M761.5 261v2M762.5 259v2M763.5 257v2M764.5 255v2M765.5 253v2M766.5 251v2M767.5 249v2M768.5 247v2M769.5 245v2M770.5 243v2M771.5 240v3M772.5 238v2M773.5 235v3M774.5 233v2M775.5 230v3M776.5 228v2M777.5 225v3M778.5 223v2M779.5 220v3M780.5 218v2M781.5 216v2M782.5 213v3M783.5 211v2M784.5 209v2M785.5 207v2M786.5 205v2M787.5 203v2M788.5 201v2M789.5 199v2M790.5 197v2M791.5 196v1M792.5 195v1M793.5 194v1M794.5 193v1M795.5 192v1M796.5 191v1M797.5 190v1M798.5 190v1M799.5 190v1M800.5 190v1M801.5 190v1M802.5 190v1M803.5 191v1M804.5 191v1M805.5 192v1M806.5 193v2M807.5 195v1M808.5 196v2M809.5 198v1M810.5 199v2M811.5 201v2M812.5 203v2M813.5 205v2M814.5 207v2M815.5 209v3M816.5 212v2M817.5 214v2M818.5 216v3M819.5 219v2M820.5 221v3M821.5 224v2M822.5 226v3M823.5 229v2M824.5 231v3M825.5 234v2M826.5 236v3M827.5 239v2M828.5 241v2M829.5 243v2M830.5 245v2M831.5 247v2M832.5 249v2M833.5 251v2M834.5 253v2M835.5 255v2M836.5 257v2M837.5 259v2M838.5 261v2M839.5 263v2M840.5 265v2M841.5 267v2M842.5 269v1M843.5 270v2M844.5 272v1M845.5 273v2M846.5 275v1M847.5 276v2M848.5 278v1M849.5 279v1M850.5 280v2M851.5 282v1M852.5 283v1M853.5 284v1M854.5 285v1M855.5 286v1M856.5 286v1M857.5 287v1M858.5 288v1M859.5 288v1M860.5 289v1M861.5 289v1M862.5 290v1M863.5 290v1M864.5 290v1M865.5 290v1M866.5 290v1M867.5 290v1M868.5 290v1M869.5 289v1M870.5 289v1M871.5 289v1M872.5 288v1M873.5 288v1M874.5 287v1M875.5 286v1M876.5 285v1M877.5 284v1M878.5 283v1M879.5 282v1M880.5 281v1M881.5 280v1M882.5 278v2M883.5 277v1M884.5 275v2M885.5 274v1M886.5 272v2M887.5 271v1M888.5 269v2M889.5 267v2M890.5 265v2M891.5 263v2M892.5 262v1M893.5 260v2M894.5 258v2M895.5 256v2M896.5 254v2M897.5 252v2M898.5 250v2M899.5 247v3M900.5 245v2M901.5 243v2M902.5 241v2M903.5 239v2M904.5 236v3M905.5 234v2M906.5 231v3M907.5 229v2M908.5 226v3M909.5 224v2M910.5 221v3M911.5 219v2M912.5 216v3M913.5 214v2M914.5 212v2M915.5 210v2M916.5 207v3M917.5 205v2M918.5 203v2M919.5 201v2M920.5 200v1M921.5 198v2M922.5 196v2M923.5 195v1M924.5 194v1M925.5 193v1M926.5 192v1M927.5 191v1M928.5 190v1M929.5 190v1M930.5 190v1M931.5 190v1M932.5 190v1M933.5 190v1M934.5 190v1M935.5 191v1M936.5 192v1M937.5 193v1M938.5 194v2M939.5 196v1M940.5 197v2M941.5 199v2M942.5 201v1M943.5 202v2M944.5 204v3M945.5 207v2M946.5 209v2M947.5 211v2M948.5 213v3M949.5 216v2M950.5 218v2M951.5 220v3M952.5 223v2M953.5 225v3M954.5 228v2M955.5 230v3M956.5 233v2M957.5 235v3M958.5 238v2M959.5 240v2M960.5 242v3M961.5 245v2M962.5 247v2M963.5 249v2M964.5 251v2M571.5 252v2M572.5 254v2M573.5 256v2M574.5 258v2M575.5 260v2M576.5 262v1M577.5 263v2M578.5 265v2M579.5 267v1M580.5 268v2M581.5 270v2M582.5 272v1M583.5 273v2M584.5 275v1M585.5 276v1M586.5 277v2M587.5 279v1M588.5 280v1M589.5 281v1M590.5 282v1M591.5 283v1M592.5 284v1M593.5 285v1M594.5 285v1M595.5 286v1M596.5 287v1M597.5 287v1M598.5 288v1M599.5 288v1M600.5 288v1M601.5 288v1M602.5 288v1M603.5 288v1M604.5 288v1M605.5 288v1M606.5 288v1M607.5 288v1M608.5 287v1M609.5 287v1M610.5 286v1M611.5 286v1M612.5 285v1M613.5 284v1M614.5 283v1M615.5 282v1M616.5 281v1M617.5 280v1M618.5 279v1M619.5 277v2M620.5 276v1M621.5 274v2M622.5 273v1M623.5 271v2M624.5 270v1M625.5 268v2M626.5 267v1M627.5 265v2M628.5 263v2M629.5 261v2M630.5 259v2M631.5 258v1M632.5 256v2M633.5 254v2M634.5 252v2M635.5 250v2M636.5 248v2M637.5 246v2M638.5 244v2M639.5 242v2M640.5 240v2M641.5 237v3M642.5 235v2M643.5 233v2M644.5 231v2M645.5 228v3M646.5 226v2M647.5 224v2M648.5 222v2M649.5 220v2M650.5 218v2M651.5 216v2M652.5 214v2M653.5 212v2M654.5 210v2M655.5 208v2M656.5 206v2M657.5 205v1M658.5 203v2M659.5 202v1M660.5 200v2M661.5 199v1M662.5 198v1M663.5 197v1M664.5 197v1M665.5 196v1M666.5 195v1M667.5 195v1M668.5 195v1M669.5 195v1M670.5 195v1M671.5 196v1M672.5 196v1M673.5 197v1M674.5 198v1M675.5 199v1M676.5 200v1M677.5 201v2M678.5 203v1M679.5 204v2M680.5 206v2M681.5 208v1M682.5 209v2M683.5 211v2M684.5 213v2M685.5 215v2M686.5 217v3M687.5 220v2M688.5 222v2M689.5 224v2M690.5 226v2M691.5 228v3M692.5 231v2M693.5 233v2M694.5 235v2M695.5 237v3M696.5 240v2M697.5 242v2M698.5 244v2M699.5 246v2M700.5 248v2M701.5 250v2M702.5 252v2M703.5 254v1M704.5 255v2M705.5 257v2M706.5 259v2M707.5 261v2M708.5 263v2M709.5 265v1M710.5 266v2M711.5 268v2M712.5 270v1M713.5 271v2M714.5 273v1M715.5 274v1M716.5 275v2M717.5 277v1M718.5 278v1M719.5 279v1M720.5 280v2M721.5 282v1M722.5 283v1M723.5 283v1M724.5 284v1M725.5 285v1M726.5 286v1M727.5 286v1M728.5 287v1M729.5 287v1M730.5 288v1M731.5 288v1M732.5 288v1M733.5 288v1M734.5 288v1M735.5 288v1M736.5 288v1M737.5 288v1M738.5 288v1M739.5 287v1M740.5 287v1M741.5 286v1M742.5 286v1M743.5 285v1M744.5 284v1M745.5 283v1M746.5 282v1M747.5 281v1M748.5 280v1M749.5 279v1M750.5 278v1M751.5 276v2M752.5 275v1M753.5 274v1M754.5 272v2M755.5 270v2M756.5 269v1M757.5 267v2M758.5 265v2M759.5 264v1M760.5 262v2M761.5 260v2M762.5 258v2M763.5 256v2M764.5 254v2M765.5 252v2M766.5 250v2M767.5 249v1M768.5 247v2M769.5 245v2M770.5 243v2M771.5 240v3M772.5 238v2M773.5 236v2M774.5 234v2M775.5 231v3M776.5 229v2M777.5 227v2M778.5 225v2M779.5 223v2M780.5 220v3M781.5 218v2M782.5 216v2M783.5 214v2M784.5 212v2M785.5 210v2M786.5 209v1M787.5 207v2M788.5 205v2M789.5 204v1M790.5 202v2M791.5 201v1M792.5 200v1M793.5 199v1M794.5 198v1M795.5 197v1M796.5 196v1M797.5 196v1M798.5 195v1M799.5 195v1M800.5 195v1M801.5 195v1M802.5 195v1M803.5 196v1M804.5 197v1M805.5 197v1M806.5 198v1M807.5 199v2M808.5 201v1M809.5 202v2M810.5 204v1M811.5 205v2M812.5 207v2M813.5 209v2M814.5 211v2M815.5 213v2M816.5 215v2M817.5 217v2M818.5 219v2M819.5 221v2M820.5 223v2M821.5 225v3M822.5 228v2M823.5 230v2M824.5 232v2M825.5 234v3M826.5 237v2M827.5 239v2M828.5 241v2M829.5 243v2M830.5 245v2M831.5 247v2M832.5 249v2M833.5 251v2M834.5 253v2M835.5 255v2M836.5 257v2M837.5 259v1M838.5 260v2M839.5 262v2M840.5 264v2M841.5 266v1M842.5 267v2M843.5 269v2M844.5 271v1M845.5 272v2M846.5 274v1M847.5 275v1M848.5 276v2M849.5 278v1M850.5 279v1M851.5 280v1M852.5 281v1M853.5 282v1M854.5 283v1M855.5 284v1M856.5 285v1M857.5 286v1M858.5 286v1M859.5 287v1M860.5 287v1M861.5 288v1M862.5 288v1M863.5 288v1M864.5 288v1M865.5 288v1M866.5 288v1M867.5 288v1M868.5 288v1M869.5 288v1M870.5 288v1M871.5 287v1M872.5 287v1M873.5 286v1M874.5 285v1M875.5 285v1M876.5 284v1M877.5 283v1M878.5 282v1M879.5 281v1M880.5 279v2M881.5 278v1M882.5 277v1M883.5 275v2M884.5 274v1M885.5 272v2M886.5 271v1M887.5 269v2M888.5 268v1M889.5 266v2M890.5 264v2M891.5 262v2M892.5 261v1M893.5 259v2M894.5 257v2M895.5 255v2M896.5 253v2M897.5 251v2M898.5 249v2M899.5 247v2M900.5 245v2M901.5 243v2M902.5 241v2M903.5 239v2M904.5 237v2M905.5 234v3M906.5 232v2M907.5 230v2M908.5 228v2M909.5 226v2M910.5 223v3M911.5 221v2M912.5 219v2M913.5 217v2M914.5 215v2M915.5 213v2M916.5 211v2M917.5 209v2M918.5 207v2M919.5 206v1M920.5 204v2M921.5 203v1M922.5 201v2M923.5 200v1M924.5 199v1M925.5 198v1M926.5 197v1M927.5 196v1M928.5 196v1M929.5 195v1M930.5 195v1M931.5 195v1M932.5 195v1M933.5 195v1M934.5 196v1M935.5 196v1M936.5 197v1M937.5 198v1M938.5 199v1M939.5 200v2M940.5 202v1M941.5 203v2M942.5 205v1M943.5 206v2M944.5 208v2M945.5 210v2M946.5 212v2M947.5 214v2M948.5 216v2M949.5 218v2M950.5 220v3M951.5 223v2M952.5 225v2M953.5 227v2M954.5 229v2M955.5 231v3M956.5 234v2M957.5 236v2M958.5 238v2M959.5 240v2M960.5 242v2M961.5 244v2M962.5 246v2M963.5 248v2M964.5 250v2M571.5 252v1M572.5 253v2M573.5 255v2M574.5 257v2M575.5 259v2M576.5 261v1M577.5 262v2M578.5 264v2M579.5 266v1M580.5 267v2M581.5 269v1M582.5 270v2M583.5 272v1M584.5 273v2M585.5 275v1M586.5 276v1M587.5 277v1M588.5 278v1M589.5 279v1M590.5 280v1M591.5 281v1M592.5 282v1M593.5 283v1M594.5 284v1M595.5 285v1M596.5 285v1M597.5 286v1M598.5 286v1M599.5 286v1M600.5 287v1M601.5 287v1M602.5 287v1M603.5 287v1M604.5 287v1M605.5 287v1M606.5 287v1M607.5 286v1M608.5 286v1M609.5 285v1M610.5 285v1M611.5 284v1M612.5 283v1M613.5 283v1M614.5 282v1M615.5 281v1M616.5 280v1M617.5 278v2M618.5 277v1M619.5 276v1M620.5 275v1M621.5 273v2M622.5 272v1M623.5 270v2M624.5 269v1M625.5 267v2M626.5 265v2M627.5 264v1M628.5 262v2M629.5 260v2M630.5 259v1M631.5 257v2M632.5 255v2M633.5 253v2M634.5 251v2M635.5 249v2M636.5 248v1M637.5 246v2M638.5 244v2M639.5 242v2M640.5 240v2M641.5 238v2M642.5 236v2M643.5 234v2M644.5 232v2M645.5 230v2M646.5 228v2M647.5 226v2M648.5 224v2M649.5 222v2M650.5 220v2M651.5 218v2M652.5 216v2M653.5 215v1M654.5 213v2M655.5 211v2M656.5 210v1M657.5 208v2M658.5 207v1M659.5 206v1M660.5 205v1M661.5 204v1M662.5 203v1M663.5 202v1M664.5 201v1M665.5 200v1M666.5 200v1M667.5 200v1M668.5 200v1M669.5 200v1M670.5 200v1M671.5 200v1M672.5 201v1M673.5 201v1M674.5 202v1M675.5 203v1M676.5 204v1M677.5 205v1M678.5 206v2M679.5 208v1M680.5 209v2M681.5 211v2M682.5 213v1M683.5 214v2M684.5 216v2M685.5 218v2M686.5 220v2M687.5 222v2M688.5 224v2M689.5 226v2M690.5 228v2M691.5 230v2M692.5 232v2M693.5 234v2M694.5 236v2M695.5 238v2M696.5 240v2M697.5 242v2M698.5 244v1M699.5 245v2M700.5 247v2M701.5 249v2M702.5 251v2M703.5 253v2M704.5 255v2M705.5 257v1M706.5 258v2M707.5 260v2M708.5 262v1M709.5 263v2M710.5 265v2M711.5 267v1M712.5 268v2M713.5 270v1M714.5 271v2M715.5 273v1M716.5 274v1M717.5 275v2M718.5 277v1M719.5 278v1M720.5 279v1M721.5 280v1M722.5 281v1M723.5 282v1M724.5 283v1M725.5 284v1M726.5 284v1M727.5 285v1M728.5 285v1M729.5 286v1M730.5 286v1M731.5 287v1M732.5 287v1M733.5 287v1M734.5 287v1M735.5 287v1M736.5 287v1M737.5 287v1M738.5 286v1M739.5 286v1M740.5 285v1M741.5 285v1M742.5 284v1M743.5 284v1M744.5 283v1M745.5 282v1M746.5 281v1M747.5 280v1M748.5 279v1M749.5 278v1M750.5 276v2M751.5 275v1M752.5 274v1M753.5 272v2M754.5 271v1M755.5 269v2M756.5 268v1M757.5 266v2M758.5 264v2M759.5 263v1M760.5 261v2M761.5 259v2M762.5 257v2M763.5 256v1M764.5 254v2M765.5 252v2M766.5 250v2M767.5 248v2M768.5 246v2M769.5 244v2M770.5 243v1M771.5 241v2M772.5 239v2M773.5 237v2M774.5 234v3M775.5 232v2M776.5 230v2M777.5 228v2M778.5 226v2M779.5 225v1M780.5 223v2M781.5 221v2M782.5 219v2M783.5 217v2M784.5 215v2M785.5 213v2M786.5 212v1M787.5 210v2M788.5 209v1M789.5 207v2M790.5 206v1M791.5 205v1M792.5 204v1M793.5 203v1M794.5 202v1M795.5 201v1M796.5 201v1M797.5 200v1M798.5 200v1M799.5 200v1M800.5 200v1M801.5 200v1M802.5 200v1M803.5 200v1M804.5 201v1M805.5 202v1M806.5 203v1M807.5 204v1M808.5 205v1M809.5 206v1M810.5 207v2M811.5 209v1M812.5 210v2M813.5 212v2M814.5 214v2M815.5 216v1M816.5 217v2M817.5 219v2M818.5 221v2M819.5 223v2M820.5 225v2M821.5 227v2M822.5 229v2M823.5 231v2M824.5 233v2M825.5 235v2M826.5 237v2M827.5 239v2M828.5 241v2M829.5 243v2M830.5 245v2M831.5 247v2M832.5 249v1M833.5 250v2M834.5 252v2M835.5 254v2M836.5 256v2M837.5 258v1M838.5 259v2M839.5 261v2M840.5 263v2M841.5 265v1M842.5 266v2M843.5 268v1M844.5 269v2M845.5 271v1M846.5 272v2M847.5 274v1M848.5 275v1M849.5 276v1M850.5 277v2M851.5 279v1M852.5 280v1M853.5 281v1M854.5 282v1M855.5 283v1M856.5 283v1M857.5 284v1M858.5 285v1M859.5 285v1M860.5 286v1M861.5 286v1M862.5 287v1M863.5 287v1M864.5 287v1M865.5 287v1M866.5 287v1M867.5 287v1M868.5 287v1M869.5 286v1M870.5 286v1M871.5 286v1M872.5 285v1M873.5 284v1M874.5 284v1M875.5 283v1M876.5 282v1M877.5 281v1M878.5 280v1M879.5 279v1M880.5 278v1M881.5 277v1M882.5 275v2M883.5 274v1M884.5 273v1M885.5 271v2M886.5 270v1M887.5 268v2M888.5 267v1M889.5 265v2M890.5 263v2M891.5 261v2M892.5 260v1M893.5 258v2M894.5 256v2M895.5 254v2M896.5 253v1M897.5 251v2M898.5 249v2M899.5 247v2M900.5 245v2M901.5 243v2M902.5 241v2M903.5 239v2M904.5 237v2M905.5 235v2M906.5 233v2M907.5 231v2M908.5 229v2M909.5 227v2M910.5 225v2M911.5 223v2M912.5 221v2M913.5 219v2M914.5 218v1M915.5 216v2M916.5 214v2M917.5 212v2M918.5 211v1M919.5 209v2M920.5 208v1M921.5 207v1M922.5 205v2M923.5 204v1M924.5 203v1M925.5 202v1M926.5 201v1M927.5 201v1M928.5 200v1M929.5 200v1M930.5 200v1M931.5 200v1M932.5 200v1M933.5 200v1M934.5 200v1M935.5 201v1M936.5 201v1M937.5 202v1M938.5 203v1M939.5 204v2M940.5 206v1M941.5 207v1M942.5 208v2M943.5 210v1M944.5 211v2M945.5 213v2M946.5 215v2M947.5 217v2M948.5 219v1M949.5 220v2M950.5 222v2M951.5 224v2M952.5 226v2M953.5 228v2M954.5 230v2M955.5 232v2M956.5 234v2M957.5 236v2M958.5 238v2M959.5 240v2M960.5 242v2M961.5 244v2M962.5 246v2M963.5 248v2M964.5 250v2M571.5 251v2M572.5 253v2M573.5 255v1M574.5 256v2M575.5 258v2M576.5 260v1M577.5 261v2M578.5 263v2M579.5 265v1M580.5 266v2M581.5 268v1M582.5 269v1M583.5 270v2M584.5 272v1M585.5 273v1M586.5 274v2M587.5 276v1M588.5 277v1M589.5 278v1M590.5 279v1M591.5 280v1M592.5 281v1M593.5 282v1M594.5 282v1M595.5 283v1M596.5 284v1M597.5 284v1M598.5 285v1M599.5 285v1M600.5 285v1M601.5 285v1M602.5 285v1M603.5 285v1M604.5 285v1M605.5 285v1M606.5 285v1M607.5 285v1M608.5 284v1M609.5 284v1M610.5 283v1M611.5 283v1M612.5 282v1M613.5 281v1M614.5 280v1M615.5 279v1M616.5 278v1M617.5 277v1M618.5 276v1M619.5 275v1M620.5 273v2M621.5 272v1M622.5 270v2M623.5 269v1M624.5 267v2M625.5 266v1M626.5 264v2M627.5 263v1M628.5 261v2M629.5 259v2M630.5 258v1M631.5 256v2M632.5 254v2M633.5 253v1M634.5 251v2M635.5 249v2M636.5 247v2M637.5 245v2M638.5 244v1M639.5 242v2M640.5 240v2M641.5 238v2M642.5 236v2M643.5 235v1M644.5 233v2M645.5 231v2M646.5 229v2M647.5 228v1M648.5 226v2M649.5 224v2M650.5 222v2M651.5 221v1M652.5 219v2M653.5 218v1M654.5 216v2M655.5 215v1M656.5 213v2M657.5 212v1M658.5 211v1M659.5 210v1M660.5 209v1M661.5 208v1M662.5 207v1M663.5 206v1M664.5 205v1M665.5 205v1M666.5 204v1M667.5 204v1M668.5 204v1M669.5 204v1M670.5 204v1M671.5 204v1M672.5 205v1M673.5 205v1M674.5 206v1M675.5 207v1M676.5 208v1M677.5 209v1M678.5 210v1M679.5 211v2M680.5 213v1M681.5 214v2M682.5 216v1M683.5 217v2M684.5 219v1M685.5 220v2M686.5 222v2M687.5 224v1M688.5 225v2M689.5 227v2M690.5 229v2M691.5 231v2M692.5 233v1M693.5 234v2M694.5 236v2M695.5 238v2M696.5 240v2M697.5 242v1M698.5 243v2M699.5 245v2M700.5 247v2M701.5 249v2M702.5 251v1M703.5 252v2M704.5 254v2M705.5 256v1M706.5 257v2M707.5 259v2M708.5 261v1M709.5 262v2M710.5 264v2M711.5 266v1M712.5 267v2M713.5 269v1M714.5 270v1M715.5 271v2M716.5 273v1M717.5 274v1M718.5 275v1M719.5 276v2M720.5 278v1M721.5 279v1M722.5 280v1M723.5 281v1M724.5 281v1M725.5 282v1M726.5 283v1M727.5 283v1M728.5 284v1M729.5 284v1M730.5 285v1M731.5 285v1M732.5 285v1M733.5 285v1M734.5 285v1M735.5 285v1M736.5 285v1M737.5 285v1M738.5 285v1M739.5 284v1M740.5 284v1M741.5 283v1M742.5 283v1M743.5 282v1M744.5 281v1M745.5 280v1M746.5 280v1M747.5 278v2M748.5 277v1M749.5 276v1M750.5 275v1M751.5 274v1M752.5 272v2M753.5 271v1M754.5 269v2M755.5 268v1M756.5 266v2M757.5 265v1M758.5 263v2M759.5 262v1M760.5 260v2M761.5 258v2M762.5 257v1M763.5 255v2M764.5 253v2M765.5 251v2M766.5 250v1M767.5 248v2M768.5 246v2M769.5 244v2M770.5 242v2M771.5 241v1M772.5 239v2M773.5 237v2M774.5 235v2M775.5 233v2M776.5 232v1M777.5 230v2M778.5 228v2M779.5 226v2M780.5 225v1M781.5 223v2M782.5 221v2M783.5 220v1M784.5 218v2M785.5 216v2M786.5 215v1M787.5 214v1M788.5 212v2M789.5 211v1M790.5 210v1M791.5 209v1M792.5 208v1M793.5 207v1M794.5 206v1M795.5 205v1M796.5 205v1M797.5 204v1M798.5 204v1M799.5 204v1M800.5 204v1M801.5 204v1M802.5 204v1M803.5 205v1M804.5 205v1M805.5 206v1M806.5 207v1M807.5 208v1M808.5 209v1M809.5 210v1M810.5 211v1M811.5 212v2M812.5 214v1M813.5 215v2M814.5 217v1M815.5 218v2M816.5 220v1M817.5 221v2M818.5 223v2M819.5 225v2M820.5 227v1M821.5 228v2M822.5 230v2M823.5 232v2M824.5 234v2M825.5 236v1M826.5 237v2M827.5 239v2M828.5 241v2M829.5 243v2M830.5 245v1M831.5 246v2M832.5 248v2M833.5 250v2M834.5 252v1M835.5 253v2M836.5 255v2M837.5 257v2M838.5 259v1M839.5 260v2M840.5 262v1M841.5 263v2M842.5 265v2M843.5 267v1M844.5 268v2M845.5 270v1M846.5 271v1M847.5 272v2M848.5 274v1M849.5 275v1M850.5 276v1M851.5 277v1M852.5 278v1M853.5 279v1M854.5 280v1M855.5 281v1M856.5 282v1M857.5 283v1M858.5 283v1M859.5 284v1M860.5 284v1M861.5 285v1M862.5 285v1M863.5 285v1M864.5 285v1M865.5 285v1M866.5 285v1M867.5 285v1M868.5 285v1M869.5 285v1M870.5 285v1M871.5 284v1M872.5 284v1M873.5 283v1M874.5 282v1M875.5 282v1M876.5 281v1M877.5 280v1M878.5 279v1M879.5 278v1M880.5 277v1M881.5 275v2M882.5 274v1M883.5 273v1M884.5 271v2M885.5 270v1M886.5 268v2M887.5 267v1M888.5 265v2M889.5 264v1M890.5 262v2M891.5 261v1M892.5 259v2M893.5 257v2M894.5 255v2M895.5 254v1M896.5 252v2M897.5 250v2M898.5 248v2M899.5 247v1M900.5 245v2M901.5 243v2M902.5 241v2M903.5 239v2M904.5 238v1M905.5 236v2M906.5 234v2M907.5 232v2M908.5 230v2M909.5 229v1M910.5 227v2M911.5 225v2M912.5 223v2M913.5 222v1M914.5 220v2M915.5 219v1M916.5 217v2M917.5 215v2M918.5 214v1M919.5 213v1M920.5 211v2M921.5 210v1M922.5 209v1M923.5 208v1M924.5 207v1M925.5 206v1M926.5 206v1M927.5 205v1M928.5 205v1M929.5 204v1M930.5 204v1M931.5 204v1M932.5 204v1M933.5 204v1M934.5 205v1M935.5 205v1M936.5 206v1M937.5 206v1M938.5 207v1M939.5 208v1M940.5 209v2M941.5 211v1M942.5 212v1M943.5 213v2M944.5 215v1M945.5 216v2M946.5 218v1M947.5 219v2M948.5 221v2M949.5 223v1M950.5 224v2M951.5 226v2M952.5 228v2M953.5 230v1M954.5 231v2M955.5 233v2M956.5 235v2M957.5 237v2M958.5 239v1M959.5 240v2M960.5 242v2M961.5 244v2M962.5 246v2M963.5 248v1M964.5 249v2M571.5 251v1M572.5 252v2M573.5 254v2M574.5 256v1M575.5 257v2M576.5 259v1M577.5 260v2M578.5 262v1M579.5 263v2M580.5 265v1M581.5 266v2M582.5 268v1M583.5 269v2M584.5 271v1M585.5 272v1M586.5 273v1M587.5 274v1M588.5 275v1M589.5 276v1M590.5 277v1M591.5 278v1M592.5 279v1M593.5 280v1M594.5 281v1M595.5 282v1M596.5 282v1M597.5 283v1M598.5 283v1M599.5 283v1M600.5 284v1M601.5 284v1M602.5 284v1M603.5 284v1M604.5 284v1M605.5 284v1M606.5 284v1M607.5 283v1M608.5 283v1M609.5 282v1M610.5 282v1M611.5 281v1M612.5 280v1M613.5 280v1M614.5 279v1M615.5 278v1M616.5 277v1M617.5 276v1M618.5 274v2M619.5 273v1M620.5 272v1M621.5 271v1M622.5 269v2M623.5 268v1M624.5 266v2M625.5 265v1M626.5 263v2M627.5 262v1M628.5 260v2M629.5 259v1M630.5 257v2M631.5 255v2M632.5 254v1M633.5 252v2M634.5 250v2M635.5 249v1M636.5 247v2M637.5 245v2M638.5 244v1M639.5 242v2M640.5 240v2M641.5 239v1M642.5 237v2M643.5 235v2M644.5 234v1M645.5 232v2M646.5 231v1M647.5 229v2M648.5 227v2M649.5 226v1M650.5 224v2M651.5 223v1M652.5 221v2M653.5 220v1M654.5 219v1M655.5 217v2M656.5 216v1M657.5 215v1M658.5 214v1M659.5 213v1M660.5 212v1M661.5 211v1M662.5 210v1M663.5 209v1M664.5 209v1M665.5 208v1M666.5 208v1M667.5 208v1M668.5 208v1M669.5 208v1M670.5 208v1M671.5 208v1M672.5 208v1M673.5 209v1M674.5 210v1M675.5 210v1M676.5 211v1M677.5 212v1M678.5 213v1M679.5 214v2M680.5 216v1M681.5 217v1M682.5 218v1M683.5 219v2M684.5 221v1M685.5 222v2M686.5 224v1M687.5 225v2M688.5 227v2M689.5 229v1M690.5 230v2M691.5 232v1M692.5 233v2M693.5 235v2M694.5 237v1M695.5 238v2M696.5 240v2M697.5 242v1M698.5 243v2M699.5 245v2M700.5 247v1M701.5 248v2M702.5 250v2M703.5 252v1M704.5 253v2M705.5 255v2M706.5 257v1M707.5 258v2M708.5 260v1M709.5 261v2M710.5 263v1M711.5 264v2M712.5 266v1M713.5 267v2M714.5 269v1M715.5 270v1M716.5 271v2M717.5 273v1M718.5 274v1M719.5 275v1M720.5 276v1M721.5 277v1M722.5 278v1M723.5 279v1M724.5 280v1M725.5 281v1M726.5 281v1M727.5 282v1M728.5 282v1M729.5 283v1M730.5 283v1M731.5 284v1M732.5 284v1M733.5 284v1M734.5 284v1M735.5 284v1M736.5 284v1M737.5 284v1M738.5 283v1M739.5 283v1M740.5 282v1M741.5 282v1M742.5 281v1M743.5 281v1M744.5 280v1M745.5 279v1M746.5 278v1M747.5 277v1M748.5 276v1M749.5 275v1M750.5 274v1M751.5 272v2M752.5 271v1M753.5 270v1M754.5 268v2M755.5 267v1M756.5 265v2M757.5 264v1M758.5 262v2M759.5 261v1M760.5 259v2M761.5 258v1M762.5 256v2M763.5 254v2M764.5 253v1M765.5 251v2M766.5 249v2M767.5 248v1M768.5 246v2M769.5 244v2M770.5 242v2M771.5 241v1M772.5 239v2M773.5 237v2M774.5 236v1M775.5 234v2M776.5 233v1M777.5 231v2M778.5 229v2M779.5 228v1M780.5 226v2M781.5 225v1M782.5 223v2M783.5 222v1M784.5 220v2M785.5 219v1M786.5 218v1M787.5 216v2M788.5 215v1M789.5 214v1M790.5 213v1M791.5 212v1M792.5 211v1M793.5 210v1M794.5 210v1M795.5 209v1M796.5 208v1M797.5 208v1M798.5 208v1M799.5 208v1M800.5 208v1M801.5 208v1M802.5 208v1M803.5 208v1M804.5 209v1M805.5 209v1M806.5 210v1M807.5 211v1M808.5 212v1M809.5 213v1M810.5 214v1M811.5 215v1M812.5 216v2M813.5 218v1M814.5 219v1M815.5 220v2M816.5 222v1M817.5 223v2M818.5 225v1M819.5 226v2M820.5 228v2M821.5 230v1M822.5 231v2M823.5 233v1M824.5 234v2M825.5 236v2M826.5 238v1M827.5 239v2M828.5 241v2M829.5 243v1M830.5 244v2M831.5 246v2M832.5 248v1M833.5 249v2M834.5 251v2M835.5 253v1M836.5 254v2M837.5 256v2M838.5 258v1M839.5 259v2M840.5 261v1M841.5 262v2M842.5 264v1M843.5 265v2M844.5 267v1M845.5 268v2M846.5 270v1M847.5 271v1M848.5 272v1M849.5 273v2M850.5 275v1M851.5 276v1M852.5 277v1M853.5 278v1M854.5 279v1M855.5 280v1M856.5 280v1M857.5 281v1M858.5 282v1M859.5 282v1M860.5 283v1M861.5 283v1M862.5 284v1M863.5 284v1M864.5 284v1M865.5 284v1M866.5 284v1M867.5 284v1M868.5 284v1M869.5 283v1M870.5 283v1M871.5 283v1M872.5 282v1M873.5 282v1M874.5 281v1M875.5 280v1M876.5 279v1M877.5 278v1M878.5 277v1M879.5 276v1M880.5 275v1M881.5 274v1M882.5 273v1M883.5 271v2M884.5 270v1M885.5 269v1M886.5 267v2M887.5 266v1M888.5 264v2M889.5 263v1M890.5 261v2M891.5 260v1M892.5 258v2M893.5 256v2M894.5 255v1M895.5 253v2M896.5 251v2M897.5 250v1M898.5 248v2M899.5 246v2M900.5 245v1M901.5 243v2M902.5 241v2M903.5 240v1M904.5 238v2M905.5 236v2M906.5 235v1M907.5 233v2M908.5 232v1M909.5 230v2M910.5 228v2M911.5 227v1M912.5 225v2M913.5 224v1M914.5 222v2M915.5 221v1M916.5 219v2M917.5 218v1M918.5 217v1M919.5 216v1M920.5 214v2M921.5 213v1M922.5 212v1M923.5 211v1M924.5 211v1M925.5 210v1M926.5 209v1M927.5 209v1M928.5 208v1M929.5 208v1M930.5 208v1M931.5 208v1M932.5 208v1M933.5 208v1M934.5 208v1M935.5 209v1M936.5 209v1M937.5 210v1M938.5 211v1M939.5 212v1M940.5 212v2M941.5 214v1M942.5 215v1M943.5 216v1M944.5 217v2M945.5 219v1M946.5 220v1M947.5 221v2M948.5 223v1M949.5 224v2M950.5 226v2M951.5 228v1M952.5 229v2M953.5 231v1M954.5 232v2M955.5 234v2M956.5 236v1M957.5 237v2M958.5 239v1M959.5 240v2M960.5 242v2M961.5 244v2M962.5 246v1M963.5 247v2M964.5 249v2M571.5 250v2M572.5 252v1M573.5 253v2M574.5 255v1M575.5 256v2M576.5 258v1M577.5 259v2M578.5 261v1M579.5 262v2M580.5 264v1M581.5 265v2M582.5 267v1M583.5 268v1M584.5 269v1M585.5 270v2M586.5 272v1M587.5 273v1M588.5 274v1M589.5 275v1M590.5 276v1M591.5 277v1M592.5 278v1M593.5 279v1M594.5 279v1M595.5 280v1M596.5 281v1M597.5 281v1M598.5 282v1M599.5 282v1M600.5 282v1M601.5 282v1M602.5 282v1M603.5 282v1M604.5 282v1M605.5 282v1M606.5 282v1M607.5 282v1M608.5 281v1M609.5 281v1M610.5 280v1M611.5 280v1M612.5 279v1M613.5 278v1M614.5 277v1M615.5 276v1M616.5 275v1M617.5 274v1M618.5 273v1M619.5 272v1M620.5 271v1M621.5 269v2M622.5 268v1M623.5 267v1M624.5 265v2M625.5 264v1M626.5 262v2M627.5 261v1M628.5 259v2M629.5 258v1M630.5 256v2M631.5 255v1M632.5 253v2M633.5 251v2M634.5 250v1M635.5 248v2M636.5 247v1M637.5 245v2M638.5 243v2M639.5 242v1M640.5 240v2M641.5 239v1M642.5 237v2M643.5 236v1M644.5 235v1M645.5 233v2M646.5 232v1M647.5 230v2M648.5 229v1M649.5 228v1M650.5 226v2M651.5 225v1M652.5 224v1M653.5 222v2M654.5 221v1M655.5 220v1M656.5 219v1M657.5 218v1M658.5 217v1M659.5 216v1M660.5 215v1M661.5 214v1M662.5 214v1M663.5 213v1M664.5 212v1M665.5 212v1M666.5 212v1M667.5 211v1M668.5 211v1M669.5 211v1M670.5 212v1M671.5 212v1M672.5 212v1M673.5 213v1M674.5 213v1M675.5 214v1M676.5 215v1M677.5 215v1M678.5 216v1M679.5 217v1M680.5 218v2M681.5 220v1M682.5 221v1M683.5 222v1M684.5 223v1M685.5 224v2M686.5 226v1M687.5 227v2M688.5 229v1M689.5 230v1M690.5 231v2M691.5 233v1M692.5 234v2M693.5 236v1M694.5 237v1M695.5 238v2M696.5 240v1M697.5 241v2M698.5 243v2M699.5 245v1M700.5 246v2M701.5 248v2M702.5 250v1M703.5 251v2M704.5 253v1M705.5 254v2M706.5 256v1M707.5 257v2M708.5 259v1M709.5 260v2M710.5 262v1M711.5 263v2M712.5 265v1M713.5 266v1M714.5 267v2M715.5 269v1M716.5 270v1M717.5 271v1M718.5 272v2M719.5 274v1M720.5 275v1M721.5 276v1M722.5 277v1M723.5 278v1M724.5 278v1M725.5 279v1M726.5 280v1M727.5 280v1M728.5 281v1M729.5 281v1M730.5 282v1M731.5 282v1M732.5 282v1M733.5 282v1M734.5 282v1M735.5 282v1M736.5 282v1M737.5 282v1M738.5 282v1M739.5 281v1M740.5 281v1M741.5 280v1M742.5 280v1M743.5 279v1M744.5 278v1M745.5 278v1M746.5 277v1M747.5 276v1M748.5 275v1M749.5 273v2M750.5 272v1M751.5 271v1M752.5 270v1M753.5 268v2M754.5 267v1M755.5 266v1M756.5 264v2M757.5 263v1M758.5 261v2M759.5 260v1M760.5 258v2M761.5 257v1M762.5 255v2M763.5 254v1M764.5 252v2M765.5 250v2M766.5 249v1M767.5 247v2M768.5 246v1M769.5 244v2M770.5 242v2M771.5 241v1M772.5 239v2M773.5 238v1M774.5 237v1M775.5 235v2M776.5 234v1M777.5 232v2M778.5 231v1M779.5 229v2M780.5 228v1M781.5 227v1M782.5 225v2M783.5 224v1M784.5 223v1M785.5 222v1M786.5 220v2M787.5 219v1M788.5 218v1M789.5 217v1M790.5 216v1M791.5 215v1M792.5 215v1M793.5 214v1M794.5 213v1M795.5 213v1M796.5 212v1M797.5 212v1M798.5 212v1M799.5 211v1M800.5 211v1M801.5 212v1M802.5 212v1M803.5 212v1M804.5 212v1M805.5 213v1M806.5 214v1M807.5 214v1M808.5 215v1M809.5 216v1M810.5 217v1M811.5 218v1M812.5 219v1M813.5 220v2M814.5 222v1M815.5 223v1M816.5 224v1M817.5 225v2M818.5 227v1M819.5 228v1M820.5 229v2M821.5 231v1M822.5 232v2M823.5 234v1M824.5 235v2M825.5 237v1M826.5 238v1M827.5 239v2M828.5 241v2M829.5 243v1M830.5 244v2M831.5 246v1M832.5 247v2M833.5 249v2M834.5 251v1M835.5 252v2M836.5 254v1M837.5 255v2M838.5 257v1M839.5 258v2M840.5 260v1M841.5 261v2M842.5 263v1M843.5 264v2M844.5 266v1M845.5 267v1M846.5 268v2M847.5 270v1M848.5 271v1M849.5 272v1M850.5 273v1M851.5 274v1M852.5 275v1M853.5 276v1M854.5 277v1M855.5 278v1M856.5 279v1M857.5 280v1M858.5 280v1M859.5 281v1M860.5 281v1M861.5 282v1M862.5 282v1M863.5 282v1M864.5 282v1M865.5 282v1M866.5 282v1M867.5 282v1M868.5 282v1M869.5 282v1M870.5 282v1M871.5 281v1M872.5 281v1M873.5 280v1M874.5 279v1M875.5 279v1M876.5 278v1M877.5 277v1M878.5 276v1M879.5 275v1M880.5 274v1M881.5 273v1M882.5 271v2M883.5 270v1M884.5 269v1M885.5 267v2M886.5 266v1M887.5 265v1M888.5 263v2M889.5 262v1M890.5 260v2M891.5 259v1M892.5 257v2M893.5 256v1M894.5 254v2M895.5 253v1M896.5 251v2M897.5 249v2M898.5 248v1M899.5 246v2M900.5 245v1M901.5 243v2M902.5 241v2M903.5 240v1M904.5 238v2M905.5 237v1M906.5 236v1M907.5 234v2M908.5 233v1M909.5 231v2M910.5 230v1M911.5 229v1M912.5 227v2M913.5 226v1M914.5 225v1M915.5 223v2M916.5 222v1M917.5 221v1M918.5 220v1M919.5 219v1M920.5 218v1M921.5 217v1M922.5 216v1M923.5 215v1M924.5 214v1M925.5 213v1M926.5 213v1M927.5 212v1M928.5 212v1M929.5 212v1M930.5 211v1M931.5 211v1M932.5 211v1M933.5 212v1M934.5 212v1M935.5 212v1M936.5 213v1M937.5 213v1M938.5 214v1M939.5 215v1M940.5 216v1M941.5 217v1M942.5 218v1M943.5 219v1M944.5 220v1M945.5 221v1M946.5 222v2M947.5 224v1M948.5 225v1M949.5 226v2M950.5 228v1M951.5 229v1M952.5 230v2M953.5 232v1M954.5 233v2M955.5 235v1M956.5 236v2M957.5 238v1M958.5 239v1M959.5 240v2M960.5 242v2M961.5 244v1M962.5 245v2M963.5 247v1M964.5 248v2" stroke="#ff0000" stroke-width="1" fill="none" shape-rendering="crispEdges"/><path d="M563 140.5 L971.5 140.5" stroke="#b4b4b4" stroke-width="1" fill="none"/><path d="M570.5 140.5 L570.5 307.5" stroke="#b4b4b4" stroke-width="1" fill="none"/><path d="M964.5 140.5 L964.5 307.5" stroke="#b4b4b4" stroke-width="1" fill="none"/><path d="M563 307.5 L971.5 307.5" stroke="#b4b4b4" stroke-width="1" fill="none"/><path d="M563 222.5 L570.5 222.5" stroke="#b4b4b4" stroke-width="1" fill="none"/><path d="M964.5 222.5 L971.5 222.5" stroke="#b4b4b4" stroke-width="1" fill="none"/><text x="518.6" y="145" font-size="14" font-weight="normal" fill="#c8c8c8" text-anchor="start" textLength="43.4" lengthAdjust="spacingAndGlyphs" stroke="#c8c8c8" stroke-width="0.35" style="filter:brightness(1)">235.8V</text><text x="518.6" y="228.4" font-size="14" font-weight="normal" fill="#c8c8c8" text-anchor="start" textLength="43.4" lengthAdjust="spacingAndGlyphs" stroke="#c8c8c8" stroke-width="0.35" style="filter:brightness(1)">230.9V</text><text x="518.6" y="312" font-size="14" font-weight="normal" fill="#c8c8c8" text-anchor="start" textLength="43.4" lengthAdjust="spacingAndGlyphs" stroke="#c8c8c8" stroke-width="0.35" style="filter:brightness(1)">225.9V</text><text x="1010.2" y="145" font-size="14" font-weight="normal" fill="#c8c8c8" text-anchor="end" textLength="35" lengthAdjust="spacingAndGlyphs" stroke="#c8c8c8" stroke-width="0.35" style="filter:brightness(1)">55mA</text><text x="1010.2" y="228.4" font-size="14" font-weight="normal" fill="#c8c8c8" text-anchor="end" textLength="35" lengthAdjust="spacingAndGlyphs" stroke="#c8c8c8" stroke-width="0.35" style="filter:brightness(1)">28mA</text><text x="1010.2" y="312" font-size="14" font-weight="normal" fill="#c8c8c8" text-anchor="end" textLength="27.4" lengthAdjust="spacingAndGlyphs" stroke="#c8c8c8" stroke-width="0.35" style="filter:brightness(1)">0mA</text><text x="640" y="135" font-size="14" font-weight="bold" fill="#00ff00" text-anchor="start" textLength="54.5" lengthAdjust="spacingAndGlyphs" stroke="#00ff00" stroke-width="0" style="filter:brightness(1)">V(Ua,Uk)</text><text x="828" y="135" font-size="14" font-weight="bold" fill="#ff0000" text-anchor="start" textLength="74" lengthAdjust="spacingAndGlyphs" stroke="#ff0000" stroke-width="0" style="filter:brightness(1)">Ix(U1:Plate)</text><path d="M601.5 365.5 L601.5 514.5" stroke="#888888" stroke-width="1" fill="none" stroke-dasharray="3 3" stroke-dashoffset="3.5"/><path d="M601.5 535.5 L601.5 688.5" stroke="#888888" stroke-width="1" fill="none" stroke-dasharray="3 3" stroke-dashoffset="3.5"/><path d="M649.5 365.5 L649.5 514.5" stroke="#888888" stroke-width="1" fill="none" stroke-dasharray="3 3" stroke-dashoffset="3.5"/><path d="M649.5 535.5 L649.5 688.5" stroke="#888888" stroke-width="1" fill="none" stroke-dasharray="3 3" stroke-dashoffset="3.5"/><path d="M696.5 365.5 L696.5 514.5" stroke="#888888" stroke-width="1" fill="none" stroke-dasharray="3 3" stroke-dashoffset="3.5"/><path d="M696.5 535.5 L696.5 688.5" stroke="#888888" stroke-width="1" fill="none" stroke-dasharray="3 3" stroke-dashoffset="3.5"/><path d="M743.5 365.5 L743.5 514.5" stroke="#888888" stroke-width="1" fill="none" stroke-dasharray="3 3" stroke-dashoffset="3.5"/><path d="M743.5 535.5 L743.5 688.5" stroke="#888888" stroke-width="1" fill="none" stroke-dasharray="3 3" stroke-dashoffset="3.5"/><path d="M791.5 365.5 L791.5 514.5" stroke="#888888" stroke-width="1" fill="none" stroke-dasharray="3 3" stroke-dashoffset="3.5"/><path d="M791.5 535.5 L791.5 688.5" stroke="#888888" stroke-width="1" fill="none" stroke-dasharray="3 3" stroke-dashoffset="3.5"/><path d="M838.5 365.5 L838.5 514.5" stroke="#888888" stroke-width="1" fill="none" stroke-dasharray="3 3" stroke-dashoffset="3.5"/><path d="M838.5 535.5 L838.5 688.5" stroke="#888888" stroke-width="1" fill="none" stroke-dasharray="3 3" stroke-dashoffset="3.5"/><path d="M886.5 365.5 L886.5 514.5" stroke="#888888" stroke-width="1" fill="none" stroke-dasharray="3 3" stroke-dashoffset="3.5"/><path d="M886.5 535.5 L886.5 688.5" stroke="#888888" stroke-width="1" fill="none" stroke-dasharray="3 3" stroke-dashoffset="3.5"/><path d="M933.5 365.5 L933.5 514.5" stroke="#888888" stroke-width="1" fill="none" stroke-dasharray="3 3" stroke-dashoffset="3.5"/><path d="M933.5 535.5 L933.5 688.5" stroke="#888888" stroke-width="1" fill="none" stroke-dasharray="3 3" stroke-dashoffset="3.5"/><path d="M980.5 365.5 L980.5 514.5" stroke="#888888" stroke-width="1" fill="none" stroke-dasharray="3 3" stroke-dashoffset="3.5"/><path d="M980.5 535.5 L980.5 688.5" stroke="#888888" stroke-width="1" fill="none" stroke-dasharray="3 3" stroke-dashoffset="3.5"/><path d="M554.5 376.5 L1004.5 376.5" stroke="#888888" stroke-width="1" fill="none" stroke-dasharray="3 3"/><path d="M554.5 411.5 L1004.5 411.5" stroke="#888888" stroke-width="1" fill="none" stroke-dasharray="3 3"/><path d="M554.5 445.5 L1004.5 445.5" stroke="#888888" stroke-width="1" fill="none" stroke-dasharray="3 3"/><path d="M554.5 480.5 L1004.5 480.5" stroke="#888888" stroke-width="1" fill="none" stroke-dasharray="3 3"/><path d="M554.5 666.5 L1004.5 666.5" stroke="#888888" stroke-width="1" fill="none" stroke-dasharray="3 3"/><path d="M554.5 644.5 L1004.5 644.5" stroke="#888888" stroke-width="1" fill="none" stroke-dasharray="3 3"/><path d="M554.5 622.5 L1004.5 622.5" stroke="#888888" stroke-width="1" fill="none" stroke-dasharray="3 3"/><path d="M554.5 601.5 L1004.5 601.5" stroke="#888888" stroke-width="1" fill="none" stroke-dasharray="3 3"/><path d="M554.5 579.5 L1004.5 579.5" stroke="#888888" stroke-width="1" fill="none" stroke-dasharray="3 3"/><path d="M554.5 557.5 L1004.5 557.5" stroke="#888888" stroke-width="1" fill="none" stroke-dasharray="3 3"/><g shape-rendering="crispEdges"><path d="M554.5 505.9 L560.7 488.6 L568.4 469.6 L578.2 449.4 L590.5 428.9 L606.0 409.3 L625.6 391.9 L650.2 378.2 L681.2 369.6 L720.3 366.9 L769.5 370.6 L831.6 380.2 L909.8 394.8 L1004.5 412.4" stroke="#00ff00" stroke-width="1" fill="none"/><path d="M554.5 541.2 L560.7 548.1 L568.4 556.7 L578.2 565.8 L590.5 575.7 L606.0 587.6 L625.6 601.5 L650.2 613.9 L681.2 627.2 L720.3 641.1 L769.5 654.8 L831.6 667.1 L909.8 677.4 L1004.5 686.5" stroke="#ff0000" stroke-width="1" fill="none"/></g><path d="M554.5 365.5 L1004.5 365.5" stroke="#b4b4b4" stroke-width="1" fill="none"/><path d="M547 514.5 L1004.5 514.5" stroke="#b4b4b4" stroke-width="1" fill="none"/><path d="M554.5 365.5 L554.5 514.5" stroke="#b4b4b4" stroke-width="1" fill="none"/><path d="M1004.5 365.5 L1004.5 514.5" stroke="#b4b4b4" stroke-width="1" fill="none"/><path d="M547 535.5 L1004.5 535.5" stroke="#b4b4b4" stroke-width="1" fill="none"/><path d="M547 688.5 L1004.5 688.5" stroke="#b4b4b4" stroke-width="1" fill="none"/><path d="M554.5 535.5 L554.5 688.5" stroke="#b4b4b4" stroke-width="1" fill="none"/><path d="M1004.5 535.5 L1004.5 688.5" stroke="#b4b4b4" stroke-width="1" fill="none"/><path d="M547 376.5 L554.5 376.5" stroke="#b4b4b4" stroke-width="1" fill="none"/><path d="M547 411.5 L554.5 411.5" stroke="#b4b4b4" stroke-width="1" fill="none"/><path d="M547 445.5 L554.5 445.5" stroke="#b4b4b4" stroke-width="1" fill="none"/><path d="M547 480.5 L554.5 480.5" stroke="#b4b4b4" stroke-width="1" fill="none"/><path d="M547 666.5 L554.5 666.5" stroke="#b4b4b4" stroke-width="1" fill="none"/><path d="M547 644.5 L554.5 644.5" stroke="#b4b4b4" stroke-width="1" fill="none"/><path d="M547 622.5 L554.5 622.5" stroke="#b4b4b4" stroke-width="1" fill="none"/><path d="M547 601.5 L554.5 601.5" stroke="#b4b4b4" stroke-width="1" fill="none"/><path d="M547 579.5 L554.5 579.5" stroke="#b4b4b4" stroke-width="1" fill="none"/><path d="M547 557.5 L554.5 557.5" stroke="#b4b4b4" stroke-width="1" fill="none"/><path d="M554.5 688.5 L554.5 695.5" stroke="#b4b4b4" stroke-width="1" fill="none"/><path d="M601.5 688.5 L601.5 695.5" stroke="#b4b4b4" stroke-width="1" fill="none"/><path d="M649.5 688.5 L649.5 695.5" stroke="#b4b4b4" stroke-width="1" fill="none"/><path d="M696.5 688.5 L696.5 695.5" stroke="#b4b4b4" stroke-width="1" fill="none"/><path d="M743.5 688.5 L743.5 695.5" stroke="#b4b4b4" stroke-width="1" fill="none"/><path d="M791.5 688.5 L791.5 695.5" stroke="#b4b4b4" stroke-width="1" fill="none"/><path d="M838.5 688.5 L838.5 695.5" stroke="#b4b4b4" stroke-width="1" fill="none"/><path d="M886.5 688.5 L886.5 695.5" stroke="#b4b4b4" stroke-width="1" fill="none"/><path d="M933.5 688.5 L933.5 695.5" stroke="#b4b4b4" stroke-width="1" fill="none"/><path d="M980.5 688.5 L980.5 695.5" stroke="#b4b4b4" stroke-width="1" fill="none"/><text x="545.3" y="381.1" font-size="14" font-weight="normal" fill="#c8c8c8" text-anchor="end" textLength="26" lengthAdjust="spacingAndGlyphs" stroke="#c8c8c8" stroke-width="0.35" style="filter:brightness(1)">20m</text><text x="545.3" y="416.1" font-size="14" font-weight="normal" fill="#c8c8c8" text-anchor="end" textLength="26" lengthAdjust="spacingAndGlyphs" stroke="#c8c8c8" stroke-width="0.35" style="filter:brightness(1)">17m</text><text x="545.3" y="450.1" font-size="14" font-weight="normal" fill="#c8c8c8" text-anchor="end" textLength="26" lengthAdjust="spacingAndGlyphs" stroke="#c8c8c8" stroke-width="0.35" style="filter:brightness(1)">14m</text><text x="545.3" y="485.1" font-size="14" font-weight="normal" fill="#c8c8c8" text-anchor="end" textLength="26" lengthAdjust="spacingAndGlyphs" stroke="#c8c8c8" stroke-width="0.35" style="filter:brightness(1)">11m</text><text x="545.3" y="519.1" font-size="14" font-weight="normal" fill="#c8c8c8" text-anchor="end" textLength="18.3" lengthAdjust="spacingAndGlyphs" stroke="#c8c8c8" stroke-width="0.35" style="filter:brightness(1)">8m</text><text x="545.3" y="540.1" font-size="14" font-weight="normal" fill="#c8c8c8" text-anchor="end" textLength="14" lengthAdjust="spacingAndGlyphs" stroke="#c8c8c8" stroke-width="0.35" style="filter:brightness(1)">18</text><text x="545.3" y="562.1" font-size="14" font-weight="normal" fill="#c8c8c8" text-anchor="end" textLength="14" lengthAdjust="spacingAndGlyphs" stroke="#c8c8c8" stroke-width="0.35" style="filter:brightness(1)">16</text><text x="545.3" y="584.1" font-size="14" font-weight="normal" fill="#c8c8c8" text-anchor="end" textLength="14" lengthAdjust="spacingAndGlyphs" stroke="#c8c8c8" stroke-width="0.35" style="filter:brightness(1)">14</text><text x="545.3" y="606.1" font-size="14" font-weight="normal" fill="#c8c8c8" text-anchor="end" textLength="14" lengthAdjust="spacingAndGlyphs" stroke="#c8c8c8" stroke-width="0.35" style="filter:brightness(1)">12</text><text x="545.3" y="627.1" font-size="14" font-weight="normal" fill="#c8c8c8" text-anchor="end" textLength="14" lengthAdjust="spacingAndGlyphs" stroke="#c8c8c8" stroke-width="0.35" style="filter:brightness(1)">10</text><text x="545.3" y="649.1" font-size="14" font-weight="normal" fill="#c8c8c8" text-anchor="end" textLength="7" lengthAdjust="spacingAndGlyphs" stroke="#c8c8c8" stroke-width="0.35" style="filter:brightness(1)">8</text><text x="545.3" y="671.1" font-size="14" font-weight="normal" fill="#c8c8c8" text-anchor="end" textLength="7" lengthAdjust="spacingAndGlyphs" stroke="#c8c8c8" stroke-width="0.35" style="filter:brightness(1)">6</text><text x="545.3" y="693.1" font-size="14" font-weight="normal" fill="#c8c8c8" text-anchor="end" textLength="7" lengthAdjust="spacingAndGlyphs" stroke="#c8c8c8" stroke-width="0.35" style="filter:brightness(1)">4</text><text x="554.5" y="709" font-size="14" font-weight="normal" fill="#c8c8c8" text-anchor="middle" textLength="15.0" lengthAdjust="spacingAndGlyphs" stroke="#c8c8c8" stroke-width="0.35" style="filter:brightness(1)">30</text><text x="601.5" y="709" font-size="14" font-weight="normal" fill="#c8c8c8" text-anchor="middle" textLength="15.0" lengthAdjust="spacingAndGlyphs" stroke="#c8c8c8" stroke-width="0.35" style="filter:brightness(1)">90</text><text x="649.5" y="709" font-size="14" font-weight="normal" fill="#c8c8c8" text-anchor="middle" textLength="22.5" lengthAdjust="spacingAndGlyphs" stroke="#c8c8c8" stroke-width="0.35" style="filter:brightness(1)">150</text><text x="696.5" y="709" font-size="14" font-weight="normal" fill="#c8c8c8" text-anchor="middle" textLength="22.5" lengthAdjust="spacingAndGlyphs" stroke="#c8c8c8" stroke-width="0.35" style="filter:brightness(1)">210</text><text x="743.5" y="709" font-size="14" font-weight="normal" fill="#c8c8c8" text-anchor="middle" textLength="22.5" lengthAdjust="spacingAndGlyphs" stroke="#c8c8c8" stroke-width="0.35" style="filter:brightness(1)">270</text><text x="791.5" y="709" font-size="14" font-weight="normal" fill="#c8c8c8" text-anchor="middle" textLength="22.5" lengthAdjust="spacingAndGlyphs" stroke="#c8c8c8" stroke-width="0.35" style="filter:brightness(1)">330</text><text x="838.5" y="709" font-size="14" font-weight="normal" fill="#c8c8c8" text-anchor="middle" textLength="22.5" lengthAdjust="spacingAndGlyphs" stroke="#c8c8c8" stroke-width="0.35" style="filter:brightness(1)">390</text><text x="886.5" y="709" font-size="14" font-weight="normal" fill="#c8c8c8" text-anchor="middle" textLength="22.5" lengthAdjust="spacingAndGlyphs" stroke="#c8c8c8" stroke-width="0.35" style="filter:brightness(1)">450</text><text x="933.5" y="709" font-size="14" font-weight="normal" fill="#c8c8c8" text-anchor="middle" textLength="22.5" lengthAdjust="spacingAndGlyphs" stroke="#c8c8c8" stroke-width="0.35" style="filter:brightness(1)">510</text><text x="980.5" y="709" font-size="14" font-weight="normal" fill="#c8c8c8" text-anchor="middle" textLength="22.5" lengthAdjust="spacingAndGlyphs" stroke="#c8c8c8" stroke-width="0.35" style="filter:brightness(1)">570</text><text x="778.7" y="360.2" font-size="14" font-weight="bold" fill="#00ff00" text-anchor="middle" textLength="31.5" lengthAdjust="spacingAndGlyphs" stroke="#00ff00" stroke-width="0" style="filter:brightness(1)">prms</text><text x="779" y="530" font-size="14" font-weight="bold" fill="#ff0000" text-anchor="middle" textLength="19.2" lengthAdjust="spacingAndGlyphs" stroke="#ff0000" stroke-width="0" style="filter:brightness(1)">thd</text></svg><svg width="1024" height="744" style="z-index:50"><text x="20" y="13.2" font-size="11" font-weight="bold" fill="#fff" text-anchor="start" textLength="138" lengthAdjust="spacingAndGlyphs">LTspice IV - KHV-6V6.asc</text><text x="5" y="31.8" font-size="11" fill="#000" textLength="16" lengthAdjust="spacingAndGlyphs">File</text><rect x="5.6" y="33" width="6.2" height="1" fill="#000"/><text x="33" y="31.8" font-size="11" fill="#000" textLength="18.5" lengthAdjust="spacingAndGlyphs">Edit</text><rect x="33.8" y="33" width="5.8" height="1" fill="#000"/><text x="63" y="31.8" font-size="11" fill="#000" textLength="46" lengthAdjust="spacingAndGlyphs">Hierarchy</text><rect x="70.6" y="33" width="2.1" height="1" fill="#000"/><text x="122" y="31.8" font-size="11" fill="#000" textLength="21" lengthAdjust="spacingAndGlyphs">View</text><rect x="122" y="33" width="6.2" height="1" fill="#000"/><text x="155" y="31.8" font-size="11" fill="#000" textLength="40" lengthAdjust="spacingAndGlyphs">Simulate</text><rect x="155.5" y="33" width="5.8" height="1" fill="#000"/><text x="207.5" y="31.8" font-size="11" fill="#000" textLength="25" lengthAdjust="spacingAndGlyphs">Tools</text><rect x="207.5" y="33" width="5.7" height="1" fill="#000"/><text x="244" y="31.8" font-size="11" fill="#000" textLength="38.5" lengthAdjust="spacingAndGlyphs">Window</text><rect x="244" y="33" width="10.0" height="1" fill="#000"/><text x="294" y="31.8" font-size="11" fill="#000" textLength="21" lengthAdjust="spacingAndGlyphs">Help</text><rect x="294" y="33" width="7.4" height="1" fill="#000"/><text x="32" y="84.9" font-size="12.5" font-weight="normal" fill="#000" text-anchor="start" textLength="64" lengthAdjust="spacingAndGlyphs">KHV-6V6.asc</text><text x="130.5" y="87" font-size="12.5" font-weight="normal" fill="#000" text-anchor="start" textLength="62.5" lengthAdjust="spacingAndGlyphs">KHV-6V6.asc</text><text x="228.5" y="87" font-size="12.5" font-weight="normal" fill="#000" text-anchor="start" textLength="80" lengthAdjust="spacingAndGlyphs">KHV-6V6.log.raw</text><text x="26" y="113.8" font-size="11" font-weight="bold" fill="#fff" text-anchor="start" textLength="70.5" lengthAdjust="spacingAndGlyphs">KHV-6V6.asc</text><text x="536.5" y="113.8" font-size="11" font-weight="bold" fill="#d4d0c8" text-anchor="start" textLength="69.5" lengthAdjust="spacingAndGlyphs">KHV-6V6.asc</text><text x="536.5" y="338.8" font-size="11" font-weight="bold" fill="#d4d0c8" text-anchor="start" textLength="92" lengthAdjust="spacingAndGlyphs">KHV-6V6.log.raw</text></svg></body></html>
